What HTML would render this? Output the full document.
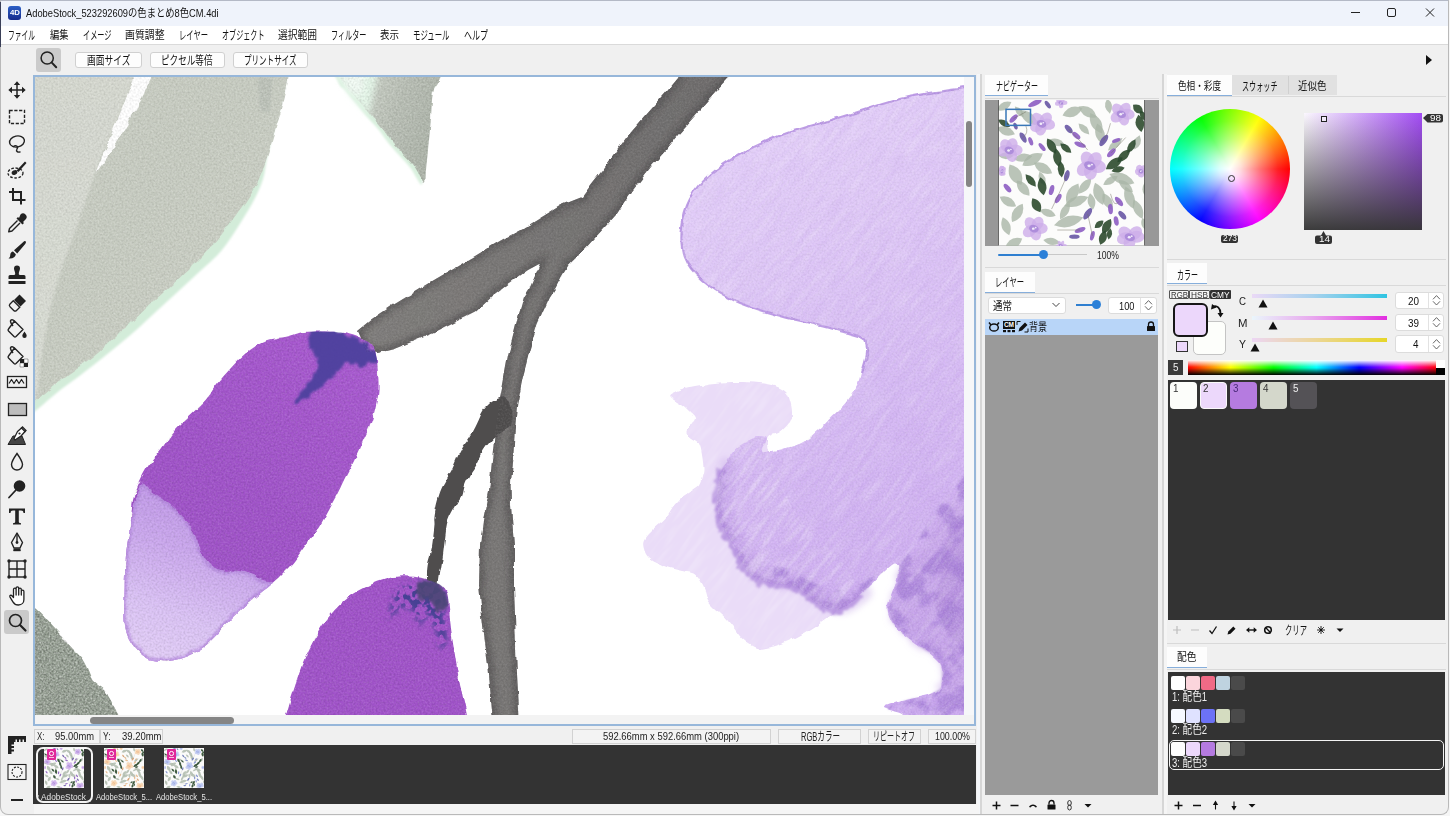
<!DOCTYPE html>
<html lang="ja"><head><meta charset="utf-8"><title>4D</title><style>
*{box-sizing:border-box;margin:0;padding:0}
html,body{width:1450px;height:816px;overflow:hidden;background:#f6f6f6;font-family:"Liberation Sans","Noto Sans CJK JP",sans-serif;font-size:11px;color:#1a1a1a}
.a{position:absolute}
.t{position:absolute;white-space:nowrap;transform-origin:0 50%}
.btn{position:absolute;background:#fdfdfd;border:1px solid #d0d0d0;border-radius:3px}
.tab{position:absolute;background:#fdfdfd;border-bottom:1.5px solid #86aedb}
.tabi{position:absolute;background:#e1e1e1}
.hl{position:absolute;height:1px;background:#d9d9d9}
.spin{position:absolute;background:#fff;border:1px solid #dcdcdc;border-radius:3px}
.dark{position:absolute;background:#333333}
svg{position:absolute;overflow:visible}
</style></head><body>
<div class="a" style="left:0;top:0;width:1449px;height:815px;background:#f0f0f0;border:1px solid #b9b9b9;border-top-color:#b4b9c6;border-radius:0 0 8px 8px"></div>
<div class="a" style="left:1px;top:1px;width:1447px;height:25px;background:#eff3fb"></div>
<div class="a" style="left:0;top:2px;width:1px;height:45px;background:#3a4058"></div>
<div class="a" style="left:1px;top:26px;width:1447px;height:18px;background:#ffffff"></div>
<div class="a" style="left:1px;top:44px;width:1447px;height:1px;background:#dadada"></div>
<div class="a" style="left:8px;top:6px;width:13px;height:13.5px;border-radius:3px;background:linear-gradient(#2b5fc6,#172c8c)"></div>
<div class="t" style="left:9.5px;top:7.8px;font-size:7.5px;line-height:10.5px;height:10.5px;color:#fff;transform:scaleX(1.042);font-weight:bold;">4D</div>
<div class="t" style="left:26px;top:6.2px;font-size:11.5px;line-height:14.5px;height:14.5px;color:#111;transform:scaleX(0.810);">AdobeStock_523292609の色まとめ8色CM.4di</div>
<svg style="left:1340px;top:0" width="110" height="26" viewBox="0 0 110 26"><g stroke="#222" stroke-width="1" fill="none"><path d="M11 12.5h9"/><rect x="47.5" y="8.5" width="8" height="8" rx="1.5"/><path d="M86 8.5l8 8M94 8.5l-8 8"/></g></svg>
<div class="t" style="left:8px;top:29.4px;font-size:12px;line-height:15px;height:15px;color:#111;transform:scaleX(0.562);">ファイル</div>
<div class="t" style="left:50px;top:28.2px;font-size:11px;line-height:14px;height:14px;color:#111;transform:scaleX(0.841);">編集</div>
<div class="t" style="left:83px;top:29.4px;font-size:12px;line-height:15px;height:15px;color:#111;transform:scaleX(0.597);">イメージ</div>
<div class="t" style="left:125px;top:28.2px;font-size:11px;line-height:14px;height:14px;color:#111;transform:scaleX(0.898);">画質調整</div>
<div class="t" style="left:178.5px;top:29.4px;font-size:12px;line-height:15px;height:15px;color:#111;transform:scaleX(0.609);">レイヤー</div>
<div class="t" style="left:221.5px;top:29.4px;font-size:12px;line-height:15px;height:15px;color:#111;transform:scaleX(0.590);">オブジェクト</div>
<div class="t" style="left:278px;top:28.2px;font-size:11px;line-height:14px;height:14px;color:#111;transform:scaleX(0.886);">選択範囲</div>
<div class="t" style="left:331px;top:29.4px;font-size:12px;line-height:15px;height:15px;color:#111;transform:scaleX(0.594);">フィルター</div>
<div class="t" style="left:380px;top:28.2px;font-size:11px;line-height:14px;height:14px;color:#111;transform:scaleX(0.864);">表示</div>
<div class="t" style="left:412.5px;top:29.4px;font-size:12px;line-height:15px;height:15px;color:#111;transform:scaleX(0.617);">モジュール</div>
<div class="t" style="left:463.5px;top:29.4px;font-size:12px;line-height:15px;height:15px;color:#111;transform:scaleX(0.666);">ヘルプ</div>
<div class="a" style="left:36px;top:47.7px;width:24.5px;height:24px;background:#cbcbcb;border-radius:3px"></div>
<svg style="left:36px;top:48px" width="24" height="23" viewBox="0 0 24 23"><circle cx="11.2" cy="10" r="6.1" fill="none" stroke="#222" stroke-width="1.5"/><path d="M15.8 14.6l4.4 4.6" stroke="#222" stroke-width="2" stroke-linecap="round"/></svg>
<div class="btn" style="left:74.5px;top:52px;width:67.0px;height:16px"></div>
<div class="t" style="left:86.5px;top:53.5px;font-size:12px;line-height:15px;height:15px;color:#111;transform:scaleX(0.729);">画面サイズ</div>
<div class="btn" style="left:149.5px;top:52px;width:75.0px;height:16px"></div>
<div class="t" style="left:161px;top:53.6px;font-size:12px;line-height:15px;height:15px;color:#111;transform:scaleX(0.715);">ピクセル等倍</div>
<div class="btn" style="left:233px;top:52px;width:75px;height:16px"></div>
<div class="t" style="left:244px;top:54.2px;font-size:12px;line-height:15px;height:15px;color:#111;transform:scaleX(0.628);">プリントサイズ</div>
<svg style="left:1424px;top:54px" width="10" height="12" viewBox="0 0 10 12"><path d="M2 1l6 5-6 5z" fill="#111"/></svg>
<div class="a" style="left:4px;top:610px;width:25px;height:24px;background:#cacaca;border-radius:3px"></div>
<svg style="left:4.5px;top:78px" width="24" height="24" viewBox="0 0 24 24"><path d="M12 5.5v13M5.5 12h13" stroke="#222" stroke-width="1.5" fill="none"/><path d="M12 3.3l3.2 3.7H8.8zM12 20.7l3.2-3.7H8.8zM3.3 12l3.7-3.2v6.4zM20.7 12l-3.7-3.2v6.4z" fill="#222"/></svg>
<svg style="left:4.5px;top:104.5px" width="24" height="24" viewBox="0 0 24 24"><rect x="4.5" y="5.5" width="15" height="13" fill="none" stroke="#222" stroke-width="1.4" stroke-dasharray="3.2 1.6"/></svg>
<svg style="left:4.5px;top:131px" width="24" height="24" viewBox="0 0 24 24"><g fill="none" stroke="#222" stroke-width="1.4" stroke-linecap="round"><ellipse cx="12" cy="10.5" rx="7.5" ry="5.5" transform="rotate(-12 12 10.5)"/><path d="M8.5 15.5c2.5-2 5 0 3.5 2.5s1 3.5 3 3"/></g></svg>
<svg style="left:4.5px;top:157.5px" width="24" height="24" viewBox="0 0 24 24"><g fill="none" stroke="#222" stroke-width="1.3"><ellipse cx="10.5" cy="15" rx="7.5" ry="5" stroke-dasharray="2.6 1.6"/></g><ellipse cx="9.5" cy="14.5" rx="3" ry="2.2" fill="#222" transform="rotate(-30 9.5 14.5)"/><path d="M11.5 12.5L20 3.5l1.5 1.5-8 9z" fill="#222"/></svg>
<svg style="left:4.5px;top:184px" width="24" height="24" viewBox="0 0 24 24"><g fill="none" stroke="#222" stroke-width="2"><path d="M8 4v12h12.5M4 8h12v12.5"/></g></svg>
<svg style="left:4.5px;top:210.5px" width="24" height="24" viewBox="0 0 24 24"><path d="M15.5 3.5a3 3 0 0 1 5 5l-2.5 2.5 1 1-1.5 1.5-6-6 1.5-1.5 1 1z" fill="#222"/><path d="M12.5 9.5l-8 8-.800 3.3 3.3-.800 8-8" fill="none" stroke="#222" stroke-width="1.4" stroke-linejoin="round"/></svg>
<svg style="left:4.5px;top:237.5px" width="24" height="24" viewBox="0 0 24 24"><path d="M20.5 3.2c.800.8.500 1.8-.300 2.8l-8 9.5-3.2-3.2 9.3-8.4c.800-.700 1.5-1.4 2.2-.700zM8 13.5l2.8 2.8c-.300 2.7-2.8 4.7-7.3 4.2 1.8-1.2 1.5-2.4 1.8-4 .300-1.7 1.2-2.7 2.7-3z" fill="#222"/></svg>
<svg style="left:4.5px;top:264px" width="24" height="24" viewBox="0 0 24 24"><path d="M9 4.5a3 3 0 0 1 6 0c0 2-1.2 3-1.2 5.2 0 1 .700 1.3 2 1.3H19a1.5 1.5 0 0 1 1.5 1.5V15h-17v-2.5A1.5 1.5 0 0 1 5 11h3.2c1.3 0 2-.300 2-1.3C10.2 7.5 9 6.5 9 4.5zM3.5 17h17v3h-17z" fill="#222"/></svg>
<svg style="left:4.5px;top:290.5px" width="24" height="24" viewBox="0 0 24 24"><path d="M14.5 3.5l6.5 6.5-5.5 5.5-6.5-6.5z" fill="#222"/><path d="M8.3 9.7l6.5 6.5-3.3 3.3a2 2 0 0 1-2.8 0l-3.7-3.7a2 2 0 0 1 0-2.8z" fill="none" stroke="#222" stroke-width="1.3"/></svg>
<svg style="left:4.5px;top:317px" width="24" height="24" viewBox="0 0 24 24"><g fill="none" stroke="#222" stroke-width="1.4" stroke-linejoin="round"><path d="M9.5 4l8.5 8.5-7 7a1.5 1.5 0 0 1-2 0L3.5 14a1.5 1.5 0 0 1 0-2z"/><path d="M9.5 4C7 1.5 4.5 3 6 6l2 3"/></g><path d="M19.5 14.5c1.5 2.2 2.2 3.3 2.2 4.3a2.2 2.2 0 0 1-4.4 0c0-1 .700-2.1 2.2-4.3z" fill="#222"/></svg>
<svg style="left:4.5px;top:343.5px" width="24" height="24" viewBox="0 0 24 24"><g fill="none" stroke="#222" stroke-width="1.4" stroke-linejoin="round"><path d="M9.5 4l8.5 8.5-7 7a1.5 1.5 0 0 1-2 0L3.5 14a1.5 1.5 0 0 1 0-2z"/><path d="M9.5 4C7 1.5 4.5 3 6 6l2 3"/></g><path d="M15 15h4v4h-4zM19 19h4v4h-4z" fill="#222"/><path d="M19 15h4v4h-4zM15 19h4v4h-4z" fill="#fff" stroke="#222" stroke-width=".4"/></svg>
<svg style="left:4.5px;top:370px" width="24" height="24" viewBox="0 0 24 24"><rect x="2.5" y="6.5" width="19" height="11" fill="none" stroke="#222" stroke-width="1.3"/><path d="M4 13.5l2.5-4 2.5 4 2.5-4 2.5 4 2.5-4 2.5 4" fill="none" stroke="#222" stroke-width="1.2" stroke-linejoin="round"/></svg>
<svg style="left:4.5px;top:397px" width="24" height="24" viewBox="0 0 24 24"><rect x="3.5" y="6.5" width="18" height="12" fill="#bdbdbd" stroke="#222" stroke-width="1.3"/></svg>
<svg style="left:4.5px;top:423.5px" width="24" height="24" viewBox="0 0 24 24"><path d="M3 20.5l5-8.5h9l3.5 8.5z" fill="#444" stroke="#222" stroke-width="1"/><path d="M9 14.5l3.5-7 4-3.5 3.5 3.5-4 4.5-6 4z" fill="#fff" stroke="#222" stroke-width="1.3" stroke-linejoin="round"/><path d="M16 4.5l1.5-1.5 3.5 3.5-1.5 1.5" fill="none" stroke="#222" stroke-width="1.3"/><circle cx="14.5" cy="9.5" r="1.1" fill="#222"/></svg>
<svg style="left:4.5px;top:450px" width="24" height="24" viewBox="0 0 24 24"><path d="M12 3.5c3.5 5 5.5 8 5.5 11a5.5 5.5 0 0 1-11 0c0-3 2-6 5.5-11z" fill="none" stroke="#222" stroke-width="1.4"/></svg>
<svg style="left:4.5px;top:477px" width="24" height="24" viewBox="0 0 24 24"><circle cx="14.5" cy="9" r="5.8" fill="#222"/><path d="M10.5 13.5L4 20.5" stroke="#222" stroke-width="1.8" stroke-linecap="round"/></svg>
<svg style="left:4.5px;top:503.5px" width="24" height="24" viewBox="0 0 24 24"><path d="M4 4.5h16v4.5h-1.5c-.200-1.8-.800-2.5-2.5-2.5h-2.2v11c0 1.3.500 1.7 2.2 1.7v1.3H8v-1.3c1.7 0 2.2-.400 2.2-1.7v-11H8C6.3 6.5 5.7 7.2 5.5 9H4z" fill="#222"/></svg>
<svg style="left:4.5px;top:530px" width="24" height="24" viewBox="0 0 24 24"><g fill="none" stroke="#222" stroke-width="1.4" stroke-linejoin="round"><path d="M12 3l5.5 9.5-2.5 5.5H9l-2.5-5.5z"/><path d="M12 3.5v8"/><path d="M8.5 20.5h7"/></g><circle cx="12" cy="12.5" r="1.4" fill="#222"/><path d="M8.5 18.5h7v2.5h-7z" fill="#222"/></svg>
<svg style="left:4.5px;top:557px" width="24" height="24" viewBox="0 0 24 24"><g fill="none" stroke="#222" stroke-width="1.4"><rect x="4" y="4" width="16" height="16"/><path d="M12 4v16M4 12h16"/></g><g fill="#222"><circle cx="4" cy="4" r="1.7"/><circle cx="20" cy="4" r="1.7"/><circle cx="4" cy="20" r="1.7"/><circle cx="20" cy="20" r="1.7"/></g></svg>
<svg style="left:4.5px;top:583.5px" width="24" height="24" viewBox="0 0 24 24"><path d="M8.5 12V5.5a1.3 1.3 0 0 1 2.6 0V4.2a1.3 1.3 0 0 1 2.6 0v1.3a1.3 1.3 0 0 1 2.6 0v2a1.3 1.3 0 0 1 2.6 0v8c0 3-2 5.5-5.5 5.5-3 0-4.3-1.2-5.5-3.2l-3-5c-.600-1.1 1-2.2 2-1.1l1.6 1.8zM11.1 5.5V11M13.7 5.5V11M16.3 7.5V11" fill="#fff" stroke="#222" stroke-width="1.3" stroke-linejoin="round" stroke-linecap="round"/></svg>
<svg style="left:4.5px;top:610px" width="24" height="24" viewBox="0 0 24 24"><circle cx="10.5" cy="10.5" r="6" fill="none" stroke="#222" stroke-width="1.7"/><path d="M15 15l5.5 5.5" stroke="#222" stroke-width="2.2" stroke-linecap="round"/></svg>
<svg style="left:7px;top:735px" width="20" height="20" viewBox="0 0 20 20"><path d="M1 1h18v6h-2V4.5h-1.5V7h-2V4.5H12V7h-2V4.5H8.5V7H7v2.5H4.5V11H7v2H4.5v1.5H7v2H4.5V19H1z" fill="#222"/></svg>
<svg style="left:7px;top:763px" width="20" height="18" viewBox="0 0 20 18"><rect x="1" y="1.5" width="18" height="15" fill="#f4f4f4" stroke="#222" stroke-width="1.1"/><circle cx="10" cy="9" r="5" fill="none" stroke="#222" stroke-width="1.1" stroke-dasharray="2 1.3"/></svg>
<div class="a" style="left:11px;top:799px;width:12px;height:2px;background:#222"></div>
<div class="a" style="left:33px;top:75px;width:943px;height:651px;background:#97b7da"></div>
<div class="a" style="left:35px;top:77px;width:939px;height:647px;background:#fff"></div>
<svg style="left:0;top:0" width="1450" height="816" viewBox="0 0 1450 816">
<defs>
<clipPath id="cv"><rect x="35" y="77" width="929" height="638"/></clipPath>
<filter id="rough" x="-5%" y="-5%" width="110%" height="110%"><feTurbulence type="fractalNoise" baseFrequency="0.09" numOctaves="2" seed="3" result="n"/><feDisplacementMap in="SourceGraphic" in2="n" scale="5" xChannelSelector="R" yChannelSelector="G"/></filter>
<filter id="rough2" x="-5%" y="-5%" width="110%" height="110%"><feTurbulence type="fractalNoise" baseFrequency="0.05" numOctaves="3" seed="11" result="n"/><feDisplacementMap in="SourceGraphic" in2="n" scale="9" xChannelSelector="R" yChannelSelector="G"/></filter>
<filter id="soft" x="-10%" y="-10%" width="120%" height="120%"><feGaussianBlur stdDeviation="3"/></filter>
<filter id="soft2" x="-10%" y="-10%" width="120%" height="120%"><feGaussianBlur stdDeviation="1.2"/></filter>
<filter id="blot" x="-10%" y="-10%" width="120%" height="120%"><feTurbulence type="fractalNoise" baseFrequency="0.12" numOctaves="3" seed="5" result="n"/><feDisplacementMap in="SourceGraphic" in2="n" scale="12" xChannelSelector="R" yChannelSelector="G" result="d"/><feGaussianBlur in="d" stdDeviation="0.8"/></filter>
<filter id="mottle" x="0" y="0" width="100%" height="100%" color-interpolation-filters="sRGB"><feTurbulence type="fractalNoise" baseFrequency="0.045" numOctaves="4" seed="14" result="n"/><feColorMatrix in="n" type="matrix" values="0 0 0 0 0.63  0 0 0 0 0.47  0 0 0 0 0.84  0 0 0 7 -3.3" result="m"/><feComposite in="m" in2="SourceGraphic" operator="in"/></filter>
<filter id="streak" x="0" y="0" width="100%" height="100%"><feTurbulence type="fractalNoise" baseFrequency="0.03 0.2" numOctaves="2" seed="4" result="n"/><feColorMatrix in="n" type="matrix" values="0 0 0 0 1  0 0 0 0 1  0 0 0 0 1  2.6 0 0 0 -1.05" result="m"/><feComposite in="m" in2="SourceGraphic" operator="in"/></filter>
<filter id="streakd" x="0" y="0" width="100%" height="100%" color-interpolation-filters="sRGB"><feTurbulence type="fractalNoise" baseFrequency="0.03 0.2" numOctaves="2" seed="9" result="n"/><feColorMatrix in="n" type="matrix" values="0 0 0 0 0.72  0 0 0 0 0.56  0 0 0 0 0.9  2.6 0 0 0 -1.1" result="m"/><feComposite in="m" in2="SourceGraphic" operator="in"/></filter>
<filter id="specks" x="-10%" y="-10%" width="120%" height="120%" color-interpolation-filters="sRGB"><feGaussianBlur in="SourceGraphic" stdDeviation="3" result="b"/><feTurbulence type="fractalNoise" baseFrequency="0.16" numOctaves="2" seed="6" result="n"/><feColorMatrix in="n" type="matrix" values="0 0 0 0 0.24  0 0 0 0 0.25  0 0 0 0 0.56  0 0 0 8 -3.7" result="m"/><feComposite in="m" in2="b" operator="in"/></filter>
<filter id="grain" x="0" y="0" width="100%" height="100%"><feTurbulence type="fractalNoise" baseFrequency="0.55" numOctaves="2" seed="8" result="n"/><feColorMatrix in="n" type="matrix" values="0 0 0 0 1  0 0 0 0 1  0 0 0 0 1  1.6 0 0 0 -0.62" result="m"/><feComposite in="m" in2="SourceGraphic" operator="in"/></filter>
<filter id="graind" x="0" y="0" width="100%" height="100%"><feTurbulence type="fractalNoise" baseFrequency="0.5" numOctaves="2" seed="21" result="n"/><feColorMatrix in="n" type="matrix" values="0 0 0 0 0  0 0 0 0 0  0 0 0 0 0  1.6 0 0 0 -0.62" result="m"/><feComposite in="m" in2="SourceGraphic" operator="in"/></filter>
<linearGradient id="gLeaf" x1="0" y1="0" x2="1" y2="1"><stop offset="0" stop-color="#c9cdc2"/><stop offset=".5" stop-color="#c6cbc0"/><stop offset="1" stop-color="#cfd3c8"/></linearGradient>
<linearGradient id="gLeafL" x1="0" y1="0" x2="0" y2="1"><stop offset="0" stop-color="#d4d7ce"/><stop offset="1" stop-color="#d9dcd4"/></linearGradient>
<linearGradient id="gLeaf2" gradientUnits="userSpaceOnUse" x1="345" y1="80" x2="440" y2="110"><stop offset="0" stop-color="#d6e6d9"/><stop offset=".25" stop-color="#c6ccc2"/><stop offset=".6" stop-color="#b8beb4"/><stop offset="1" stop-color="#adb4a9"/></linearGradient>
<linearGradient id="gStem" x1="0" y1="0" x2="1" y2="0"><stop offset="0" stop-color="#807e7c"/><stop offset="1" stop-color="#6e6c6c"/></linearGradient>
<linearGradient id="gBud1" x1="0.9" y1="0" x2="0.2" y2="1"><stop offset="0" stop-color="#a95bd1"/><stop offset=".5" stop-color="#a153ca"/><stop offset="1" stop-color="#9f51c7"/></linearGradient>
<linearGradient id="gBudL" x1="0.6" y1="0" x2="0.3" y2="1"><stop offset="0" stop-color="#bd93e6"/><stop offset=".4" stop-color="#cba8ee"/><stop offset=".75" stop-color="#dcc4f6"/><stop offset="1" stop-color="#e2cdf7"/></linearGradient>
<linearGradient id="gPetal" gradientUnits="userSpaceOnUse" x1="700" y1="120" x2="950" y2="650"><stop offset="0" stop-color="#e5d1fa"/><stop offset=".3" stop-color="#dec6f7"/><stop offset=".6" stop-color="#d5b8f4"/><stop offset="1" stop-color="#ccaaf0"/></linearGradient>
</defs>
<g clip-path="url(#cv)">
<rect x="35" y="77" width="929" height="640" fill="#ffffff"/>
<path d="M-20.0 30.0C31.5 -36.7 238.0 22.2 289.0 30.0C340.0 37.8 287.3 64.7 286.0 77.0C284.7 89.3 283.0 95.0 281.0 104.0C279.0 113.0 276.3 122.0 274.0 131.0C271.7 140.0 268.8 150.0 267.0 158.0C265.2 166.0 265.2 172.0 263.0 179.0C260.8 186.0 257.7 192.8 254.0 200.0C250.3 207.2 246.3 213.7 241.0 222.0C235.7 230.3 229.3 241.3 222.0 250.0C214.7 258.7 206.6 265.0 197.0 274.0C187.4 283.0 175.7 293.7 164.4 304.0C153.1 314.3 141.9 325.2 129.3 336.0C116.7 346.8 101.1 359.1 89.0 368.6C76.9 378.1 65.2 386.3 56.6 393.0C48.1 399.7 43.8 404.5 37.7 409.0C31.6 413.5 29.6 416.5 20.0 420.0C10.4 423.5 -13.3 495.0 -20.0 430.0C-26.7 365.0 -71.5 96.7 -20.0 30.0Z" fill="#d3ecd9" filter="url(#soft2)"/>
<g filter="url(#rough)"><path d="M-20.0 30.0C32.2 -35.0 241.6 22.2 293.0 30.0C344.4 37.8 290.1 64.7 288.4 77.0C286.7 89.3 285.2 95.0 283.0 104.0C280.8 113.0 277.7 122.0 275.0 131.0C272.3 140.0 269.5 149.9 266.8 158.0C264.1 166.1 261.8 172.7 258.7 179.4C255.6 186.1 252.0 191.7 248.0 198.0C244.0 204.3 239.4 210.2 234.5 217.0C229.6 223.8 222.8 233.2 218.3 238.7C213.8 244.2 211.6 245.8 207.5 250.0C203.4 254.2 198.5 259.5 194.0 264.0C189.5 268.5 185.5 272.3 180.5 277.0C175.5 281.7 169.4 287.1 164.0 292.0C158.6 296.9 153.3 301.6 148.0 306.6C142.7 311.6 137.3 317.1 132.0 322.0C126.7 326.9 121.7 331.0 116.0 336.0C110.3 341.0 103.9 347.0 98.0 352.0C92.1 357.0 86.1 361.8 80.8 366.0C75.5 370.2 71.0 373.4 66.0 377.0C61.0 380.6 55.7 384.0 51.0 387.5C46.3 391.0 42.9 394.2 37.7 398.0C32.5 401.8 29.6 406.3 20.0 410.0C10.4 413.7 -13.3 483.3 -20.0 420.0C-26.7 356.7 -72.2 95.0 -20.0 30.0Z" fill="url(#gLeaf)"/></g>
<g filter="url(#soft2)"><path d="M-20.0 30.0C6.3 -36.7 112.4 22.0 138.0 30.0C163.6 38.0 136.1 65.1 133.5 78.0C130.9 90.9 126.5 97.4 122.5 107.5C118.5 117.6 113.9 127.8 109.5 138.5C105.1 149.2 99.9 161.2 96.0 171.5C92.1 181.8 90.0 188.6 86.0 200.0C82.0 211.4 76.7 226.7 72.0 240.0C67.3 253.3 62.0 266.7 58.0 280.0C54.0 293.3 50.8 306.7 48.0 320.0C45.2 333.3 43.0 347.0 41.0 360.0C39.0 373.0 39.5 388.0 36.0 398.0C32.5 408.0 29.3 414.7 20.0 420.0C10.7 425.3 -13.3 495.0 -20.0 430.0C-26.7 365.0 -46.3 96.7 -20.0 30.0Z" fill="url(#gLeafL)"/></g>
<g filter="url(#rough)"><path d="M134.0 72.0L152.0 72.0L151.0 79.0L140.5 101.0L127.0 125.0L111.5 151.5L95.5 173.5L96.5 170.0L109.5 138.5L122.5 107.5L133.5 79.0Z" fill="#ffffff"/></g>
<path d="M258 78h14l-2 32c-3 3-8 2-10-1z" fill="#b4bab2" opacity=".6" filter="url(#soft2)"/>
<path d="M330.0 40.0C347.5 33.5 427.6 33.8 446.0 40.0C464.4 46.2 442.7 68.2 440.5 77.0C438.3 85.8 434.6 86.2 433.0 93.0C431.4 99.8 431.8 108.5 431.0 118.0C430.2 127.5 428.8 141.3 428.0 150.0C427.2 158.7 426.5 164.7 426.0 170.0C425.5 175.3 425.7 180.3 425.0 182.0C424.3 183.7 423.9 182.7 422.0 180.0C420.1 177.3 416.8 170.5 413.5 166.0C410.2 161.5 405.6 157.1 402.0 153.0C398.4 148.9 395.5 146.0 392.0 141.7C388.5 137.4 384.7 131.5 381.0 127.0C377.3 122.5 373.8 119.2 370.0 114.7C366.2 110.2 361.7 104.5 358.0 100.0C354.3 95.5 350.9 91.5 348.0 88.0C345.1 84.5 343.8 87.0 340.8 79.0C337.8 71.0 312.5 46.5 330.0 40.0Z" fill="#d9f0de" transform="translate(-3 2)" filter="url(#soft2)"/>
<g filter="url(#rough)"><path d="M330.0 40.0C347.5 33.5 427.6 33.8 446.0 40.0C464.4 46.2 442.7 68.2 440.5 77.0C438.3 85.8 434.6 86.2 433.0 93.0C431.4 99.8 431.8 108.5 431.0 118.0C430.2 127.5 428.8 141.3 428.0 150.0C427.2 158.7 426.5 164.7 426.0 170.0C425.5 175.3 425.7 180.3 425.0 182.0C424.3 183.7 423.9 182.7 422.0 180.0C420.1 177.3 416.8 170.5 413.5 166.0C410.2 161.5 405.6 157.1 402.0 153.0C398.4 148.9 395.5 146.0 392.0 141.7C388.5 137.4 384.7 131.5 381.0 127.0C377.3 122.5 373.8 119.2 370.0 114.7C366.2 110.2 361.7 104.5 358.0 100.0C354.3 95.5 350.9 91.5 348.0 88.0C345.1 84.5 343.8 87.0 340.8 79.0C337.8 71.0 312.5 46.5 330.0 40.0Z" fill="url(#gLeaf2)"/></g>
<path d="M334 66L380 66L372 100L369.5 116L352 97Z" fill="#e4f6e8" filter="url(#soft)"/>
<path d="M334 66L366 66L362 96L350 92Z" fill="#f2fbf4" filter="url(#soft)"/>
<path d="M330.0 40.0C347.5 33.5 427.6 33.8 446.0 40.0C464.4 46.2 442.7 68.2 440.5 77.0C438.3 85.8 434.6 86.2 433.0 93.0C431.4 99.8 431.8 108.5 431.0 118.0C430.2 127.5 428.8 141.3 428.0 150.0C427.2 158.7 426.5 164.7 426.0 170.0C425.5 175.3 425.7 180.3 425.0 182.0C424.3 183.7 423.9 182.7 422.0 180.0C420.1 177.3 416.8 170.5 413.5 166.0C410.2 161.5 405.6 157.1 402.0 153.0C398.4 148.9 395.5 146.0 392.0 141.7C388.5 137.4 384.7 131.5 381.0 127.0C377.3 122.5 373.8 119.2 370.0 114.7C366.2 110.2 361.7 104.5 358.0 100.0C354.3 95.5 350.9 91.5 348.0 88.0C345.1 84.5 343.8 87.0 340.8 79.0C337.8 71.0 312.5 46.5 330.0 40.0Z" fill="#fff" filter="url(#grain)" opacity=".3"/>
<path d="M330.0 40.0C347.5 33.5 427.6 33.8 446.0 40.0C464.4 46.2 442.7 68.2 440.5 77.0C438.3 85.8 434.6 86.2 433.0 93.0C431.4 99.8 431.8 108.5 431.0 118.0C430.2 127.5 428.8 141.3 428.0 150.0C427.2 158.7 426.5 164.7 426.0 170.0C425.5 175.3 425.7 180.3 425.0 182.0C424.3 183.7 423.9 182.7 422.0 180.0C420.1 177.3 416.8 170.5 413.5 166.0C410.2 161.5 405.6 157.1 402.0 153.0C398.4 148.9 395.5 146.0 392.0 141.7C388.5 137.4 384.7 131.5 381.0 127.0C377.3 122.5 373.8 119.2 370.0 114.7C366.2 110.2 361.7 104.5 358.0 100.0C354.3 95.5 350.9 91.5 348.0 88.0C345.1 84.5 343.8 87.0 340.8 79.0C337.8 71.0 312.5 46.5 330.0 40.0Z" fill="#6a7468" filter="url(#graind)" opacity=".15"/>
<g filter="url(#rough)"><path d="M10.0 590.0C14.2 568.9 29.0 603.2 35.3 608.4C41.6 613.5 44.3 617.3 47.8 620.9C51.2 624.5 53.0 626.8 56.0 630.0C59.0 633.2 62.7 637.2 65.5 640.4C68.3 643.6 70.3 646.1 73.0 649.0C75.7 651.9 79.2 654.8 81.5 658.0C83.8 661.2 85.2 664.4 87.0 668.0C88.8 671.6 90.2 676.7 92.0 679.5C93.8 682.3 95.9 683.2 98.0 685.0C100.1 686.8 102.6 687.7 104.6 690.0C106.6 692.3 108.3 696.0 110.0 699.0C111.7 702.0 113.5 705.3 115.0 708.0C116.5 710.7 117.3 711.3 118.8 715.0C120.3 718.7 142.1 726.7 124.0 730.0C105.9 733.3 29.0 758.3 10.0 735.0C-9.0 711.7 5.8 611.1 10.0 590.0Z" fill="#98a295"/></g>
<path d="M10.0 590.0C14.2 568.9 29.0 603.2 35.3 608.4C41.6 613.5 44.3 617.3 47.8 620.9C51.2 624.5 53.0 626.8 56.0 630.0C59.0 633.2 62.7 637.2 65.5 640.4C68.3 643.6 70.3 646.1 73.0 649.0C75.7 651.9 79.2 654.8 81.5 658.0C83.8 661.2 85.2 664.4 87.0 668.0C88.8 671.6 90.2 676.7 92.0 679.5C93.8 682.3 95.9 683.2 98.0 685.0C100.1 686.8 102.6 687.7 104.6 690.0C106.6 692.3 108.3 696.0 110.0 699.0C111.7 702.0 113.5 705.3 115.0 708.0C116.5 710.7 117.3 711.3 118.8 715.0C120.3 718.7 142.1 726.7 124.0 730.0C105.9 733.3 29.0 758.3 10.0 735.0C-9.0 711.7 5.8 611.1 10.0 590.0Z" fill="#fff" filter="url(#grain)" opacity=".6"/>
<path d="M10.0 590.0C14.2 568.9 29.0 603.2 35.3 608.4C41.6 613.5 44.3 617.3 47.8 620.9C51.2 624.5 53.0 626.8 56.0 630.0C59.0 633.2 62.7 637.2 65.5 640.4C68.3 643.6 70.3 646.1 73.0 649.0C75.7 651.9 79.2 654.8 81.5 658.0C83.8 661.2 85.2 664.4 87.0 668.0C88.8 671.6 90.2 676.7 92.0 679.5C93.8 682.3 95.9 683.2 98.0 685.0C100.1 686.8 102.6 687.7 104.6 690.0C106.6 692.3 108.3 696.0 110.0 699.0C111.7 702.0 113.5 705.3 115.0 708.0C116.5 710.7 117.3 711.3 118.8 715.0C120.3 718.7 142.1 726.7 124.0 730.0C105.9 733.3 29.0 758.3 10.0 735.0C-9.0 711.7 5.8 611.1 10.0 590.0Z" fill="#3a4a38" filter="url(#graind)" opacity=".4"/>
<clipPath id="cst"><path d="M672.0 40.0L678.3 77.8L664.8 94.0L651.3 109.0L639.5 122.6L626.0 138.0L614.0 154.8L604.0 168.3L592.0 183.5L582.0 197.0L560.5 205.5L524.0 228.0L501.5 240.0L475.0 256.0L434.0 280.0L394.0 304.5L370.0 320.5L357.0 331.0L366.0 352.0L378.0 353.0L394.0 349.0L434.0 333.0L475.0 312.5L491.7 297.0L509.0 283.5L528.0 270.0L540.0 263.5L535.0 276.0L529.0 289.5L524.0 297.0L516.0 324.0L508.0 356.0L502.5 386.0L499.8 399.4L494.4 437.0L491.7 464.0L489.0 491.0L483.6 517.0L480.0 545.4L479.0 586.0L483.0 626.0L488.3 666.7L492.4 714.7L493.0 730.0L520.0 730.0L519.3 714.7L516.6 666.7L515.3 626.0L514.0 586.0L514.0 545.4L511.0 505.0L510.6 485.7L513.3 458.7L514.6 431.8L517.3 404.8L522.7 377.9L529.5 351.0L537.5 324.0L549.7 297.0L555.5 288.0L562.0 276.0L568.5 265.0L583.0 251.0L593.0 240.0L604.0 228.0L615.8 215.0L627.6 197.0L639.5 181.8L651.3 166.6L664.8 151.4L678.3 134.5L691.9 119.3L703.7 105.7L717.2 90.5L729.0 77.8L735.0 40.0Z"/></clipPath>
<g filter="url(#rough)"><path d="M672.0 40.0L678.3 77.8L664.8 94.0L651.3 109.0L639.5 122.6L626.0 138.0L614.0 154.8L604.0 168.3L592.0 183.5L582.0 197.0L560.5 205.5L524.0 228.0L501.5 240.0L475.0 256.0L434.0 280.0L394.0 304.5L370.0 320.5L357.0 331.0L366.0 352.0L378.0 353.0L394.0 349.0L434.0 333.0L475.0 312.5L491.7 297.0L509.0 283.5L528.0 270.0L540.0 263.5L535.0 276.0L529.0 289.5L524.0 297.0L516.0 324.0L508.0 356.0L502.5 386.0L499.8 399.4L494.4 437.0L491.7 464.0L489.0 491.0L483.6 517.0L480.0 545.4L479.0 586.0L483.0 626.0L488.3 666.7L492.4 714.7L493.0 730.0L520.0 730.0L519.3 714.7L516.6 666.7L515.3 626.0L514.0 586.0L514.0 545.4L511.0 505.0L510.6 485.7L513.3 458.7L514.6 431.8L517.3 404.8L522.7 377.9L529.5 351.0L537.5 324.0L549.7 297.0L555.5 288.0L562.0 276.0L568.5 265.0L583.0 251.0L593.0 240.0L604.0 228.0L615.8 215.0L627.6 197.0L639.5 181.8L651.3 166.6L664.8 151.4L678.3 134.5L691.9 119.3L703.7 105.7L717.2 90.5L729.0 77.8L735.0 40.0Z" fill="url(#gStem)"/><g clip-path="url(#cst)"><path d="M672.0 40.0L678.3 77.8L664.8 94.0L651.3 109.0L639.5 122.6L626.0 138.0L614.0 154.8L604.0 168.3L592.0 183.5L582.0 197.0L560.5 205.5L524.0 228.0L501.5 240.0L475.0 256.0L434.0 280.0L394.0 304.5L370.0 320.5L357.0 331.0L366.0 352.0L378.0 353.0L394.0 349.0L434.0 333.0L475.0 312.5L491.7 297.0L509.0 283.5L528.0 270.0L540.0 263.5L535.0 276.0L529.0 289.5L524.0 297.0L516.0 324.0L508.0 356.0L502.5 386.0L499.8 399.4L494.4 437.0L491.7 464.0L489.0 491.0L483.6 517.0L480.0 545.4L479.0 586.0L483.0 626.0L488.3 666.7L492.4 714.7L493.0 730.0L520.0 730.0L519.3 714.7L516.6 666.7L515.3 626.0L514.0 586.0L514.0 545.4L511.0 505.0L510.6 485.7L513.3 458.7L514.6 431.8L517.3 404.8L522.7 377.9L529.5 351.0L537.5 324.0L549.7 297.0L555.5 288.0L562.0 276.0L568.5 265.0L583.0 251.0L593.0 240.0L604.0 228.0L615.8 215.0L627.6 197.0L639.5 181.8L651.3 166.6L664.8 151.4L678.3 134.5L691.9 119.3L703.7 105.7L717.2 90.5L729.0 77.8L735.0 40.0Z" fill="none" stroke="#403e40" stroke-width="9" opacity=".48" filter="url(#soft)"/></g></g>
<g filter="url(#rough)"><path d="M499.8 398.0C497.4 398.7 494.4 400.0 491.7 402.0C489.0 404.0 486.1 406.4 483.6 410.0C481.2 413.6 479.3 419.2 477.0 423.7C474.7 428.2 472.5 432.9 470.0 437.0C467.5 441.1 464.2 444.4 462.0 448.0C459.8 451.6 458.4 455.1 456.7 458.7C455.0 462.3 453.8 465.9 452.0 469.5C450.2 473.1 447.9 476.4 446.0 480.0C444.1 483.6 442.1 486.9 440.5 491.0C438.9 495.1 437.5 500.2 436.5 504.5C435.5 508.8 434.8 513.3 434.4 517.0C434.0 520.7 434.8 521.4 434.4 526.6C433.9 531.8 432.8 541.7 431.7 548.0C430.6 554.3 428.5 559.3 427.7 564.3C426.9 569.3 426.9 573.4 427.0 578.0C427.1 582.6 426.0 589.7 428.0 592.0C430.0 594.3 437.2 593.0 439.0 592.0C440.8 591.0 438.4 588.8 438.5 586.0C438.6 583.2 439.1 579.5 439.8 575.0C440.5 570.5 441.6 565.3 442.5 559.0C443.4 552.7 444.3 543.6 445.2 537.3C446.1 531.0 446.2 526.4 448.0 521.0C449.8 515.6 453.7 509.1 456.0 505.0C458.3 500.9 460.5 499.7 462.0 496.5C463.5 493.3 463.5 489.3 464.8 485.7C466.1 482.1 468.0 478.6 470.0 475.0C472.0 471.4 474.7 468.1 477.0 464.0C479.3 459.9 481.2 454.6 483.6 450.6C486.1 446.6 488.6 443.0 491.7 439.9C494.8 436.8 499.4 434.1 502.5 431.8C505.6 429.5 508.9 428.7 510.6 426.0C512.3 423.3 512.5 419.1 512.5 415.6C512.5 412.1 511.7 407.7 510.6 404.8C509.5 401.9 507.8 399.1 506.0 398.0C504.2 396.9 502.2 397.3 499.8 398.0Z" fill="#4f4d4e"/></g>
<g filter="url(#rough)"><path d="M305.0 332.0C296.8 332.8 294.1 335.0 287.5 336.5C280.9 338.0 272.4 338.2 265.5 341.0C258.6 343.8 251.8 348.4 246.0 353.0C240.2 357.6 235.3 363.3 230.5 368.5C225.7 373.7 221.1 378.8 217.0 384.0C212.9 389.2 210.0 394.8 206.0 399.5C202.0 404.2 198.2 407.4 193.0 412.5C187.8 417.6 180.2 424.1 175.0 430.0C169.8 435.9 166.4 442.1 162.0 448.0C157.6 453.9 152.2 460.0 148.5 465.5C144.8 471.0 142.6 475.2 140.0 481.0C137.4 486.8 134.6 492.6 133.0 500.0C131.4 507.4 131.6 517.2 130.5 525.5C129.4 533.8 127.4 541.8 126.5 550.0C125.6 558.2 125.3 566.7 125.0 575.0C124.7 583.3 124.6 592.5 124.5 600.0C124.4 607.5 124.1 614.3 124.5 620.0C124.9 625.7 125.7 629.9 127.0 634.0C128.3 638.1 130.3 641.3 132.5 644.5C134.7 647.7 137.2 650.6 140.0 653.0C142.8 655.4 145.7 657.7 149.0 659.0C152.3 660.3 156.6 660.7 160.0 661.0C163.4 661.3 165.8 661.5 169.5 661.0C173.2 660.5 177.9 659.3 182.0 658.0C186.1 656.7 190.2 655.0 194.0 653.0C197.8 651.0 201.5 648.8 205.0 646.0C208.5 643.2 211.0 640.5 215.0 636.5C219.0 632.5 224.2 626.8 229.0 622.0C233.8 617.2 238.7 612.0 243.5 607.5C248.3 603.0 253.2 599.1 258.0 595.0C262.8 590.9 268.3 586.7 272.5 583.0C276.7 579.3 279.6 576.4 283.0 573.0C286.4 569.6 289.3 567.0 293.0 562.5C296.7 558.0 300.9 551.5 305.0 546.0C309.1 540.5 313.7 535.3 317.5 529.5C321.3 523.7 324.6 517.2 328.0 511.0C331.4 504.8 335.0 498.3 338.0 492.5C341.0 486.7 343.2 481.4 346.0 476.0C348.8 470.6 351.7 465.8 354.5 460.0C357.3 454.2 360.2 447.2 363.0 441.0C365.8 434.8 368.8 429.0 371.0 423.0C373.2 417.0 374.8 410.5 376.0 405.0C377.2 399.5 378.2 395.3 378.5 390.0C378.8 384.7 378.4 378.8 378.0 373.0C377.6 367.2 377.3 360.0 376.0 355.0C374.7 350.0 373.5 346.2 370.0 343.0C366.5 339.8 360.5 337.8 355.0 336.0C349.5 334.2 345.3 332.7 337.0 332.0C328.7 331.3 313.2 331.2 305.0 332.0Z" fill="url(#gBud1)"/></g>
<clipPath id="cbl"><path d="M141.0 484.0C144.0 481.8 147.9 489.2 152.0 492.0C156.1 494.8 161.2 497.7 165.5 501.0C169.8 504.3 173.9 507.9 178.0 512.0C182.1 516.1 186.8 520.8 190.0 525.5C193.2 530.2 194.9 535.2 197.0 540.0C199.1 544.8 200.2 549.8 202.5 554.0C204.8 558.2 207.6 562.2 211.0 565.0C214.4 567.8 218.7 569.5 223.0 570.5C227.3 571.5 232.2 570.3 237.0 571.0C241.8 571.7 247.8 573.0 252.0 574.5C256.2 576.0 258.6 578.6 262.0 580.0C265.4 581.4 273.2 580.5 272.5 583.0C271.8 585.5 262.8 590.9 258.0 595.0C253.2 599.1 248.3 603.0 243.5 607.5C238.7 612.0 233.8 617.2 229.0 622.0C224.2 626.8 219.0 632.5 215.0 636.5C211.0 640.5 208.5 643.2 205.0 646.0C201.5 648.8 197.8 651.0 194.0 653.0C190.2 655.0 186.1 656.7 182.0 658.0C177.9 659.3 173.2 660.5 169.5 661.0C165.8 661.5 163.4 661.3 160.0 661.0C156.6 660.7 152.3 660.3 149.0 659.0C145.7 657.7 142.8 655.4 140.0 653.0C137.2 650.6 134.7 647.7 132.5 644.5C130.3 641.3 128.3 638.1 127.0 634.0C125.7 629.9 124.9 625.7 124.5 620.0C124.1 614.3 124.4 607.5 124.5 600.0C124.6 592.5 124.7 583.3 125.0 575.0C125.3 566.7 125.6 558.2 126.5 550.0C127.4 541.8 129.2 533.0 130.5 525.5C131.8 518.0 132.2 511.9 134.0 505.0C135.8 498.1 138.0 486.2 141.0 484.0Z"/></clipPath>
<g filter="url(#rough)"><path d="M141.0 484.0C144.0 481.8 147.9 489.2 152.0 492.0C156.1 494.8 161.2 497.7 165.5 501.0C169.8 504.3 173.9 507.9 178.0 512.0C182.1 516.1 186.8 520.8 190.0 525.5C193.2 530.2 194.9 535.2 197.0 540.0C199.1 544.8 200.2 549.8 202.5 554.0C204.8 558.2 207.6 562.2 211.0 565.0C214.4 567.8 218.7 569.5 223.0 570.5C227.3 571.5 232.2 570.3 237.0 571.0C241.8 571.7 247.8 573.0 252.0 574.5C256.2 576.0 258.6 578.6 262.0 580.0C265.4 581.4 273.2 580.5 272.5 583.0C271.8 585.5 262.8 590.9 258.0 595.0C253.2 599.1 248.3 603.0 243.5 607.5C238.7 612.0 233.8 617.2 229.0 622.0C224.2 626.8 219.0 632.5 215.0 636.5C211.0 640.5 208.5 643.2 205.0 646.0C201.5 648.8 197.8 651.0 194.0 653.0C190.2 655.0 186.1 656.7 182.0 658.0C177.9 659.3 173.2 660.5 169.5 661.0C165.8 661.5 163.4 661.3 160.0 661.0C156.6 660.7 152.3 660.3 149.0 659.0C145.7 657.7 142.8 655.4 140.0 653.0C137.2 650.6 134.7 647.7 132.5 644.5C130.3 641.3 128.3 638.1 127.0 634.0C125.7 629.9 124.9 625.7 124.5 620.0C124.1 614.3 124.4 607.5 124.5 600.0C124.6 592.5 124.7 583.3 125.0 575.0C125.3 566.7 125.6 558.2 126.5 550.0C127.4 541.8 129.2 533.0 130.5 525.5C131.8 518.0 132.2 511.9 134.0 505.0C135.8 498.1 138.0 486.2 141.0 484.0Z" fill="url(#gBudL)"/><g clip-path="url(#cbl)"><path d="M141.0 484.0C144.0 481.8 147.9 489.2 152.0 492.0C156.1 494.8 161.2 497.7 165.5 501.0C169.8 504.3 173.9 507.9 178.0 512.0C182.1 516.1 186.8 520.8 190.0 525.5C193.2 530.2 194.9 535.2 197.0 540.0C199.1 544.8 200.2 549.8 202.5 554.0C204.8 558.2 207.6 562.2 211.0 565.0C214.4 567.8 218.7 569.5 223.0 570.5C227.3 571.5 232.2 570.3 237.0 571.0C241.8 571.7 247.8 573.0 252.0 574.5C256.2 576.0 258.6 578.6 262.0 580.0C265.4 581.4 273.2 580.5 272.5 583.0C271.8 585.5 262.8 590.9 258.0 595.0C253.2 599.1 248.3 603.0 243.5 607.5C238.7 612.0 233.8 617.2 229.0 622.0C224.2 626.8 219.0 632.5 215.0 636.5C211.0 640.5 208.5 643.2 205.0 646.0C201.5 648.8 197.8 651.0 194.0 653.0C190.2 655.0 186.1 656.7 182.0 658.0C177.9 659.3 173.2 660.5 169.5 661.0C165.8 661.5 163.4 661.3 160.0 661.0C156.6 660.7 152.3 660.3 149.0 659.0C145.7 657.7 142.8 655.4 140.0 653.0C137.2 650.6 134.7 647.7 132.5 644.5C130.3 641.3 128.3 638.1 127.0 634.0C125.7 629.9 124.9 625.7 124.5 620.0C124.1 614.3 124.4 607.5 124.5 600.0C124.6 592.5 124.7 583.3 125.0 575.0C125.3 566.7 125.6 558.2 126.5 550.0C127.4 541.8 129.2 533.0 130.5 525.5C131.8 518.0 132.2 511.9 134.0 505.0C135.8 498.1 138.0 486.2 141.0 484.0Z" fill="none" stroke="#b283de" stroke-width="5" opacity=".7" filter="url(#soft2)"/></g></g>
<path d="M305.0 332.0C296.8 332.8 294.1 335.0 287.5 336.5C280.9 338.0 272.4 338.2 265.5 341.0C258.6 343.8 251.8 348.4 246.0 353.0C240.2 357.6 235.3 363.3 230.5 368.5C225.7 373.7 221.1 378.8 217.0 384.0C212.9 389.2 210.0 394.8 206.0 399.5C202.0 404.2 198.2 407.4 193.0 412.5C187.8 417.6 180.2 424.1 175.0 430.0C169.8 435.9 166.4 442.1 162.0 448.0C157.6 453.9 152.2 460.0 148.5 465.5C144.8 471.0 142.6 475.2 140.0 481.0C137.4 486.8 134.6 492.6 133.0 500.0C131.4 507.4 131.6 517.2 130.5 525.5C129.4 533.8 127.4 541.8 126.5 550.0C125.6 558.2 125.3 566.7 125.0 575.0C124.7 583.3 124.6 592.5 124.5 600.0C124.4 607.5 124.1 614.3 124.5 620.0C124.9 625.7 125.7 629.9 127.0 634.0C128.3 638.1 130.3 641.3 132.5 644.5C134.7 647.7 137.2 650.6 140.0 653.0C142.8 655.4 145.7 657.7 149.0 659.0C152.3 660.3 156.6 660.7 160.0 661.0C163.4 661.3 165.8 661.5 169.5 661.0C173.2 660.5 177.9 659.3 182.0 658.0C186.1 656.7 190.2 655.0 194.0 653.0C197.8 651.0 201.5 648.8 205.0 646.0C208.5 643.2 211.0 640.5 215.0 636.5C219.0 632.5 224.2 626.8 229.0 622.0C233.8 617.2 238.7 612.0 243.5 607.5C248.3 603.0 253.2 599.1 258.0 595.0C262.8 590.9 268.3 586.7 272.5 583.0C276.7 579.3 279.6 576.4 283.0 573.0C286.4 569.6 289.3 567.0 293.0 562.5C296.7 558.0 300.9 551.5 305.0 546.0C309.1 540.5 313.7 535.3 317.5 529.5C321.3 523.7 324.6 517.2 328.0 511.0C331.4 504.8 335.0 498.3 338.0 492.5C341.0 486.7 343.2 481.4 346.0 476.0C348.8 470.6 351.7 465.8 354.5 460.0C357.3 454.2 360.2 447.2 363.0 441.0C365.8 434.8 368.8 429.0 371.0 423.0C373.2 417.0 374.8 410.5 376.0 405.0C377.2 399.5 378.2 395.3 378.5 390.0C378.8 384.7 378.4 378.8 378.0 373.0C377.6 367.2 377.3 360.0 376.0 355.0C374.7 350.0 373.5 346.2 370.0 343.0C366.5 339.8 360.5 337.8 355.0 336.0C349.5 334.2 345.3 332.7 337.0 332.0C328.7 331.3 313.2 331.2 305.0 332.0Z" fill="#fff" filter="url(#grain)" opacity=".16"/>
<path d="M305.0 332.0C296.8 332.8 294.1 335.0 287.5 336.5C280.9 338.0 272.4 338.2 265.5 341.0C258.6 343.8 251.8 348.4 246.0 353.0C240.2 357.6 235.3 363.3 230.5 368.5C225.7 373.7 221.1 378.8 217.0 384.0C212.9 389.2 210.0 394.8 206.0 399.5C202.0 404.2 198.2 407.4 193.0 412.5C187.8 417.6 180.2 424.1 175.0 430.0C169.8 435.9 166.4 442.1 162.0 448.0C157.6 453.9 152.2 460.0 148.5 465.5C144.8 471.0 142.6 475.2 140.0 481.0C137.4 486.8 134.6 492.6 133.0 500.0C131.4 507.4 131.6 517.2 130.5 525.5C129.4 533.8 127.4 541.8 126.5 550.0C125.6 558.2 125.3 566.7 125.0 575.0C124.7 583.3 124.6 592.5 124.5 600.0C124.4 607.5 124.1 614.3 124.5 620.0C124.9 625.7 125.7 629.9 127.0 634.0C128.3 638.1 130.3 641.3 132.5 644.5C134.7 647.7 137.2 650.6 140.0 653.0C142.8 655.4 145.7 657.7 149.0 659.0C152.3 660.3 156.6 660.7 160.0 661.0C163.4 661.3 165.8 661.5 169.5 661.0C173.2 660.5 177.9 659.3 182.0 658.0C186.1 656.7 190.2 655.0 194.0 653.0C197.8 651.0 201.5 648.8 205.0 646.0C208.5 643.2 211.0 640.5 215.0 636.5C219.0 632.5 224.2 626.8 229.0 622.0C233.8 617.2 238.7 612.0 243.5 607.5C248.3 603.0 253.2 599.1 258.0 595.0C262.8 590.9 268.3 586.7 272.5 583.0C276.7 579.3 279.6 576.4 283.0 573.0C286.4 569.6 289.3 567.0 293.0 562.5C296.7 558.0 300.9 551.5 305.0 546.0C309.1 540.5 313.7 535.3 317.5 529.5C321.3 523.7 324.6 517.2 328.0 511.0C331.4 504.8 335.0 498.3 338.0 492.5C341.0 486.7 343.2 481.4 346.0 476.0C348.8 470.6 351.7 465.8 354.5 460.0C357.3 454.2 360.2 447.2 363.0 441.0C365.8 434.8 368.8 429.0 371.0 423.0C373.2 417.0 374.8 410.5 376.0 405.0C377.2 399.5 378.2 395.3 378.5 390.0C378.8 384.7 378.4 378.8 378.0 373.0C377.6 367.2 377.3 360.0 376.0 355.0C374.7 350.0 373.5 346.2 370.0 343.0C366.5 339.8 360.5 337.8 355.0 336.0C349.5 334.2 345.3 332.7 337.0 332.0C328.7 331.3 313.2 331.2 305.0 332.0Z" fill="#5a1a8a" filter="url(#graind)" opacity=".14"/>
<clipPath id="cb1"><path d="M305.0 332.0C296.8 332.8 294.1 335.0 287.5 336.5C280.9 338.0 272.4 338.2 265.5 341.0C258.6 343.8 251.8 348.4 246.0 353.0C240.2 357.6 235.3 363.3 230.5 368.5C225.7 373.7 221.1 378.8 217.0 384.0C212.9 389.2 210.0 394.8 206.0 399.5C202.0 404.2 198.2 407.4 193.0 412.5C187.8 417.6 180.2 424.1 175.0 430.0C169.8 435.9 166.4 442.1 162.0 448.0C157.6 453.9 152.2 460.0 148.5 465.5C144.8 471.0 142.6 475.2 140.0 481.0C137.4 486.8 134.6 492.6 133.0 500.0C131.4 507.4 131.6 517.2 130.5 525.5C129.4 533.8 127.4 541.8 126.5 550.0C125.6 558.2 125.3 566.7 125.0 575.0C124.7 583.3 124.6 592.5 124.5 600.0C124.4 607.5 124.1 614.3 124.5 620.0C124.9 625.7 125.7 629.9 127.0 634.0C128.3 638.1 130.3 641.3 132.5 644.5C134.7 647.7 137.2 650.6 140.0 653.0C142.8 655.4 145.7 657.7 149.0 659.0C152.3 660.3 156.6 660.7 160.0 661.0C163.4 661.3 165.8 661.5 169.5 661.0C173.2 660.5 177.9 659.3 182.0 658.0C186.1 656.7 190.2 655.0 194.0 653.0C197.8 651.0 201.5 648.8 205.0 646.0C208.5 643.2 211.0 640.5 215.0 636.5C219.0 632.5 224.2 626.8 229.0 622.0C233.8 617.2 238.7 612.0 243.5 607.5C248.3 603.0 253.2 599.1 258.0 595.0C262.8 590.9 268.3 586.7 272.5 583.0C276.7 579.3 279.6 576.4 283.0 573.0C286.4 569.6 289.3 567.0 293.0 562.5C296.7 558.0 300.9 551.5 305.0 546.0C309.1 540.5 313.7 535.3 317.5 529.5C321.3 523.7 324.6 517.2 328.0 511.0C331.4 504.8 335.0 498.3 338.0 492.5C341.0 486.7 343.2 481.4 346.0 476.0C348.8 470.6 351.7 465.8 354.5 460.0C357.3 454.2 360.2 447.2 363.0 441.0C365.8 434.8 368.8 429.0 371.0 423.0C373.2 417.0 374.8 410.5 376.0 405.0C377.2 399.5 378.2 395.3 378.5 390.0C378.8 384.7 378.4 378.8 378.0 373.0C377.6 367.2 377.3 360.0 376.0 355.0C374.7 350.0 373.5 346.2 370.0 343.0C366.5 339.8 360.5 337.8 355.0 336.0C349.5 334.2 345.3 332.7 337.0 332.0C328.7 331.3 313.2 331.2 305.0 332.0Z"/></clipPath>
<g clip-path="url(#cb1)"><g filter="url(#blot)"><path d="M310.0 333.0C314.8 330.1 333.2 330.2 340.5 331.0C347.8 331.8 348.5 334.6 354.0 337.5C359.5 340.4 369.8 344.8 373.5 348.5C377.2 352.2 378.2 356.6 376.0 359.5C373.8 362.4 364.9 365.6 360.5 366.0C356.1 366.4 354.2 360.2 349.5 362.0C344.8 363.8 337.9 371.8 332.0 377.0C326.1 382.2 320.2 388.3 314.0 393.0C307.8 397.7 297.4 404.3 294.5 405.0C291.6 405.7 294.3 400.8 296.5 397.0C298.7 393.2 303.8 387.5 307.5 382.0C311.2 376.5 317.8 369.6 318.5 364.0C319.2 358.4 313.4 353.7 312.0 348.5C310.6 343.3 305.2 335.9 310.0 333.0Z" fill="#4b3f9c" opacity=".92"/></g></g>
<g filter="url(#rough)"><path d="M283.0 730.0C252.5 727.5 284.3 721.7 286.2 714.7C288.1 707.8 291.2 697.6 294.3 688.3C297.4 678.9 301.0 668.0 305.0 658.6C309.0 649.2 313.6 639.8 318.5 631.7C323.4 623.6 328.8 616.3 334.7 610.0C340.6 603.7 346.4 598.7 353.6 594.0C360.8 589.3 370.2 584.7 377.8 581.8C385.4 578.9 392.2 577.1 399.4 576.4C406.6 575.7 414.7 576.7 421.0 577.8C427.3 578.9 432.8 580.8 437.0 583.0C441.2 585.2 444.5 586.9 446.5 591.0C448.5 595.1 448.3 601.6 449.0 607.4C449.7 613.2 449.7 618.4 450.6 626.0C451.5 633.6 453.2 644.4 454.6 653.0C456.0 661.6 457.1 669.4 458.7 677.5C460.3 685.6 462.6 695.6 464.0 701.8C465.4 708.0 466.0 710.0 466.8 714.7C467.6 719.4 499.6 727.5 469.0 730.0C438.4 732.5 313.5 732.5 283.0 730.0Z" fill="#a153ca"/></g>
<path d="M283.0 730.0C252.5 727.5 284.3 721.7 286.2 714.7C288.1 707.8 291.2 697.6 294.3 688.3C297.4 678.9 301.0 668.0 305.0 658.6C309.0 649.2 313.6 639.8 318.5 631.7C323.4 623.6 328.8 616.3 334.7 610.0C340.6 603.7 346.4 598.7 353.6 594.0C360.8 589.3 370.2 584.7 377.8 581.8C385.4 578.9 392.2 577.1 399.4 576.4C406.6 575.7 414.7 576.7 421.0 577.8C427.3 578.9 432.8 580.8 437.0 583.0C441.2 585.2 444.5 586.9 446.5 591.0C448.5 595.1 448.3 601.6 449.0 607.4C449.7 613.2 449.7 618.4 450.6 626.0C451.5 633.6 453.2 644.4 454.6 653.0C456.0 661.6 457.1 669.4 458.7 677.5C460.3 685.6 462.6 695.6 464.0 701.8C465.4 708.0 466.0 710.0 466.8 714.7C467.6 719.4 499.6 727.5 469.0 730.0C438.4 732.5 313.5 732.5 283.0 730.0Z" fill="#fff" filter="url(#grain)" opacity=".16"/>
<path d="M283.0 730.0C252.5 727.5 284.3 721.7 286.2 714.7C288.1 707.8 291.2 697.6 294.3 688.3C297.4 678.9 301.0 668.0 305.0 658.6C309.0 649.2 313.6 639.8 318.5 631.7C323.4 623.6 328.8 616.3 334.7 610.0C340.6 603.7 346.4 598.7 353.6 594.0C360.8 589.3 370.2 584.7 377.8 581.8C385.4 578.9 392.2 577.1 399.4 576.4C406.6 575.7 414.7 576.7 421.0 577.8C427.3 578.9 432.8 580.8 437.0 583.0C441.2 585.2 444.5 586.9 446.5 591.0C448.5 595.1 448.3 601.6 449.0 607.4C449.7 613.2 449.7 618.4 450.6 626.0C451.5 633.6 453.2 644.4 454.6 653.0C456.0 661.6 457.1 669.4 458.7 677.5C460.3 685.6 462.6 695.6 464.0 701.8C465.4 708.0 466.0 710.0 466.8 714.7C467.6 719.4 499.6 727.5 469.0 730.0C438.4 732.5 313.5 732.5 283.0 730.0Z" fill="#5a1a8a" filter="url(#graind)" opacity=".14"/>
<clipPath id="cb2"><path d="M283.0 730.0C252.5 727.5 284.3 721.7 286.2 714.7C288.1 707.8 291.2 697.6 294.3 688.3C297.4 678.9 301.0 668.0 305.0 658.6C309.0 649.2 313.6 639.8 318.5 631.7C323.4 623.6 328.8 616.3 334.7 610.0C340.6 603.7 346.4 598.7 353.6 594.0C360.8 589.3 370.2 584.7 377.8 581.8C385.4 578.9 392.2 577.1 399.4 576.4C406.6 575.7 414.7 576.7 421.0 577.8C427.3 578.9 432.8 580.8 437.0 583.0C441.2 585.2 444.5 586.9 446.5 591.0C448.5 595.1 448.3 601.6 449.0 607.4C449.7 613.2 449.7 618.4 450.6 626.0C451.5 633.6 453.2 644.4 454.6 653.0C456.0 661.6 457.1 669.4 458.7 677.5C460.3 685.6 462.6 695.6 464.0 701.8C465.4 708.0 466.0 710.0 466.8 714.7C467.6 719.4 499.6 727.5 469.0 730.0C438.4 732.5 313.5 732.5 283.0 730.0Z"/></clipPath>
<g clip-path="url(#cb2)"><path d="M398.0 590.0C401.0 586.7 405.0 585.3 410.0 584.0C415.0 582.7 422.7 581.3 428.0 582.0C433.3 582.7 439.0 585.0 442.0 588.0C445.0 591.0 445.7 595.5 446.0 600.0C446.3 604.5 443.8 609.2 444.0 615.0C444.2 620.8 447.3 629.2 447.0 635.0C446.7 640.8 443.8 650.8 442.0 650.0C440.2 649.2 438.3 635.8 436.0 630.0C433.7 624.2 430.7 615.8 428.0 615.0C425.3 614.2 422.3 625.5 420.0 625.0C417.7 624.5 416.7 615.2 414.0 612.0C411.3 608.8 407.0 606.0 404.0 606.0C401.0 606.0 398.7 610.0 396.0 612.0C393.3 614.0 388.7 619.3 388.0 618.0C387.3 616.7 390.3 608.7 392.0 604.0C393.7 599.3 395.0 593.3 398.0 590.0Z" fill="#000" filter="url(#specks)" opacity=".9"/><g filter="url(#blot)"><path d="M420.0 582.0C422.7 579.8 428.5 580.5 432.0 581.0C435.5 581.5 438.7 582.8 441.0 585.0C443.3 587.2 445.5 590.5 446.0 594.0C446.5 597.5 445.3 603.0 444.0 606.0C442.7 609.0 440.0 612.7 438.0 612.0C436.0 611.3 434.3 604.0 432.0 602.0C429.7 600.0 426.7 601.3 424.0 600.0C421.3 598.7 416.7 597.0 416.0 594.0C415.3 591.0 417.3 584.2 420.0 582.0Z" fill="#4a4676" opacity=".9"/></g></g>
<g filter="url(#rough)"><path d="M669.5 395.0C670.8 393.2 677.8 390.5 682.0 389.0C686.2 387.5 689.5 387.0 695.0 386.0C700.5 385.0 708.0 383.7 715.0 383.0C722.0 382.3 729.8 382.0 737.0 382.0C744.2 382.0 751.7 382.3 758.0 383.0C764.3 383.7 770.3 384.5 775.0 386.0C779.7 387.5 783.5 389.5 786.0 392.0C788.5 394.5 789.0 397.7 790.0 401.0C791.0 404.3 792.0 408.5 792.0 412.0C792.0 415.5 792.0 418.7 790.0 422.0C788.0 425.3 783.8 429.0 780.0 432.0C776.2 435.0 767.8 433.7 767.0 440.0C766.2 446.3 769.5 456.7 775.0 470.0C780.5 483.3 789.2 505.0 800.0 520.0C810.8 535.0 830.3 548.3 840.0 560.0C849.7 571.7 855.5 583.8 858.0 590.0C860.5 596.2 858.2 593.8 855.0 597.0C851.8 600.2 843.7 605.3 838.7 609.0C833.7 612.7 829.5 615.8 825.0 619.0C820.5 622.2 816.2 625.2 811.7 628.0C807.2 630.8 802.5 633.6 798.0 636.0C793.5 638.4 789.5 640.7 784.8 642.5C780.1 644.3 774.4 646.0 770.0 647.0C765.6 648.0 762.0 649.0 758.5 648.5C755.0 648.0 751.8 645.8 749.0 644.0C746.2 642.2 744.2 640.8 741.5 638.0C738.8 635.2 735.8 630.5 733.0 627.0C730.2 623.5 727.7 620.2 724.5 617.0C721.3 613.8 716.8 610.8 714.0 608.0C711.2 605.2 709.2 603.5 707.5 600.0C705.8 596.5 705.6 591.2 703.5 587.0C701.4 582.8 698.6 577.2 695.0 574.5C691.4 571.8 686.2 572.1 682.0 571.0C677.8 569.9 673.5 569.3 669.5 568.0C665.5 566.7 661.5 564.8 658.0 563.0C654.5 561.2 650.8 559.8 648.5 557.5C646.2 555.2 644.8 551.8 644.0 549.0C643.2 546.2 642.5 543.7 644.0 540.5C645.5 537.3 649.5 533.5 653.0 530.0C656.5 526.5 661.7 523.2 665.0 519.5C668.3 515.8 670.2 511.6 673.0 508.0C675.8 504.4 678.8 500.8 682.0 498.0C685.2 495.2 689.2 493.1 692.0 491.0C694.8 488.9 697.3 487.8 699.0 485.5C700.7 483.2 701.2 479.8 702.0 477.0C702.8 474.2 703.5 472.7 703.5 469.0C703.5 465.3 702.8 459.2 702.0 455.0C701.2 450.8 700.8 446.3 699.0 443.5C697.2 440.7 693.1 439.8 691.0 438.0C688.9 436.2 686.5 435.2 686.5 433.0C686.5 430.8 689.6 427.5 691.0 425.0C692.4 422.5 695.3 420.3 695.0 418.0C694.7 415.7 691.2 413.2 689.0 411.0C686.8 408.8 684.5 406.8 682.0 405.0C679.5 403.2 676.1 401.7 674.0 400.0C671.9 398.3 668.2 396.8 669.5 395.0Z" fill="#eadcf8"/></g>
<g filter="url(#rough)"><path d="M970.0 86.0C969.0 -19.7 970.0 87.0 964.0 88.0C958.0 89.0 944.0 90.3 934.0 92.0C924.0 93.7 914.0 95.7 904.0 98.0C894.0 100.3 884.1 102.9 874.0 106.0C863.9 109.1 853.7 113.3 843.5 116.5C833.3 119.7 823.1 122.0 813.0 125.0C802.9 128.0 791.5 131.5 783.0 134.5C774.5 137.5 768.8 139.9 762.0 143.0C755.2 146.1 748.7 149.5 742.5 153.0C736.3 156.5 730.4 160.3 725.0 164.0C719.6 167.7 714.3 171.2 710.0 175.0C705.7 178.8 702.3 183.0 699.0 187.0C695.7 191.0 692.3 194.7 690.0 199.0C687.7 203.3 686.3 208.2 685.0 213.0C683.7 217.8 682.5 222.7 682.0 227.5C681.5 232.3 681.7 237.2 682.0 242.0C682.3 246.8 682.5 251.5 684.0 256.0C685.5 260.5 688.0 265.0 691.0 269.0C694.0 273.0 697.7 276.3 702.0 280.0C706.3 283.7 711.6 287.6 717.0 291.0C722.4 294.4 728.2 297.7 734.5 300.5C740.8 303.3 748.2 305.7 755.0 308.0C761.8 310.3 768.3 312.5 775.0 314.5C781.7 316.5 788.2 318.3 795.0 320.0C801.8 321.7 809.3 323.2 815.5 324.5C821.7 325.8 826.7 326.6 832.0 328.0C837.3 329.4 843.2 331.8 847.5 333.0C851.8 334.2 855.2 334.0 858.0 335.0C860.8 336.0 862.5 337.2 864.0 339.0C865.5 340.8 866.5 343.7 867.0 346.0C867.5 348.3 867.3 350.2 867.0 353.0C866.7 355.8 865.8 359.7 865.0 363.0C864.2 366.3 862.8 370.2 862.0 373.0C861.2 375.8 860.8 377.8 860.0 380.0C859.2 382.2 858.8 383.7 857.5 386.0C856.2 388.3 853.8 391.5 852.0 394.0C850.2 396.5 849.2 398.3 847.0 401.0C844.8 403.7 841.8 407.2 839.0 410.0C836.2 412.8 833.0 415.5 830.5 418.0C828.0 420.5 826.2 422.9 824.0 425.0C821.8 427.1 820.0 428.3 817.5 430.5C815.0 432.7 811.8 435.8 809.0 438.0C806.2 440.2 803.7 442.0 800.5 443.5C797.3 445.0 793.5 445.9 790.0 447.0C786.5 448.1 782.8 449.3 779.5 450.0C776.2 450.7 772.8 450.7 770.0 451.0C767.2 451.3 763.5 452.8 762.5 452.0C761.5 451.2 763.2 448.2 764.0 446.0C764.8 443.8 767.3 440.7 767.0 439.0C766.7 437.3 763.8 436.3 762.0 436.0C760.2 435.7 758.7 436.0 756.0 437.0C753.3 438.0 749.2 440.2 746.0 442.0C742.8 443.8 739.7 445.2 737.0 447.5C734.3 449.8 732.1 453.2 730.0 456.0C727.9 458.8 726.2 461.3 724.5 464.5C722.8 467.7 721.1 471.5 720.0 475.0C718.9 478.5 718.5 481.3 718.0 485.5C717.5 489.7 717.0 495.1 717.0 500.0C717.0 504.9 717.2 510.5 718.0 515.0C718.8 519.5 720.2 523.4 722.0 527.0C723.8 530.6 727.0 533.2 729.0 536.5C731.0 539.8 732.2 543.5 734.0 547.0C735.8 550.5 737.8 554.3 739.5 557.5C741.2 560.7 742.2 563.2 744.0 566.0C745.8 568.8 747.3 572.2 750.0 574.5C752.7 576.8 756.5 578.6 760.0 580.0C763.5 581.4 767.0 582.2 771.0 583.0C775.0 583.8 779.8 583.8 784.0 584.5C788.2 585.2 792.7 585.2 796.5 587.0C800.3 588.8 803.5 592.2 807.0 595.0C810.5 597.8 814.0 601.8 817.5 604.0C821.0 606.2 824.5 607.5 828.0 608.5C831.5 609.5 834.8 610.8 838.5 610.0C842.2 609.2 846.4 606.4 850.0 604.0C853.6 601.6 857.0 598.3 860.0 595.5C863.0 592.7 865.2 589.8 868.0 587.0C870.8 584.2 874.2 581.2 877.0 578.5C879.8 575.8 882.2 573.4 885.0 571.0C887.8 568.6 891.2 564.9 893.5 564.0C895.8 563.1 898.2 563.8 899.0 565.5C899.8 567.2 898.5 571.1 898.0 574.0C897.5 576.9 897.2 579.3 896.0 583.0C894.8 586.7 892.4 591.8 891.0 596.0C889.6 600.2 887.5 604.0 887.5 608.0C887.5 612.0 889.2 616.4 891.0 620.0C892.8 623.6 895.2 626.5 898.0 629.5C900.8 632.5 904.5 635.2 908.0 638.0C911.5 640.8 915.7 643.7 919.0 646.0C922.3 648.3 925.2 649.8 928.0 652.0C930.8 654.2 933.8 656.8 936.0 659.0C938.2 661.2 939.9 662.8 941.0 665.0C942.1 667.2 942.3 669.5 942.5 672.0C942.7 674.5 942.4 677.2 942.0 680.0C941.6 682.8 942.0 686.2 940.0 688.5C938.0 690.8 933.5 692.6 930.0 694.0C926.5 695.4 923.0 696.0 919.0 697.0C915.0 698.0 910.2 698.9 906.0 700.0C901.8 701.1 897.0 702.2 893.5 703.5C890.0 704.8 885.1 706.2 885.0 707.5C884.9 708.8 890.2 709.9 893.0 711.0C895.8 712.1 899.2 712.2 902.0 714.0C904.8 715.8 898.7 720.7 910.0 722.0C921.3 723.3 960.0 828.0 970.0 722.0C980.0 616.0 971.0 191.7 970.0 86.0Z" fill="url(#gPetal)"/></g>
<g filter="url(#soft)"><g filter="url(#blot)"><path d="M970.0 500.0C966.7 469.2 955.3 502.5 950.0 505.0C944.7 507.5 941.0 510.8 938.0 515.0C935.0 519.2 934.2 525.0 932.0 530.0C929.8 535.0 927.8 540.8 925.0 545.0C922.2 549.2 918.3 552.2 915.0 555.0C911.7 557.8 907.7 560.2 905.0 562.0C902.3 563.8 900.3 562.5 899.0 566.0C897.7 569.5 898.7 576.2 897.0 583.0C895.3 589.8 889.7 600.5 889.0 607.0C888.3 613.5 889.8 616.8 893.0 622.0C896.2 627.2 902.2 633.0 908.0 638.0C913.8 643.0 922.5 647.5 928.0 652.0C933.5 656.5 938.7 660.3 941.0 665.0C943.3 669.7 942.3 675.8 942.0 680.0C941.7 684.2 934.3 688.3 939.0 690.0C943.7 691.7 964.8 721.7 970.0 690.0C975.2 658.3 973.3 530.8 970.0 500.0Z" fill="#bf9ce6" opacity=".5"/></g></g>
<g filter="url(#blot)"><path d="M970.0 515.0C967.5 495.0 959.2 515.8 955.0 520.0C950.8 524.2 947.5 531.7 945.0 540.0C942.5 548.3 941.7 560.0 940.0 570.0C938.3 580.0 934.2 590.0 935.0 600.0C935.8 610.0 941.7 623.3 945.0 630.0C948.3 636.7 950.8 638.3 955.0 640.0C959.2 641.7 967.5 660.8 970.0 640.0C972.5 619.2 972.5 535.0 970.0 515.0Z" fill="#ac84d8" opacity=".5"/></g>
<g filter="url(#soft2)"><path d="M975.0 490.0C970.8 452.5 957.5 490.0 950.0 495.0C942.5 500.0 935.8 511.7 930.0 520.0C924.2 528.3 919.7 537.8 915.0 545.0C910.3 552.2 905.0 556.7 902.0 563.0C899.0 569.3 899.2 575.7 897.0 583.0C894.8 590.3 889.7 600.5 889.0 607.0C888.3 613.5 889.8 616.8 893.0 622.0C896.2 627.2 902.2 633.0 908.0 638.0C913.8 643.0 922.5 647.5 928.0 652.0C933.5 656.5 938.7 660.3 941.0 665.0C943.3 669.7 942.3 675.8 942.0 680.0C941.7 684.2 943.5 687.0 939.0 690.0C934.5 693.0 923.2 695.3 915.0 698.0C906.8 700.7 892.5 703.3 890.0 706.0C887.5 708.7 885.8 711.7 900.0 714.0C914.2 716.3 962.5 757.3 975.0 720.0C987.5 682.7 979.2 527.5 975.0 490.0Z" fill="#000" filter="url(#mottle)" opacity=".65"/></g>
<g filter="url(#soft2)"><path d="M780.0 560.0C784.7 558.5 791.7 570.0 800.0 575.0C808.3 580.0 820.0 588.3 830.0 590.0C840.0 591.7 851.7 588.3 860.0 585.0C868.3 581.7 878.7 569.7 880.0 570.0C881.3 570.3 873.0 581.3 868.0 587.0C863.0 592.7 855.0 600.2 850.0 604.0C845.0 607.8 843.3 610.0 838.0 610.0C832.7 610.0 824.8 607.7 818.0 604.0C811.2 600.3 804.7 591.3 797.0 588.0C789.3 584.7 774.8 588.7 772.0 584.0C769.2 579.3 775.3 561.5 780.0 560.0Z" fill="#000" filter="url(#mottle)" opacity=".8"/></g>
<path d="M721.0 470.0C720.5 475.0 718.2 491.7 718.0 500.0C717.8 508.3 718.0 513.3 720.0 520.0C722.0 526.7 726.7 533.3 730.0 540.0C733.3 546.7 736.3 554.0 740.0 560.0C743.7 566.0 746.7 572.0 752.0 576.0C757.3 580.0 764.5 582.0 772.0 584.0C779.5 586.0 789.3 584.7 797.0 588.0C804.7 591.3 811.2 600.3 818.0 604.0C824.8 607.7 831.3 611.2 838.0 610.0C844.7 608.8 854.7 599.2 858.0 597.0" fill="none" stroke="#ab84da" stroke-width="8" stroke-linecap="round" opacity=".75" filter="url(#blot)"/>
<path d="M721.0 470.0C720.5 475.0 718.2 491.7 718.0 500.0C717.8 508.3 718.0 513.3 720.0 520.0C722.0 526.7 726.7 533.3 730.0 540.0C733.3 546.7 736.3 554.0 740.0 560.0C743.7 566.0 746.7 572.0 752.0 576.0C757.3 580.0 764.5 582.0 772.0 584.0C779.5 586.0 789.3 584.7 797.0 588.0C804.7 591.3 811.2 600.3 818.0 604.0C824.8 607.7 831.3 611.2 838.0 610.0C844.7 608.8 854.7 599.2 858.0 597.0" fill="none" stroke="#b893e2" stroke-width="16" stroke-linecap="round" opacity=".35" filter="url(#soft)" transform="translate(6 -4)"/>
<g filter="url(#rough)"><path d="M964.0 88.0C954.0 89.7 924.1 93.2 904.0 98.0C883.9 102.8 863.7 110.4 843.5 116.5C823.3 122.6 799.8 128.4 783.0 134.5C766.2 140.6 754.7 146.2 742.5 153.0C730.3 159.8 718.8 167.3 710.0 175.0C701.2 182.7 694.7 190.2 690.0 199.0C685.3 207.8 683.0 218.0 682.0 227.5C681.0 237.0 680.7 247.2 684.0 256.0C687.3 264.8 693.6 272.6 702.0 280.0C710.4 287.4 722.3 294.8 734.5 300.5C746.7 306.2 761.5 310.5 775.0 314.5C788.5 318.5 803.4 321.4 815.5 324.5C827.6 327.6 839.4 330.6 847.5 333.0C855.6 335.4 860.8 335.7 864.0 339.0C867.2 342.3 867.3 347.3 867.0 353.0C866.7 358.7 862.8 369.7 862.0 373.0" fill="none" stroke="#b38de0" stroke-width="2.2" opacity=".85"/></g>
<clipPath id="cpt"><path d="M970.0 86.0C969.0 -19.7 970.0 87.0 964.0 88.0C958.0 89.0 944.0 90.3 934.0 92.0C924.0 93.7 914.0 95.7 904.0 98.0C894.0 100.3 884.1 102.9 874.0 106.0C863.9 109.1 853.7 113.3 843.5 116.5C833.3 119.7 823.1 122.0 813.0 125.0C802.9 128.0 791.5 131.5 783.0 134.5C774.5 137.5 768.8 139.9 762.0 143.0C755.2 146.1 748.7 149.5 742.5 153.0C736.3 156.5 730.4 160.3 725.0 164.0C719.6 167.7 714.3 171.2 710.0 175.0C705.7 178.8 702.3 183.0 699.0 187.0C695.7 191.0 692.3 194.7 690.0 199.0C687.7 203.3 686.3 208.2 685.0 213.0C683.7 217.8 682.5 222.7 682.0 227.5C681.5 232.3 681.7 237.2 682.0 242.0C682.3 246.8 682.5 251.5 684.0 256.0C685.5 260.5 688.0 265.0 691.0 269.0C694.0 273.0 697.7 276.3 702.0 280.0C706.3 283.7 711.6 287.6 717.0 291.0C722.4 294.4 728.2 297.7 734.5 300.5C740.8 303.3 748.2 305.7 755.0 308.0C761.8 310.3 768.3 312.5 775.0 314.5C781.7 316.5 788.2 318.3 795.0 320.0C801.8 321.7 809.3 323.2 815.5 324.5C821.7 325.8 826.7 326.6 832.0 328.0C837.3 329.4 843.2 331.8 847.5 333.0C851.8 334.2 855.2 334.0 858.0 335.0C860.8 336.0 862.5 337.2 864.0 339.0C865.5 340.8 866.5 343.7 867.0 346.0C867.5 348.3 867.3 350.2 867.0 353.0C866.7 355.8 865.8 359.7 865.0 363.0C864.2 366.3 862.8 370.2 862.0 373.0C861.2 375.8 860.8 377.8 860.0 380.0C859.2 382.2 858.8 383.7 857.5 386.0C856.2 388.3 853.8 391.5 852.0 394.0C850.2 396.5 849.2 398.3 847.0 401.0C844.8 403.7 841.8 407.2 839.0 410.0C836.2 412.8 833.0 415.5 830.5 418.0C828.0 420.5 826.2 422.9 824.0 425.0C821.8 427.1 820.0 428.3 817.5 430.5C815.0 432.7 811.8 435.8 809.0 438.0C806.2 440.2 803.7 442.0 800.5 443.5C797.3 445.0 793.5 445.9 790.0 447.0C786.5 448.1 782.8 449.3 779.5 450.0C776.2 450.7 772.8 450.7 770.0 451.0C767.2 451.3 763.5 452.8 762.5 452.0C761.5 451.2 763.2 448.2 764.0 446.0C764.8 443.8 767.3 440.7 767.0 439.0C766.7 437.3 763.8 436.3 762.0 436.0C760.2 435.7 758.7 436.0 756.0 437.0C753.3 438.0 749.2 440.2 746.0 442.0C742.8 443.8 739.7 445.2 737.0 447.5C734.3 449.8 732.1 453.2 730.0 456.0C727.9 458.8 726.2 461.3 724.5 464.5C722.8 467.7 721.1 471.5 720.0 475.0C718.9 478.5 718.5 481.3 718.0 485.5C717.5 489.7 717.0 495.1 717.0 500.0C717.0 504.9 717.2 510.5 718.0 515.0C718.8 519.5 720.2 523.4 722.0 527.0C723.8 530.6 727.0 533.2 729.0 536.5C731.0 539.8 732.2 543.5 734.0 547.0C735.8 550.5 737.8 554.3 739.5 557.5C741.2 560.7 742.2 563.2 744.0 566.0C745.8 568.8 747.3 572.2 750.0 574.5C752.7 576.8 756.5 578.6 760.0 580.0C763.5 581.4 767.0 582.2 771.0 583.0C775.0 583.8 779.8 583.8 784.0 584.5C788.2 585.2 792.7 585.2 796.5 587.0C800.3 588.8 803.5 592.2 807.0 595.0C810.5 597.8 814.0 601.8 817.5 604.0C821.0 606.2 824.5 607.5 828.0 608.5C831.5 609.5 834.8 610.8 838.5 610.0C842.2 609.2 846.4 606.4 850.0 604.0C853.6 601.6 857.0 598.3 860.0 595.5C863.0 592.7 865.2 589.8 868.0 587.0C870.8 584.2 874.2 581.2 877.0 578.5C879.8 575.8 882.2 573.4 885.0 571.0C887.8 568.6 891.2 564.9 893.5 564.0C895.8 563.1 898.2 563.8 899.0 565.5C899.8 567.2 898.5 571.1 898.0 574.0C897.5 576.9 897.2 579.3 896.0 583.0C894.8 586.7 892.4 591.8 891.0 596.0C889.6 600.2 887.5 604.0 887.5 608.0C887.5 612.0 889.2 616.4 891.0 620.0C892.8 623.6 895.2 626.5 898.0 629.5C900.8 632.5 904.5 635.2 908.0 638.0C911.5 640.8 915.7 643.7 919.0 646.0C922.3 648.3 925.2 649.8 928.0 652.0C930.8 654.2 933.8 656.8 936.0 659.0C938.2 661.2 939.9 662.8 941.0 665.0C942.1 667.2 942.3 669.5 942.5 672.0C942.7 674.5 942.4 677.2 942.0 680.0C941.6 682.8 942.0 686.2 940.0 688.5C938.0 690.8 933.5 692.6 930.0 694.0C926.5 695.4 923.0 696.0 919.0 697.0C915.0 698.0 910.2 698.9 906.0 700.0C901.8 701.1 897.0 702.2 893.5 703.5C890.0 704.8 885.1 706.2 885.0 707.5C884.9 708.8 890.2 709.9 893.0 711.0C895.8 712.1 899.2 712.2 902.0 714.0C904.8 715.8 898.7 720.7 910.0 722.0C921.3 723.3 960.0 828.0 970.0 722.0C980.0 616.0 971.0 191.7 970.0 86.0Z"/></clipPath><clipPath id="cptl"><path d="M669.5 395.0C670.8 393.2 677.8 390.5 682.0 389.0C686.2 387.5 689.5 387.0 695.0 386.0C700.5 385.0 708.0 383.7 715.0 383.0C722.0 382.3 729.8 382.0 737.0 382.0C744.2 382.0 751.7 382.3 758.0 383.0C764.3 383.7 770.3 384.5 775.0 386.0C779.7 387.5 783.5 389.5 786.0 392.0C788.5 394.5 789.0 397.7 790.0 401.0C791.0 404.3 792.0 408.5 792.0 412.0C792.0 415.5 792.0 418.7 790.0 422.0C788.0 425.3 783.8 429.0 780.0 432.0C776.2 435.0 767.8 433.7 767.0 440.0C766.2 446.3 769.5 456.7 775.0 470.0C780.5 483.3 789.2 505.0 800.0 520.0C810.8 535.0 830.3 548.3 840.0 560.0C849.7 571.7 855.5 583.8 858.0 590.0C860.5 596.2 858.2 593.8 855.0 597.0C851.8 600.2 843.7 605.3 838.7 609.0C833.7 612.7 829.5 615.8 825.0 619.0C820.5 622.2 816.2 625.2 811.7 628.0C807.2 630.8 802.5 633.6 798.0 636.0C793.5 638.4 789.5 640.7 784.8 642.5C780.1 644.3 774.4 646.0 770.0 647.0C765.6 648.0 762.0 649.0 758.5 648.5C755.0 648.0 751.8 645.8 749.0 644.0C746.2 642.2 744.2 640.8 741.5 638.0C738.8 635.2 735.8 630.5 733.0 627.0C730.2 623.5 727.7 620.2 724.5 617.0C721.3 613.8 716.8 610.8 714.0 608.0C711.2 605.2 709.2 603.5 707.5 600.0C705.8 596.5 705.6 591.2 703.5 587.0C701.4 582.8 698.6 577.2 695.0 574.5C691.4 571.8 686.2 572.1 682.0 571.0C677.8 569.9 673.5 569.3 669.5 568.0C665.5 566.7 661.5 564.8 658.0 563.0C654.5 561.2 650.8 559.8 648.5 557.5C646.2 555.2 644.8 551.8 644.0 549.0C643.2 546.2 642.5 543.7 644.0 540.5C645.5 537.3 649.5 533.5 653.0 530.0C656.5 526.5 661.7 523.2 665.0 519.5C668.3 515.8 670.2 511.6 673.0 508.0C675.8 504.4 678.8 500.8 682.0 498.0C685.2 495.2 689.2 493.1 692.0 491.0C694.8 488.9 697.3 487.8 699.0 485.5C700.7 483.2 701.2 479.8 702.0 477.0C702.8 474.2 703.5 472.7 703.5 469.0C703.5 465.3 702.8 459.2 702.0 455.0C701.2 450.8 700.8 446.3 699.0 443.5C697.2 440.7 693.1 439.8 691.0 438.0C688.9 436.2 686.5 435.2 686.5 433.0C686.5 430.8 689.6 427.5 691.0 425.0C692.4 422.5 695.3 420.3 695.0 418.0C694.7 415.7 691.2 413.2 689.0 411.0C686.8 408.8 684.5 406.8 682.0 405.0C679.5 403.2 676.1 401.7 674.0 400.0C671.9 398.3 668.2 396.8 669.5 395.0Z"/></clipPath>
<g clip-path="url(#cpt)"><g transform="rotate(-52 820 400)"><rect x="450" y="-50" width="760" height="900" fill="#fff" filter="url(#streak)" opacity=".16"/><rect x="450" y="-50" width="760" height="900" fill="#fff" filter="url(#streakd)" opacity=".1"/></g></g>
<g clip-path="url(#cptl)"><g transform="rotate(-52 820 400)"><rect x="450" y="-50" width="760" height="900" fill="#fff" filter="url(#streak)" opacity=".18"/></g></g>
<path d="M970.0 86.0C969.0 -19.7 970.0 87.0 964.0 88.0C958.0 89.0 944.0 90.3 934.0 92.0C924.0 93.7 914.0 95.7 904.0 98.0C894.0 100.3 884.1 102.9 874.0 106.0C863.9 109.1 853.7 113.3 843.5 116.5C833.3 119.7 823.1 122.0 813.0 125.0C802.9 128.0 791.5 131.5 783.0 134.5C774.5 137.5 768.8 139.9 762.0 143.0C755.2 146.1 748.7 149.5 742.5 153.0C736.3 156.5 730.4 160.3 725.0 164.0C719.6 167.7 714.3 171.2 710.0 175.0C705.7 178.8 702.3 183.0 699.0 187.0C695.7 191.0 692.3 194.7 690.0 199.0C687.7 203.3 686.3 208.2 685.0 213.0C683.7 217.8 682.5 222.7 682.0 227.5C681.5 232.3 681.7 237.2 682.0 242.0C682.3 246.8 682.5 251.5 684.0 256.0C685.5 260.5 688.0 265.0 691.0 269.0C694.0 273.0 697.7 276.3 702.0 280.0C706.3 283.7 711.6 287.6 717.0 291.0C722.4 294.4 728.2 297.7 734.5 300.5C740.8 303.3 748.2 305.7 755.0 308.0C761.8 310.3 768.3 312.5 775.0 314.5C781.7 316.5 788.2 318.3 795.0 320.0C801.8 321.7 809.3 323.2 815.5 324.5C821.7 325.8 826.7 326.6 832.0 328.0C837.3 329.4 843.2 331.8 847.5 333.0C851.8 334.2 855.2 334.0 858.0 335.0C860.8 336.0 862.5 337.2 864.0 339.0C865.5 340.8 866.5 343.7 867.0 346.0C867.5 348.3 867.3 350.2 867.0 353.0C866.7 355.8 865.8 359.7 865.0 363.0C864.2 366.3 862.8 370.2 862.0 373.0C861.2 375.8 860.8 377.8 860.0 380.0C859.2 382.2 858.8 383.7 857.5 386.0C856.2 388.3 853.8 391.5 852.0 394.0C850.2 396.5 849.2 398.3 847.0 401.0C844.8 403.7 841.8 407.2 839.0 410.0C836.2 412.8 833.0 415.5 830.5 418.0C828.0 420.5 826.2 422.9 824.0 425.0C821.8 427.1 820.0 428.3 817.5 430.5C815.0 432.7 811.8 435.8 809.0 438.0C806.2 440.2 803.7 442.0 800.5 443.5C797.3 445.0 793.5 445.9 790.0 447.0C786.5 448.1 782.8 449.3 779.5 450.0C776.2 450.7 772.8 450.7 770.0 451.0C767.2 451.3 763.5 452.8 762.5 452.0C761.5 451.2 763.2 448.2 764.0 446.0C764.8 443.8 767.3 440.7 767.0 439.0C766.7 437.3 763.8 436.3 762.0 436.0C760.2 435.7 758.7 436.0 756.0 437.0C753.3 438.0 749.2 440.2 746.0 442.0C742.8 443.8 739.7 445.2 737.0 447.5C734.3 449.8 732.1 453.2 730.0 456.0C727.9 458.8 726.2 461.3 724.5 464.5C722.8 467.7 721.1 471.5 720.0 475.0C718.9 478.5 718.5 481.3 718.0 485.5C717.5 489.7 717.0 495.1 717.0 500.0C717.0 504.9 717.2 510.5 718.0 515.0C718.8 519.5 720.2 523.4 722.0 527.0C723.8 530.6 727.0 533.2 729.0 536.5C731.0 539.8 732.2 543.5 734.0 547.0C735.8 550.5 737.8 554.3 739.5 557.5C741.2 560.7 742.2 563.2 744.0 566.0C745.8 568.8 747.3 572.2 750.0 574.5C752.7 576.8 756.5 578.6 760.0 580.0C763.5 581.4 767.0 582.2 771.0 583.0C775.0 583.8 779.8 583.8 784.0 584.5C788.2 585.2 792.7 585.2 796.5 587.0C800.3 588.8 803.5 592.2 807.0 595.0C810.5 597.8 814.0 601.8 817.5 604.0C821.0 606.2 824.5 607.5 828.0 608.5C831.5 609.5 834.8 610.8 838.5 610.0C842.2 609.2 846.4 606.4 850.0 604.0C853.6 601.6 857.0 598.3 860.0 595.5C863.0 592.7 865.2 589.8 868.0 587.0C870.8 584.2 874.2 581.2 877.0 578.5C879.8 575.8 882.2 573.4 885.0 571.0C887.8 568.6 891.2 564.9 893.5 564.0C895.8 563.1 898.2 563.8 899.0 565.5C899.8 567.2 898.5 571.1 898.0 574.0C897.5 576.9 897.2 579.3 896.0 583.0C894.8 586.7 892.4 591.8 891.0 596.0C889.6 600.2 887.5 604.0 887.5 608.0C887.5 612.0 889.2 616.4 891.0 620.0C892.8 623.6 895.2 626.5 898.0 629.5C900.8 632.5 904.5 635.2 908.0 638.0C911.5 640.8 915.7 643.7 919.0 646.0C922.3 648.3 925.2 649.8 928.0 652.0C930.8 654.2 933.8 656.8 936.0 659.0C938.2 661.2 939.9 662.8 941.0 665.0C942.1 667.2 942.3 669.5 942.5 672.0C942.7 674.5 942.4 677.2 942.0 680.0C941.6 682.8 942.0 686.2 940.0 688.5C938.0 690.8 933.5 692.6 930.0 694.0C926.5 695.4 923.0 696.0 919.0 697.0C915.0 698.0 910.2 698.9 906.0 700.0C901.8 701.1 897.0 702.2 893.5 703.5C890.0 704.8 885.1 706.2 885.0 707.5C884.9 708.8 890.2 709.9 893.0 711.0C895.8 712.1 899.2 712.2 902.0 714.0C904.8 715.8 898.7 720.7 910.0 722.0C921.3 723.3 960.0 828.0 970.0 722.0C980.0 616.0 971.0 191.7 970.0 86.0Z" fill="#fff" filter="url(#grain)" opacity=".2"/>
<path d="M970.0 86.0C969.0 -19.7 970.0 87.0 964.0 88.0C958.0 89.0 944.0 90.3 934.0 92.0C924.0 93.7 914.0 95.7 904.0 98.0C894.0 100.3 884.1 102.9 874.0 106.0C863.9 109.1 853.7 113.3 843.5 116.5C833.3 119.7 823.1 122.0 813.0 125.0C802.9 128.0 791.5 131.5 783.0 134.5C774.5 137.5 768.8 139.9 762.0 143.0C755.2 146.1 748.7 149.5 742.5 153.0C736.3 156.5 730.4 160.3 725.0 164.0C719.6 167.7 714.3 171.2 710.0 175.0C705.7 178.8 702.3 183.0 699.0 187.0C695.7 191.0 692.3 194.7 690.0 199.0C687.7 203.3 686.3 208.2 685.0 213.0C683.7 217.8 682.5 222.7 682.0 227.5C681.5 232.3 681.7 237.2 682.0 242.0C682.3 246.8 682.5 251.5 684.0 256.0C685.5 260.5 688.0 265.0 691.0 269.0C694.0 273.0 697.7 276.3 702.0 280.0C706.3 283.7 711.6 287.6 717.0 291.0C722.4 294.4 728.2 297.7 734.5 300.5C740.8 303.3 748.2 305.7 755.0 308.0C761.8 310.3 768.3 312.5 775.0 314.5C781.7 316.5 788.2 318.3 795.0 320.0C801.8 321.7 809.3 323.2 815.5 324.5C821.7 325.8 826.7 326.6 832.0 328.0C837.3 329.4 843.2 331.8 847.5 333.0C851.8 334.2 855.2 334.0 858.0 335.0C860.8 336.0 862.5 337.2 864.0 339.0C865.5 340.8 866.5 343.7 867.0 346.0C867.5 348.3 867.3 350.2 867.0 353.0C866.7 355.8 865.8 359.7 865.0 363.0C864.2 366.3 862.8 370.2 862.0 373.0C861.2 375.8 860.8 377.8 860.0 380.0C859.2 382.2 858.8 383.7 857.5 386.0C856.2 388.3 853.8 391.5 852.0 394.0C850.2 396.5 849.2 398.3 847.0 401.0C844.8 403.7 841.8 407.2 839.0 410.0C836.2 412.8 833.0 415.5 830.5 418.0C828.0 420.5 826.2 422.9 824.0 425.0C821.8 427.1 820.0 428.3 817.5 430.5C815.0 432.7 811.8 435.8 809.0 438.0C806.2 440.2 803.7 442.0 800.5 443.5C797.3 445.0 793.5 445.9 790.0 447.0C786.5 448.1 782.8 449.3 779.5 450.0C776.2 450.7 772.8 450.7 770.0 451.0C767.2 451.3 763.5 452.8 762.5 452.0C761.5 451.2 763.2 448.2 764.0 446.0C764.8 443.8 767.3 440.7 767.0 439.0C766.7 437.3 763.8 436.3 762.0 436.0C760.2 435.7 758.7 436.0 756.0 437.0C753.3 438.0 749.2 440.2 746.0 442.0C742.8 443.8 739.7 445.2 737.0 447.5C734.3 449.8 732.1 453.2 730.0 456.0C727.9 458.8 726.2 461.3 724.5 464.5C722.8 467.7 721.1 471.5 720.0 475.0C718.9 478.5 718.5 481.3 718.0 485.5C717.5 489.7 717.0 495.1 717.0 500.0C717.0 504.9 717.2 510.5 718.0 515.0C718.8 519.5 720.2 523.4 722.0 527.0C723.8 530.6 727.0 533.2 729.0 536.5C731.0 539.8 732.2 543.5 734.0 547.0C735.8 550.5 737.8 554.3 739.5 557.5C741.2 560.7 742.2 563.2 744.0 566.0C745.8 568.8 747.3 572.2 750.0 574.5C752.7 576.8 756.5 578.6 760.0 580.0C763.5 581.4 767.0 582.2 771.0 583.0C775.0 583.8 779.8 583.8 784.0 584.5C788.2 585.2 792.7 585.2 796.5 587.0C800.3 588.8 803.5 592.2 807.0 595.0C810.5 597.8 814.0 601.8 817.5 604.0C821.0 606.2 824.5 607.5 828.0 608.5C831.5 609.5 834.8 610.8 838.5 610.0C842.2 609.2 846.4 606.4 850.0 604.0C853.6 601.6 857.0 598.3 860.0 595.5C863.0 592.7 865.2 589.8 868.0 587.0C870.8 584.2 874.2 581.2 877.0 578.5C879.8 575.8 882.2 573.4 885.0 571.0C887.8 568.6 891.2 564.9 893.5 564.0C895.8 563.1 898.2 563.8 899.0 565.5C899.8 567.2 898.5 571.1 898.0 574.0C897.5 576.9 897.2 579.3 896.0 583.0C894.8 586.7 892.4 591.8 891.0 596.0C889.6 600.2 887.5 604.0 887.5 608.0C887.5 612.0 889.2 616.4 891.0 620.0C892.8 623.6 895.2 626.5 898.0 629.5C900.8 632.5 904.5 635.2 908.0 638.0C911.5 640.8 915.7 643.7 919.0 646.0C922.3 648.3 925.2 649.8 928.0 652.0C930.8 654.2 933.8 656.8 936.0 659.0C938.2 661.2 939.9 662.8 941.0 665.0C942.1 667.2 942.3 669.5 942.5 672.0C942.7 674.5 942.4 677.2 942.0 680.0C941.6 682.8 942.0 686.2 940.0 688.5C938.0 690.8 933.5 692.6 930.0 694.0C926.5 695.4 923.0 696.0 919.0 697.0C915.0 698.0 910.2 698.9 906.0 700.0C901.8 701.1 897.0 702.2 893.5 703.5C890.0 704.8 885.1 706.2 885.0 707.5C884.9 708.8 890.2 709.9 893.0 711.0C895.8 712.1 899.2 712.2 902.0 714.0C904.8 715.8 898.7 720.7 910.0 722.0C921.3 723.3 960.0 828.0 970.0 722.0C980.0 616.0 971.0 191.7 970.0 86.0Z" fill="#9a6ad0" filter="url(#graind)" opacity=".08"/>
<path d="M-20.0 30.0C32.2 -35.0 241.6 22.2 293.0 30.0C344.4 37.8 290.1 64.7 288.4 77.0C286.7 89.3 285.2 95.0 283.0 104.0C280.8 113.0 277.7 122.0 275.0 131.0C272.3 140.0 269.5 149.9 266.8 158.0C264.1 166.1 261.8 172.7 258.7 179.4C255.6 186.1 252.0 191.7 248.0 198.0C244.0 204.3 239.4 210.2 234.5 217.0C229.6 223.8 222.8 233.2 218.3 238.7C213.8 244.2 211.6 245.8 207.5 250.0C203.4 254.2 198.5 259.5 194.0 264.0C189.5 268.5 185.5 272.3 180.5 277.0C175.5 281.7 169.4 287.1 164.0 292.0C158.6 296.9 153.3 301.6 148.0 306.6C142.7 311.6 137.3 317.1 132.0 322.0C126.7 326.9 121.7 331.0 116.0 336.0C110.3 341.0 103.9 347.0 98.0 352.0C92.1 357.0 86.1 361.8 80.8 366.0C75.5 370.2 71.0 373.4 66.0 377.0C61.0 380.6 55.7 384.0 51.0 387.5C46.3 391.0 42.9 394.2 37.7 398.0C32.5 401.8 29.6 406.3 20.0 410.0C10.4 413.7 -13.3 483.3 -20.0 420.0C-26.7 356.7 -72.2 95.0 -20.0 30.0Z" fill="#fff" filter="url(#grain)" opacity=".3"/>
<path d="M-20.0 30.0C32.2 -35.0 241.6 22.2 293.0 30.0C344.4 37.8 290.1 64.7 288.4 77.0C286.7 89.3 285.2 95.0 283.0 104.0C280.8 113.0 277.7 122.0 275.0 131.0C272.3 140.0 269.5 149.9 266.8 158.0C264.1 166.1 261.8 172.7 258.7 179.4C255.6 186.1 252.0 191.7 248.0 198.0C244.0 204.3 239.4 210.2 234.5 217.0C229.6 223.8 222.8 233.2 218.3 238.7C213.8 244.2 211.6 245.8 207.5 250.0C203.4 254.2 198.5 259.5 194.0 264.0C189.5 268.5 185.5 272.3 180.5 277.0C175.5 281.7 169.4 287.1 164.0 292.0C158.6 296.9 153.3 301.6 148.0 306.6C142.7 311.6 137.3 317.1 132.0 322.0C126.7 326.9 121.7 331.0 116.0 336.0C110.3 341.0 103.9 347.0 98.0 352.0C92.1 357.0 86.1 361.8 80.8 366.0C75.5 370.2 71.0 373.4 66.0 377.0C61.0 380.6 55.7 384.0 51.0 387.5C46.3 391.0 42.9 394.2 37.7 398.0C32.5 401.8 29.6 406.3 20.0 410.0C10.4 413.7 -13.3 483.3 -20.0 420.0C-26.7 356.7 -72.2 95.0 -20.0 30.0Z" fill="#7a8478" filter="url(#graind)" opacity=".12"/>
<path d="M672.0 40.0L678.3 77.8L664.8 94.0L651.3 109.0L639.5 122.6L626.0 138.0L614.0 154.8L604.0 168.3L592.0 183.5L582.0 197.0L560.5 205.5L524.0 228.0L501.5 240.0L475.0 256.0L434.0 280.0L394.0 304.5L370.0 320.5L357.0 331.0L366.0 352.0L378.0 353.0L394.0 349.0L434.0 333.0L475.0 312.5L491.7 297.0L509.0 283.5L528.0 270.0L540.0 263.5L535.0 276.0L529.0 289.5L524.0 297.0L516.0 324.0L508.0 356.0L502.5 386.0L499.8 399.4L494.4 437.0L491.7 464.0L489.0 491.0L483.6 517.0L480.0 545.4L479.0 586.0L483.0 626.0L488.3 666.7L492.4 714.7L493.0 730.0L520.0 730.0L519.3 714.7L516.6 666.7L515.3 626.0L514.0 586.0L514.0 545.4L511.0 505.0L510.6 485.7L513.3 458.7L514.6 431.8L517.3 404.8L522.7 377.9L529.5 351.0L537.5 324.0L549.7 297.0L555.5 288.0L562.0 276.0L568.5 265.0L583.0 251.0L593.0 240.0L604.0 228.0L615.8 215.0L627.6 197.0L639.5 181.8L651.3 166.6L664.8 151.4L678.3 134.5L691.9 119.3L703.7 105.7L717.2 90.5L729.0 77.8L735.0 40.0Z" fill="#000" filter="url(#graind)" opacity=".12"/>
<path d="M672.0 40.0L678.3 77.8L664.8 94.0L651.3 109.0L639.5 122.6L626.0 138.0L614.0 154.8L604.0 168.3L592.0 183.5L582.0 197.0L560.5 205.5L524.0 228.0L501.5 240.0L475.0 256.0L434.0 280.0L394.0 304.5L370.0 320.5L357.0 331.0L366.0 352.0L378.0 353.0L394.0 349.0L434.0 333.0L475.0 312.5L491.7 297.0L509.0 283.5L528.0 270.0L540.0 263.5L535.0 276.0L529.0 289.5L524.0 297.0L516.0 324.0L508.0 356.0L502.5 386.0L499.8 399.4L494.4 437.0L491.7 464.0L489.0 491.0L483.6 517.0L480.0 545.4L479.0 586.0L483.0 626.0L488.3 666.7L492.4 714.7L493.0 730.0L520.0 730.0L519.3 714.7L516.6 666.7L515.3 626.0L514.0 586.0L514.0 545.4L511.0 505.0L510.6 485.7L513.3 458.7L514.6 431.8L517.3 404.8L522.7 377.9L529.5 351.0L537.5 324.0L549.7 297.0L555.5 288.0L562.0 276.0L568.5 265.0L583.0 251.0L593.0 240.0L604.0 228.0L615.8 215.0L627.6 197.0L639.5 181.8L651.3 166.6L664.8 151.4L678.3 134.5L691.9 119.3L703.7 105.7L717.2 90.5L729.0 77.8L735.0 40.0Z" fill="#fff" filter="url(#grain)" opacity=".12"/>
</g></svg>
<div class="a" style="left:964px;top:77px;width:10px;height:638px;background:#f6f7f9"></div>
<div class="a" style="left:966px;top:121px;width:6px;height:66px;background:#858585;border-radius:3px"></div>
<div class="a" style="left:35px;top:715px;width:939px;height:9px;background:#f3f3f3"></div>
<div class="a" style="left:89.5px;top:717px;width:144px;height:6.5px;background:#858585;border-radius:3.5px"></div>
<div class="a" style="left:33.5px;top:729px;width:66.5px;height:14.5px;background:#f3f3f3;border:1px solid #d2d2d2"></div>
<div class="a" style="left:99.5px;top:729px;width:63.5px;height:14.5px;background:#f3f3f3;border:1px solid #d2d2d2"></div>
<div class="a" style="left:571.5px;top:729px;width:199.5px;height:14.5px;background:#f3f3f3;border:1px solid #d2d2d2"></div>
<div class="a" style="left:778px;top:729px;width:82.5px;height:14.5px;background:#f3f3f3;border:1px solid #d2d2d2"></div>
<div class="a" style="left:868px;top:729px;width:53px;height:14.5px;background:#f3f3f3;border:1px solid #d2d2d2"></div>
<div class="a" style="left:927.5px;top:729px;width:48.5px;height:14.5px;background:#f3f3f3;border:1px solid #d2d2d2"></div>
<div class="t" style="left:37px;top:729.2px;font-size:11px;line-height:14px;height:14px;color:#222;transform:scaleX(0.721);">X:</div>
<div class="t" style="left:55px;top:729.2px;font-size:11px;line-height:14px;height:14px;color:#222;transform:scaleX(0.850);">95.00mm</div>
<div class="t" style="left:103px;top:729.2px;font-size:11px;line-height:14px;height:14px;color:#222;transform:scaleX(0.766);">Y:</div>
<div class="t" style="left:121.5px;top:729.2px;font-size:11px;line-height:14px;height:14px;color:#222;transform:scaleX(0.861);">39.20mm</div>
<div class="t" style="left:602.5px;top:729.2px;font-size:11px;line-height:14px;height:14px;color:#222;transform:scaleX(0.856);">592.66mm x 592.66mm (300ppi)</div>
<div class="t" style="left:800.5px;top:729.6px;font-size:12px;line-height:15px;height:15px;color:#222;transform:scaleX(0.629);">RGBカラー</div>
<div class="t" style="left:873px;top:730.4px;font-size:12px;line-height:15px;height:15px;color:#222;transform:scaleX(0.583);">リピートオフ</div>
<div class="t" style="left:934.5px;top:729.2px;font-size:11px;line-height:14px;height:14px;color:#222;transform:scaleX(0.806);">100.00%</div>
<div class="dark" style="left:33px;top:745px;width:943px;height:59px"></div>
<svg width="0" height="0" style="left:0;top:0"><defs><filter id="fb"><feGaussianBlur stdDeviation="0.7"/></filter></defs></svg>
<div class="a" style="left:35.5px;top:747px;width:57.5px;height:56px;border:2px solid #f4f4f4;border-radius:7px"></div>
<svg style="left:44px;top:748px;overflow:hidden" width="40" height="40" viewBox="0 0 147 145" preserveAspectRatio="none"><rect width="147" height="145" fill="#fbfbfa"/><g filter="url(#fb)"><path d="M-11.4 0Q0 -9.7 11.4 0Q0 9.7 -11.4 0Z" transform="translate(30.8 17.5) rotate(40)" fill="#aab6a8" opacity="0.8"/><path d="M-9.5 0Q0 -8.7 9.5 0Q0 8.7 -9.5 0Z" transform="translate(8.0 30.8) rotate(20)" fill="#aab6a8" opacity="0.8"/><path d="M-11.8 0Q0 -10.8 11.8 0Q0 10.8 -11.8 0Z" transform="translate(34.6 59.3) rotate(-30)" fill="#aab6a8" opacity="0.8"/><path d="M-10.6 0Q0 -9.7 10.6 0Q0 9.7 -10.6 0Z" transform="translate(45.0 67.8) rotate(30)" fill="#aab6a8" opacity="0.8"/><path d="M-11.8 0Q0 -11.9 11.8 0Q0 11.9 -11.8 0Z" transform="translate(17.5 74.5) rotate(60)" fill="#aab6a8" opacity="0.8"/><path d="M-9.9 0Q0 -9.2 9.9 0Q0 9.2 -9.9 0Z" transform="translate(25.1 87.8) rotate(50)" fill="#aab6a8" opacity="0.8"/><path d="M-9.5 0Q0 -8.7 9.5 0Q0 8.7 -9.5 0Z" transform="translate(9.9 101.1) rotate(30)" fill="#aab6a8" opacity="0.8"/><path d="M-10.6 0Q0 -9.7 10.6 0Q0 9.7 -10.6 0Z" transform="translate(19.4 112.5) rotate(-60)" fill="#aab6a8" opacity="0.8"/><path d="M-9.9 0Q0 -9.7 9.9 0Q0 9.7 -9.9 0Z" transform="translate(15.6 142.9) rotate(-30)" fill="#aab6a8" opacity="0.8"/><path d="M-11.8 0Q0 -10.8 11.8 0Q0 10.8 -11.8 0Z" transform="translate(74.5 93.5) rotate(-60)" fill="#aab6a8" opacity="0.8"/><path d="M-9.9 0Q0 -8.1 9.9 0Q0 8.1 -9.9 0Z" transform="translate(86.8 85.9) rotate(-50)" fill="#aab6a8" opacity="0.8"/><path d="M-12.9 0Q0 -9.7 12.9 0Q0 9.7 -12.9 0Z" transform="translate(78.3 101.1) rotate(-20)" fill="#aab6a8" opacity="0.8"/><path d="M-15.2 0Q0 -10.8 15.2 0Q0 10.8 -15.2 0Z" transform="translate(70.7 121.0) rotate(-15)" fill="#aab6a8" opacity="0.8"/><path d="M-11.8 0Q0 -10.8 11.8 0Q0 10.8 -11.8 0Z" transform="translate(101.1 93.5) rotate(70)" fill="#aab6a8" opacity="0.8"/><path d="M-9.5 0Q0 -8.7 9.5 0Q0 8.7 -9.5 0Z" transform="translate(109.6 101.1) rotate(60)" fill="#aab6a8" opacity="0.8"/><path d="M-13.3 0Q0 -10.8 13.3 0Q0 10.8 -13.3 0Z" transform="translate(123.9 78.3) rotate(20)" fill="#aab6a8" opacity="0.8"/><path d="M-11.8 0Q0 -9.7 11.8 0Q0 9.7 -11.8 0Z" transform="translate(131.5 97.3) rotate(70)" fill="#aab6a8" opacity="0.8"/><path d="M-10.6 0Q0 -8.7 10.6 0Q0 8.7 -10.6 0Z" transform="translate(140.0 108.7) rotate(65)" fill="#aab6a8" opacity="0.8"/><path d="M-11.8 0Q0 -10.3 11.8 0Q0 10.3 -11.8 0Z" transform="translate(98.2 23.2) rotate(60)" fill="#aab6a8" opacity="0.8"/><path d="M-10.6 0Q0 -9.7 10.6 0Q0 9.7 -10.6 0Z" transform="translate(89.7 11.8) rotate(30)" fill="#aab6a8" opacity="0.8"/><path d="M-10.6 0Q0 -9.2 10.6 0Q0 9.2 -10.6 0Z" transform="translate(102.0 33.6) rotate(75)" fill="#aab6a8" opacity="0.8"/><path d="M-10.6 0Q0 -9.7 10.6 0Q0 9.7 -10.6 0Z" transform="translate(74.5 11.8) rotate(-20)" fill="#aab6a8" opacity="0.8"/><path d="M-9.5 0Q0 -7.0 9.5 0Q0 7.0 -9.5 0Z" transform="translate(117.2 44.1) rotate(-40)" fill="#aab6a8" opacity="0.8"/><path d="M-7.6 0Q0 -7.0 7.6 0Q0 7.0 -7.6 0Z" transform="translate(8.0 55.5) rotate(0)" fill="#aab6a8" opacity="0.8"/><path d="M-9.5 0Q0 -7.6 9.5 0Q0 7.6 -9.5 0Z" transform="translate(66.9 110.6) rotate(-60)" fill="#aab6a8" opacity="0.8"/><path d="M-8.4 0Q0 -8.1 8.4 0Q0 8.1 -8.4 0Z" transform="translate(148.6 89.7) rotate(80)" fill="#aab6a8" opacity="0.8"/><path d="M-9.5 0Q0 -8.7 9.5 0Q0 8.7 -9.5 0Z" transform="translate(8.0 125.8) rotate(70)" fill="#aab6a8" opacity="0.8"/><path d="M-7.6 0Q0 -7.0 7.6 0Q0 7.0 -7.6 0Z" transform="translate(110.6 6.1) rotate(80)" fill="#aab6a8" opacity="0.8"/><path d="M-8.4 0Q0 -7.0 8.4 0Q0 7.0 -8.4 0Z" transform="translate(59.3 42.2) rotate(20)" fill="#aab6a8" opacity="0.8"/><path d="M-9.5 0Q0 -7.6 9.5 0Q0 7.6 -9.5 0Z" transform="translate(127.7 85.9) rotate(40)" fill="#aab6a8" opacity="0.8"/><path d="M-8.4 0Q0 -7.6 8.4 0Q0 7.6 -8.4 0Z" transform="translate(49.8 112.5) rotate(20)" fill="#aab6a8" opacity="0.8"/><path d="M-8.4 0Q0 -7.6 8.4 0Q0 7.6 -8.4 0Z" transform="translate(93.5 101.1) rotate(80)" fill="#aab6a8" opacity="0.8"/><path d="M-9.5 0Q0 -8.1 9.5 0Q0 8.1 -9.5 0Z" transform="translate(25.1 57.4) rotate(-10)" fill="#aab6a8" opacity="0.8"/><path d="M-7.6 0Q0 -6.5 7.6 0Q0 6.5 -7.6 0Z" transform="translate(44.1 78.3) rotate(70)" fill="#aab6a8" opacity="0.8"/><path d="M-7.6 0Q0 -6.5 7.6 0Q0 6.5 -7.6 0Z" transform="translate(85.9 28.9) rotate(45)" fill="#aab6a8" opacity="0.8"/><path d="M-7.6 0Q0 -7.0 7.6 0Q0 7.0 -7.6 0Z" transform="translate(139.1 42.2) rotate(-70)" fill="#aab6a8" opacity="0.8"/><path d="M-6.8 0Q0 -6.5 6.8 0Q0 6.5 -6.8 0Z" transform="translate(146.7 123.9) rotate(70)" fill="#aab6a8" opacity="0.8"/><path d="M-8.4 0Q0 -7.6 8.4 0Q0 7.6 -8.4 0Z" transform="translate(6.1 6.1) rotate(-30)" fill="#aab6a8" opacity="0.8"/><path d="M-6.8 0Q0 -6.0 6.8 0Q0 6.0 -6.8 0Z" transform="translate(21.3 11.8) rotate(50)" fill="#aab6a8" opacity="0.8"/><path d="M-8.4 0Q0 -7.0 8.4 0Q0 7.0 -8.4 0Z" transform="translate(53.6 141.0) rotate(10)" fill="#aab6a8" opacity="0.8"/><path d="M-8.4 0Q0 -7.0 8.4 0Q0 7.0 -8.4 0Z" transform="translate(112.5 80.2) rotate(-30)" fill="#aab6a8" opacity="0.8"/><ellipse cx="49.9" cy="24.1" rx="7.3" ry="5.6" transform="rotate(10 49.9 24.1)" fill="#cdaeea" opacity="0.8"/><ellipse cx="42.9" cy="28.2" rx="7.3" ry="5.6" transform="rotate(102 42.9 28.2)" fill="#cdaeea" opacity="0.8"/><ellipse cx="39.1" cy="25.9" rx="7.3" ry="5.6" transform="rotate(148 39.1 25.9)" fill="#cdaeea" opacity="0.8"/><ellipse cx="40.1" cy="19.4" rx="7.3" ry="5.6" transform="rotate(228 40.1 19.4)" fill="#cdaeea" opacity="0.8"/><ellipse cx="47.7" cy="19.1" rx="7.3" ry="5.6" transform="rotate(308 47.7 19.1)" fill="#cdaeea" opacity="0.8"/><ellipse cx="43.5" cy="23.7" rx="4.9" ry="3.7" transform="rotate(20 43.5 23.7)" fill="#a07fd4" opacity="0.7"/><ellipse cx="42.9" cy="23.7" rx="1.4" ry="1.2" transform="rotate(0 42.9 23.7)" fill="#ffffff" opacity="0.85"/><ellipse cx="45.3" cy="22.7" rx="0.9" ry="0.8" transform="rotate(0 45.3 22.7)" fill="#ffffff" opacity="0.8"/><ellipse cx="17.5" cy="49.9" rx="7.1" ry="5.6" transform="rotate(1 17.5 49.9)" fill="#cdaeea" opacity="0.8"/><ellipse cx="13.4" cy="54.7" rx="7.1" ry="5.6" transform="rotate(74 13.4 54.7)" fill="#cdaeea" opacity="0.8"/><ellipse cx="6.2" cy="50.7" rx="7.1" ry="5.6" transform="rotate(170 6.2 50.7)" fill="#cdaeea" opacity="0.8"/><ellipse cx="8.3" cy="45.7" rx="7.1" ry="5.6" transform="rotate(233 8.3 45.7)" fill="#cdaeea" opacity="0.8"/><ellipse cx="13.8" cy="45.0" rx="7.1" ry="5.6" transform="rotate(291 13.8 45.0)" fill="#cdaeea" opacity="0.8"/><ellipse cx="11.2" cy="50.3" rx="4.8" ry="3.7" transform="rotate(20 11.2 50.3)" fill="#a07fd4" opacity="0.7"/><ellipse cx="10.6" cy="50.3" rx="1.4" ry="1.2" transform="rotate(0 10.6 50.3)" fill="#ffffff" opacity="0.85"/><ellipse cx="12.9" cy="49.3" rx="0.9" ry="0.8" transform="rotate(0 12.9 49.3)" fill="#ffffff" opacity="0.8"/><ellipse cx="99.4" cy="66.1" rx="8.7" ry="6.5" transform="rotate(11 99.4 66.1)" fill="#cdaeea" opacity="0.8"/><ellipse cx="92.5" cy="70.9" rx="8.7" ry="6.5" transform="rotate(90 92.5 70.9)" fill="#cdaeea" opacity="0.8"/><ellipse cx="86.8" cy="68.4" rx="8.7" ry="6.5" transform="rotate(145 86.8 68.4)" fill="#cdaeea" opacity="0.8"/><ellipse cx="89.6" cy="59.6" rx="8.7" ry="6.5" transform="rotate(245 89.6 59.6)" fill="#cdaeea" opacity="0.8"/><ellipse cx="96.5" cy="60.1" rx="8.7" ry="6.5" transform="rotate(304 96.5 60.1)" fill="#cdaeea" opacity="0.8"/><ellipse cx="91.8" cy="65.6" rx="5.9" ry="4.2" transform="rotate(20 91.8 65.6)" fill="#a07fd4" opacity="0.7"/><ellipse cx="91.1" cy="65.6" rx="1.7" ry="1.4" transform="rotate(0 91.1 65.6)" fill="#ffffff" opacity="0.85"/><ellipse cx="93.9" cy="64.4" rx="1.1" ry="0.9" transform="rotate(0 93.9 64.4)" fill="#ffffff" opacity="0.8"/><ellipse cx="129.6" cy="14.2" rx="7.1" ry="5.4" transform="rotate(6 129.6 14.2)" fill="#cdaeea" opacity="0.8"/><ellipse cx="125.6" cy="18.4" rx="7.1" ry="5.4" transform="rotate(73 125.6 18.4)" fill="#cdaeea" opacity="0.8"/><ellipse cx="119.2" cy="16.4" rx="7.1" ry="5.4" transform="rotate(146 119.2 16.4)" fill="#cdaeea" opacity="0.8"/><ellipse cx="120.1" cy="10.0" rx="7.1" ry="5.4" transform="rotate(229 120.1 10.0)" fill="#cdaeea" opacity="0.8"/><ellipse cx="126.8" cy="9.4" rx="7.1" ry="5.4" transform="rotate(301 126.8 9.4)" fill="#cdaeea" opacity="0.8"/><ellipse cx="123.3" cy="14.2" rx="4.8" ry="3.6" transform="rotate(20 123.3 14.2)" fill="#a07fd4" opacity="0.7"/><ellipse cx="122.7" cy="14.2" rx="1.4" ry="1.2" transform="rotate(0 122.7 14.2)" fill="#ffffff" opacity="0.85"/><ellipse cx="125.0" cy="13.2" rx="0.9" ry="0.8" transform="rotate(0 125.0 13.2)" fill="#ffffff" opacity="0.8"/><ellipse cx="42.4" cy="127.9" rx="7.3" ry="5.6" transform="rotate(2 42.4 127.9)" fill="#cdaeea" opacity="0.8"/><ellipse cx="37.6" cy="132.7" rx="7.3" ry="5.6" transform="rotate(79 37.6 132.7)" fill="#cdaeea" opacity="0.8"/><ellipse cx="31.6" cy="130.6" rx="7.3" ry="5.6" transform="rotate(146 31.6 130.6)" fill="#cdaeea" opacity="0.8"/><ellipse cx="32.9" cy="123.6" rx="7.3" ry="5.6" transform="rotate(233 32.9 123.6)" fill="#cdaeea" opacity="0.8"/><ellipse cx="39.5" cy="123.3" rx="7.3" ry="5.6" transform="rotate(301 39.5 123.3)" fill="#cdaeea" opacity="0.8"/><ellipse cx="35.9" cy="128.2" rx="4.9" ry="3.7" transform="rotate(20 35.9 128.2)" fill="#a07fd4" opacity="0.7"/><ellipse cx="35.3" cy="128.2" rx="1.4" ry="1.2" transform="rotate(0 35.3 128.2)" fill="#ffffff" opacity="0.85"/><ellipse cx="37.7" cy="127.2" rx="0.9" ry="0.8" transform="rotate(0 37.7 127.2)" fill="#ffffff" opacity="0.8"/><ellipse cx="138.7" cy="136.3" rx="7.8" ry="5.9" transform="rotate(1 138.7 136.3)" fill="#cdaeea" opacity="0.8"/><ellipse cx="131.6" cy="141.5" rx="7.8" ry="5.9" transform="rotate(98 131.6 141.5)" fill="#cdaeea" opacity="0.8"/><ellipse cx="126.5" cy="137.9" rx="7.8" ry="5.9" transform="rotate(162 126.5 137.9)" fill="#cdaeea" opacity="0.8"/><ellipse cx="127.6" cy="132.9" rx="7.8" ry="5.9" transform="rotate(219 127.6 132.9)" fill="#cdaeea" opacity="0.8"/><ellipse cx="137.1" cy="132.7" rx="7.8" ry="5.9" transform="rotate(318 137.1 132.7)" fill="#cdaeea" opacity="0.8"/><ellipse cx="131.8" cy="136.8" rx="5.3" ry="3.8" transform="rotate(20 131.8 136.8)" fill="#a07fd4" opacity="0.7"/><ellipse cx="131.2" cy="136.8" rx="1.5" ry="1.3" transform="rotate(0 131.2 136.8)" fill="#ffffff" opacity="0.85"/><ellipse cx="133.7" cy="135.7" rx="1.0" ry="0.9" transform="rotate(0 133.7 135.7)" fill="#ffffff" opacity="0.8"/><ellipse cx="146.1" cy="71.1" rx="3.5" ry="3.3" transform="rotate(7 146.1 71.1)" fill="#cdaeea" opacity="0.8"/><ellipse cx="143.2" cy="73.7" rx="3.5" ry="3.3" transform="rotate(92 143.2 73.7)" fill="#cdaeea" opacity="0.8"/><ellipse cx="140.5" cy="71.5" rx="3.5" ry="3.3" transform="rotate(164 140.5 71.5)" fill="#cdaeea" opacity="0.8"/><ellipse cx="141.6" cy="68.2" rx="3.5" ry="3.3" transform="rotate(234 141.6 68.2)" fill="#cdaeea" opacity="0.8"/><ellipse cx="145.4" cy="68.6" rx="3.5" ry="3.3" transform="rotate(318 145.4 68.6)" fill="#cdaeea" opacity="0.8"/><ellipse cx="143.0" cy="71.0" rx="2.4" ry="2.2" transform="rotate(20 143.0 71.0)" fill="#a07fd4" opacity="0.7"/><ellipse cx="142.7" cy="71.0" rx="0.7" ry="0.7" transform="rotate(0 142.7 71.0)" fill="#ffffff" opacity="0.85"/><ellipse cx="143.8" cy="70.4" rx="0.5" ry="0.5" transform="rotate(0 143.8 70.4)" fill="#ffffff" opacity="0.8"/><ellipse cx="65.9" cy="2.7" rx="3.5" ry="2.3" transform="rotate(1 65.9 2.7)" fill="#cdaeea" opacity="0.8"/><ellipse cx="63.1" cy="4.8" rx="3.5" ry="2.3" transform="rotate(90 63.1 4.8)" fill="#cdaeea" opacity="0.8"/><ellipse cx="60.4" cy="3.3" rx="3.5" ry="2.3" transform="rotate(162 60.4 3.3)" fill="#cdaeea" opacity="0.8"/><ellipse cx="61.2" cy="1.1" rx="3.5" ry="2.3" transform="rotate(228 61.2 1.1)" fill="#cdaeea" opacity="0.8"/><ellipse cx="64.0" cy="0.7" rx="3.5" ry="2.3" transform="rotate(289 64.0 0.7)" fill="#cdaeea" opacity="0.8"/><ellipse cx="62.8" cy="2.9" rx="2.4" ry="1.5" transform="rotate(20 62.8 2.9)" fill="#a07fd4" opacity="0.7"/><ellipse cx="62.5" cy="2.9" rx="0.7" ry="0.5" transform="rotate(0 62.5 2.9)" fill="#ffffff" opacity="0.85"/><ellipse cx="63.7" cy="2.5" rx="0.5" ry="0.3" transform="rotate(0 63.7 2.5)" fill="#ffffff" opacity="0.8"/><ellipse cx="65.7" cy="145.0" rx="3.3" ry="1.7" transform="rotate(7 65.7 145.0)" fill="#cdaeea" opacity="0.8"/><ellipse cx="63.9" cy="146.2" rx="3.3" ry="1.7" transform="rotate(73 63.9 146.2)" fill="#cdaeea" opacity="0.8"/><ellipse cx="60.6" cy="145.3" rx="3.3" ry="1.7" transform="rotate(161 60.6 145.3)" fill="#cdaeea" opacity="0.8"/><ellipse cx="61.9" cy="143.4" rx="3.3" ry="1.7" transform="rotate(243 61.9 143.4)" fill="#cdaeea" opacity="0.8"/><ellipse cx="64.1" cy="143.4" rx="3.3" ry="1.7" transform="rotate(292 64.1 143.4)" fill="#cdaeea" opacity="0.8"/><ellipse cx="62.8" cy="144.9" rx="2.2" ry="1.1" transform="rotate(20 62.8 144.9)" fill="#a07fd4" opacity="0.7"/><ellipse cx="62.5" cy="144.9" rx="0.6" ry="0.4" transform="rotate(0 62.5 144.9)" fill="#ffffff" opacity="0.85"/><ellipse cx="63.6" cy="144.6" rx="0.4" ry="0.2" transform="rotate(0 63.6 144.6)" fill="#ffffff" opacity="0.8"/><ellipse cx="5.7" cy="71.2" rx="1.9" ry="3.3" transform="rotate(9 5.7 71.2)" fill="#cdaeea" opacity="0.8"/><ellipse cx="4.3" cy="73.7" rx="1.9" ry="3.3" transform="rotate(85 4.3 73.7)" fill="#cdaeea" opacity="0.8"/><ellipse cx="2.9" cy="72.3" rx="1.9" ry="3.3" transform="rotate(148 2.9 72.3)" fill="#cdaeea" opacity="0.8"/><ellipse cx="3.3" cy="68.3" rx="1.9" ry="3.3" transform="rotate(233 3.3 68.3)" fill="#cdaeea" opacity="0.8"/><ellipse cx="4.7" cy="67.8" rx="1.9" ry="3.3" transform="rotate(291 4.7 67.8)" fill="#cdaeea" opacity="0.8"/><ellipse cx="4.0" cy="71.0" rx="1.3" ry="2.2" transform="rotate(20 4.0 71.0)" fill="#a07fd4" opacity="0.7"/><ellipse cx="3.9" cy="71.0" rx="0.4" ry="0.7" transform="rotate(0 3.9 71.0)" fill="#ffffff" opacity="0.85"/><ellipse cx="4.5" cy="70.4" rx="0.2" ry="0.5" transform="rotate(0 4.5 70.4)" fill="#ffffff" opacity="0.8"/><path d="M-8.7 0Q0 -8.1 8.7 0Q0 8.1 -8.7 0Z" transform="translate(53.6 46.0) rotate(60)" fill="#2c4a2f" opacity="0.9"/><path d="M-9.5 0Q0 -8.1 9.5 0Q0 8.1 -9.5 0Z" transform="translate(59.3 57.4) rotate(80)" fill="#2c4a2f" opacity="0.9"/><path d="M-8.4 0Q0 -7.0 8.4 0Q0 7.0 -8.4 0Z" transform="translate(63.1 68.8) rotate(85)" fill="#2c4a2f" opacity="0.9"/><path d="M-7.2 0Q0 -6.5 7.2 0Q0 6.5 -7.2 0Z" transform="translate(67.8 47.9) rotate(40)" fill="#2c4a2f" opacity="0.9"/><path d="M-6.5 0Q0 -8.1 6.5 0Q0 8.1 -6.5 0Z" transform="translate(140.0 8.9) rotate(40)" fill="#2c4a2f" opacity="0.9"/><path d="M-8.7 0Q0 -8.7 8.7 0Q0 8.7 -8.7 0Z" transform="translate(141.9 23.2) rotate(80)" fill="#2c4a2f" opacity="0.9"/><path d="M-5.7 0Q0 -6.0 5.7 0Q0 6.0 -5.7 0Z" transform="translate(145.2 15.6) rotate(60)" fill="#2c4a2f" opacity="0.9"/><path d="M-10.3 0Q0 -8.7 10.3 0Q0 8.7 -10.3 0Z" transform="translate(116.3 63.1) rotate(-35)" fill="#2c4a2f" opacity="0.9"/><path d="M-9.1 0Q0 -7.6 9.1 0Q0 7.6 -9.1 0Z" transform="translate(125.8 55.5) rotate(-45)" fill="#2c4a2f" opacity="0.9"/><path d="M-8.0 0Q0 -7.0 8.0 0Q0 7.0 -8.0 0Z" transform="translate(133.4 46.0) rotate(-60)" fill="#2c4a2f" opacity="0.9"/><path d="M-6.8 0Q0 -6.0 6.8 0Q0 6.0 -6.8 0Z" transform="translate(120.1 69.2) rotate(-15)" fill="#2c4a2f" opacity="0.9"/><path d="M-9.1 0Q0 -8.7 9.1 0Q0 8.7 -9.1 0Z" transform="translate(44.1 85.9) rotate(80)" fill="#2c4a2f" opacity="0.9"/><path d="M-8.0 0Q0 -8.7 8.0 0Q0 8.7 -8.0 0Z" transform="translate(38.4 104.9) rotate(60)" fill="#2c4a2f" opacity="0.9"/><path d="M-8.0 0Q0 -7.0 8.0 0Q0 7.0 -8.0 0Z" transform="translate(32.7 80.2) rotate(50)" fill="#2c4a2f" opacity="0.9"/><path d="M-8.4 0Q0 -8.1 8.4 0Q0 8.1 -8.4 0Z" transform="translate(108.7 125.8) rotate(-60)" fill="#2c4a2f" opacity="0.9"/><path d="M-7.6 0Q0 -7.6 7.6 0Q0 7.6 -7.6 0Z" transform="translate(104.9 137.2) rotate(-70)" fill="#2c4a2f" opacity="0.9"/><path d="M-5.7 0Q0 -6.0 5.7 0Q0 6.0 -5.7 0Z" transform="translate(101.1 123.9) rotate(-40)" fill="#2c4a2f" opacity="0.9"/><path d="M-6.8 0Q0 -6.0 6.8 0Q0 6.0 -6.8 0Z" transform="translate(6.1 23.2) rotate(30)" fill="#2c4a2f" opacity="0.9"/><path d="M-5.7 0Q0 -5.4 5.7 0Q0 5.4 -5.7 0Z" transform="translate(111.5 133.4) rotate(-80)" fill="#2c4a2f" opacity="0.9"/><ellipse cx="70.7" cy="28.9" rx="5.2" ry="2.6" transform="rotate(50 70.7 28.9)" fill="#6b5aa6" opacity="0.92"/><ellipse cx="78.3" cy="35.5" rx="4.8" ry="2.4" transform="rotate(40 78.3 35.5)" fill="#8f62c4" opacity="0.92"/><ellipse cx="82.1" cy="44.5" rx="6.1" ry="2.4" transform="rotate(20 82.1 44.5)" fill="#8f62c4" opacity="0.92"/><ellipse cx="25.1" cy="37.4" rx="5.7" ry="2.6" transform="rotate(60 25.1 37.4)" fill="#6b5aa6" opacity="0.92"/><ellipse cx="32.7" cy="41.2" rx="4.4" ry="2.1" transform="rotate(70 32.7 41.2)" fill="#8f62c4" opacity="0.92"/><ellipse cx="44.1" cy="46.9" rx="4.8" ry="2.1" transform="rotate(50 44.1 46.9)" fill="#8f62c4" opacity="0.92"/><ellipse cx="105.8" cy="40.3" rx="6.6" ry="2.9" transform="rotate(-55 105.8 40.3)" fill="#6b5aa6" opacity="0.92"/><ellipse cx="113.4" cy="52.6" rx="5.7" ry="2.6" transform="rotate(-45 113.4 52.6)" fill="#8f62c4" opacity="0.92"/><ellipse cx="118.2" cy="40.3" rx="4.4" ry="1.9" transform="rotate(-20 118.2 40.3)" fill="#8f62c4" opacity="0.92"/><ellipse cx="68.8" cy="75.4" rx="5.7" ry="2.6" transform="rotate(-75 68.8 75.4)" fill="#6b5aa6" opacity="0.92"/><ellipse cx="53.6" cy="89.7" rx="5.2" ry="2.4" transform="rotate(-75 53.6 89.7)" fill="#8f62c4" opacity="0.92"/><ellipse cx="60.2" cy="98.2" rx="5.2" ry="2.4" transform="rotate(-60 60.2 98.2)" fill="#8f62c4" opacity="0.92"/><ellipse cx="89.7" cy="113.4" rx="6.6" ry="2.9" transform="rotate(-55 89.7 113.4)" fill="#6b5aa6" opacity="0.92"/><ellipse cx="121.0" cy="101.1" rx="5.7" ry="2.6" transform="rotate(50 121.0 101.1)" fill="#8f62c4" opacity="0.92"/><ellipse cx="112.5" cy="108.7" rx="5.2" ry="2.4" transform="rotate(85 112.5 108.7)" fill="#8f62c4" opacity="0.92"/><ellipse cx="124.3" cy="114.8" rx="5.2" ry="2.6" transform="rotate(50 124.3 114.8)" fill="#6b5aa6" opacity="0.92"/><ellipse cx="118.2" cy="120.5" rx="4.8" ry="2.4" transform="rotate(80 118.2 120.5)" fill="#8f62c4" opacity="0.92"/><ellipse cx="82.1" cy="129.6" rx="5.7" ry="2.4" transform="rotate(-20 82.1 129.6)" fill="#8f62c4" opacity="0.92"/><ellipse cx="76.4" cy="136.2" rx="5.2" ry="2.1" transform="rotate(0 76.4 136.2)" fill="#6b5aa6" opacity="0.92"/><ellipse cx="94.4" cy="135.3" rx="4.8" ry="2.1" transform="rotate(-75 94.4 135.3)" fill="#8f62c4" opacity="0.92"/><ellipse cx="36.9" cy="3.2" rx="7.4" ry="2.6" transform="rotate(-25 36.9 3.2)" fill="#8f62c4" opacity="0.92"/><ellipse cx="49.8" cy="4.6" rx="4.4" ry="2.1" transform="rotate(55 49.8 4.6)" fill="#6b5aa6" opacity="0.92"/><ellipse cx="15.6" cy="18.4" rx="5.2" ry="2.4" transform="rotate(-45 15.6 18.4)" fill="#8f62c4" opacity="0.92"/><ellipse cx="9.5" cy="87.8" rx="5.2" ry="2.4" transform="rotate(50 9.5 87.8)" fill="#8f62c4" opacity="0.92"/><ellipse cx="17.5" cy="26.0" rx="3.5" ry="1.9" transform="rotate(70 17.5 26.0)" fill="#6b5aa6" opacity="0.92"/><path d="M150 125L215 90" transform="translate(-12.92 -5.32) scale(0.1900)" stroke="#6d6a5c" stroke-width="4" fill="none" opacity=".6"/><path d="M200 225Q230 200 215 165" transform="translate(-12.92 -5.32) scale(0.1900)" stroke="#6d6a5c" stroke-width="4" fill="none" opacity=".6"/><path d="M440 180Q500 240 540 290" transform="translate(-12.92 -5.32) scale(0.1900)" stroke="#6d6a5c" stroke-width="4" fill="none" opacity=".6"/><path d="M625 240Q650 200 660 150" transform="translate(-12.92 -5.32) scale(0.1900)" stroke="#6d6a5c" stroke-width="4" fill="none" opacity=".6"/><path d="M665 305L740 225" transform="translate(-12.92 -5.32) scale(0.1900)" stroke="#6d6a5c" stroke-width="4" fill="none" opacity=".6"/><path d="M430 425Q400 500 350 600" transform="translate(-12.92 -5.32) scale(0.1900)" stroke="#6d6a5c" stroke-width="4" fill="none" opacity=".6"/><path d="M705 560Q680 600 660 520" transform="translate(-12.92 -5.32) scale(0.1900)" stroke="#6d6a5c" stroke-width="4" fill="none" opacity=".6"/><path d="M500 710L380 710" transform="translate(-12.92 -5.32) scale(0.1900)" stroke="#6d6a5c" stroke-width="4" fill="none" opacity=".6"/><path d="M540 625L565 740" transform="translate(-12.92 -5.32) scale(0.1900)" stroke="#6d6a5c" stroke-width="4" fill="none" opacity=".6"/></g></svg>
<div class="a" style="left:46.5px;top:749px;width:9.5px;height:11px;background:#e0289a;border-radius:1px"></div>
<div class="a" style="left:49px;top:751px;width:4.5px;height:4.5px;border:1px solid #fff;border-radius:50%"></div>
<div class="a" style="left:48.5px;top:757px;width:5.5px;height:1px;background:#f8c0e0"></div>
<svg style="left:104px;top:748px;overflow:hidden" width="40" height="40" viewBox="0 0 147 145" preserveAspectRatio="none"><rect width="147" height="145" fill="#fbfbfa"/><g filter="url(#fb)"><path d="M-11.4 0Q0 -9.7 11.4 0Q0 9.7 -11.4 0Z" transform="translate(30.8 17.5) rotate(40)" fill="#aab6a8" opacity="0.8"/><path d="M-9.5 0Q0 -8.7 9.5 0Q0 8.7 -9.5 0Z" transform="translate(8.0 30.8) rotate(20)" fill="#aab6a8" opacity="0.8"/><path d="M-11.8 0Q0 -10.8 11.8 0Q0 10.8 -11.8 0Z" transform="translate(34.6 59.3) rotate(-30)" fill="#aab6a8" opacity="0.8"/><path d="M-10.6 0Q0 -9.7 10.6 0Q0 9.7 -10.6 0Z" transform="translate(45.0 67.8) rotate(30)" fill="#aab6a8" opacity="0.8"/><path d="M-11.8 0Q0 -11.9 11.8 0Q0 11.9 -11.8 0Z" transform="translate(17.5 74.5) rotate(60)" fill="#aab6a8" opacity="0.8"/><path d="M-9.9 0Q0 -9.2 9.9 0Q0 9.2 -9.9 0Z" transform="translate(25.1 87.8) rotate(50)" fill="#aab6a8" opacity="0.8"/><path d="M-9.5 0Q0 -8.7 9.5 0Q0 8.7 -9.5 0Z" transform="translate(9.9 101.1) rotate(30)" fill="#aab6a8" opacity="0.8"/><path d="M-10.6 0Q0 -9.7 10.6 0Q0 9.7 -10.6 0Z" transform="translate(19.4 112.5) rotate(-60)" fill="#aab6a8" opacity="0.8"/><path d="M-9.9 0Q0 -9.7 9.9 0Q0 9.7 -9.9 0Z" transform="translate(15.6 142.9) rotate(-30)" fill="#aab6a8" opacity="0.8"/><path d="M-11.8 0Q0 -10.8 11.8 0Q0 10.8 -11.8 0Z" transform="translate(74.5 93.5) rotate(-60)" fill="#aab6a8" opacity="0.8"/><path d="M-9.9 0Q0 -8.1 9.9 0Q0 8.1 -9.9 0Z" transform="translate(86.8 85.9) rotate(-50)" fill="#aab6a8" opacity="0.8"/><path d="M-12.9 0Q0 -9.7 12.9 0Q0 9.7 -12.9 0Z" transform="translate(78.3 101.1) rotate(-20)" fill="#aab6a8" opacity="0.8"/><path d="M-15.2 0Q0 -10.8 15.2 0Q0 10.8 -15.2 0Z" transform="translate(70.7 121.0) rotate(-15)" fill="#aab6a8" opacity="0.8"/><path d="M-11.8 0Q0 -10.8 11.8 0Q0 10.8 -11.8 0Z" transform="translate(101.1 93.5) rotate(70)" fill="#aab6a8" opacity="0.8"/><path d="M-9.5 0Q0 -8.7 9.5 0Q0 8.7 -9.5 0Z" transform="translate(109.6 101.1) rotate(60)" fill="#aab6a8" opacity="0.8"/><path d="M-13.3 0Q0 -10.8 13.3 0Q0 10.8 -13.3 0Z" transform="translate(123.9 78.3) rotate(20)" fill="#aab6a8" opacity="0.8"/><path d="M-11.8 0Q0 -9.7 11.8 0Q0 9.7 -11.8 0Z" transform="translate(131.5 97.3) rotate(70)" fill="#aab6a8" opacity="0.8"/><path d="M-10.6 0Q0 -8.7 10.6 0Q0 8.7 -10.6 0Z" transform="translate(140.0 108.7) rotate(65)" fill="#aab6a8" opacity="0.8"/><path d="M-11.8 0Q0 -10.3 11.8 0Q0 10.3 -11.8 0Z" transform="translate(98.2 23.2) rotate(60)" fill="#aab6a8" opacity="0.8"/><path d="M-10.6 0Q0 -9.7 10.6 0Q0 9.7 -10.6 0Z" transform="translate(89.7 11.8) rotate(30)" fill="#aab6a8" opacity="0.8"/><path d="M-10.6 0Q0 -9.2 10.6 0Q0 9.2 -10.6 0Z" transform="translate(102.0 33.6) rotate(75)" fill="#aab6a8" opacity="0.8"/><path d="M-10.6 0Q0 -9.7 10.6 0Q0 9.7 -10.6 0Z" transform="translate(74.5 11.8) rotate(-20)" fill="#aab6a8" opacity="0.8"/><path d="M-9.5 0Q0 -7.0 9.5 0Q0 7.0 -9.5 0Z" transform="translate(117.2 44.1) rotate(-40)" fill="#aab6a8" opacity="0.8"/><path d="M-7.6 0Q0 -7.0 7.6 0Q0 7.0 -7.6 0Z" transform="translate(8.0 55.5) rotate(0)" fill="#aab6a8" opacity="0.8"/><path d="M-9.5 0Q0 -7.6 9.5 0Q0 7.6 -9.5 0Z" transform="translate(66.9 110.6) rotate(-60)" fill="#aab6a8" opacity="0.8"/><path d="M-8.4 0Q0 -8.1 8.4 0Q0 8.1 -8.4 0Z" transform="translate(148.6 89.7) rotate(80)" fill="#aab6a8" opacity="0.8"/><path d="M-9.5 0Q0 -8.7 9.5 0Q0 8.7 -9.5 0Z" transform="translate(8.0 125.8) rotate(70)" fill="#aab6a8" opacity="0.8"/><path d="M-7.6 0Q0 -7.0 7.6 0Q0 7.0 -7.6 0Z" transform="translate(110.6 6.1) rotate(80)" fill="#aab6a8" opacity="0.8"/><path d="M-8.4 0Q0 -7.0 8.4 0Q0 7.0 -8.4 0Z" transform="translate(59.3 42.2) rotate(20)" fill="#aab6a8" opacity="0.8"/><path d="M-9.5 0Q0 -7.6 9.5 0Q0 7.6 -9.5 0Z" transform="translate(127.7 85.9) rotate(40)" fill="#aab6a8" opacity="0.8"/><path d="M-8.4 0Q0 -7.6 8.4 0Q0 7.6 -8.4 0Z" transform="translate(49.8 112.5) rotate(20)" fill="#aab6a8" opacity="0.8"/><path d="M-8.4 0Q0 -7.6 8.4 0Q0 7.6 -8.4 0Z" transform="translate(93.5 101.1) rotate(80)" fill="#aab6a8" opacity="0.8"/><path d="M-9.5 0Q0 -8.1 9.5 0Q0 8.1 -9.5 0Z" transform="translate(25.1 57.4) rotate(-10)" fill="#aab6a8" opacity="0.8"/><path d="M-7.6 0Q0 -6.5 7.6 0Q0 6.5 -7.6 0Z" transform="translate(44.1 78.3) rotate(70)" fill="#aab6a8" opacity="0.8"/><path d="M-7.6 0Q0 -6.5 7.6 0Q0 6.5 -7.6 0Z" transform="translate(85.9 28.9) rotate(45)" fill="#aab6a8" opacity="0.8"/><path d="M-7.6 0Q0 -7.0 7.6 0Q0 7.0 -7.6 0Z" transform="translate(139.1 42.2) rotate(-70)" fill="#aab6a8" opacity="0.8"/><path d="M-6.8 0Q0 -6.5 6.8 0Q0 6.5 -6.8 0Z" transform="translate(146.7 123.9) rotate(70)" fill="#aab6a8" opacity="0.8"/><path d="M-8.4 0Q0 -7.6 8.4 0Q0 7.6 -8.4 0Z" transform="translate(6.1 6.1) rotate(-30)" fill="#aab6a8" opacity="0.8"/><path d="M-6.8 0Q0 -6.0 6.8 0Q0 6.0 -6.8 0Z" transform="translate(21.3 11.8) rotate(50)" fill="#aab6a8" opacity="0.8"/><path d="M-8.4 0Q0 -7.0 8.4 0Q0 7.0 -8.4 0Z" transform="translate(53.6 141.0) rotate(10)" fill="#aab6a8" opacity="0.8"/><path d="M-8.4 0Q0 -7.0 8.4 0Q0 7.0 -8.4 0Z" transform="translate(112.5 80.2) rotate(-30)" fill="#aab6a8" opacity="0.8"/><ellipse cx="49.9" cy="24.1" rx="7.3" ry="5.6" transform="rotate(10 49.9 24.1)" fill="#f6d3ae" opacity="0.8"/><ellipse cx="42.9" cy="28.2" rx="7.3" ry="5.6" transform="rotate(102 42.9 28.2)" fill="#f6d3ae" opacity="0.8"/><ellipse cx="39.1" cy="25.9" rx="7.3" ry="5.6" transform="rotate(148 39.1 25.9)" fill="#f6d3ae" opacity="0.8"/><ellipse cx="40.1" cy="19.4" rx="7.3" ry="5.6" transform="rotate(228 40.1 19.4)" fill="#f6d3ae" opacity="0.8"/><ellipse cx="47.7" cy="19.1" rx="7.3" ry="5.6" transform="rotate(308 47.7 19.1)" fill="#f6d3ae" opacity="0.8"/><ellipse cx="43.5" cy="23.7" rx="4.9" ry="3.7" transform="rotate(20 43.5 23.7)" fill="#eeb27c" opacity="0.7"/><ellipse cx="42.9" cy="23.7" rx="1.4" ry="1.2" transform="rotate(0 42.9 23.7)" fill="#ffffff" opacity="0.85"/><ellipse cx="45.3" cy="22.7" rx="0.9" ry="0.8" transform="rotate(0 45.3 22.7)" fill="#ffffff" opacity="0.8"/><ellipse cx="17.5" cy="49.9" rx="7.1" ry="5.6" transform="rotate(1 17.5 49.9)" fill="#f6d3ae" opacity="0.8"/><ellipse cx="13.4" cy="54.7" rx="7.1" ry="5.6" transform="rotate(74 13.4 54.7)" fill="#f6d3ae" opacity="0.8"/><ellipse cx="6.2" cy="50.7" rx="7.1" ry="5.6" transform="rotate(170 6.2 50.7)" fill="#f6d3ae" opacity="0.8"/><ellipse cx="8.3" cy="45.7" rx="7.1" ry="5.6" transform="rotate(233 8.3 45.7)" fill="#f6d3ae" opacity="0.8"/><ellipse cx="13.8" cy="45.0" rx="7.1" ry="5.6" transform="rotate(291 13.8 45.0)" fill="#f6d3ae" opacity="0.8"/><ellipse cx="11.2" cy="50.3" rx="4.8" ry="3.7" transform="rotate(20 11.2 50.3)" fill="#eeb27c" opacity="0.7"/><ellipse cx="10.6" cy="50.3" rx="1.4" ry="1.2" transform="rotate(0 10.6 50.3)" fill="#ffffff" opacity="0.85"/><ellipse cx="12.9" cy="49.3" rx="0.9" ry="0.8" transform="rotate(0 12.9 49.3)" fill="#ffffff" opacity="0.8"/><ellipse cx="99.4" cy="66.1" rx="8.7" ry="6.5" transform="rotate(11 99.4 66.1)" fill="#f6d3ae" opacity="0.8"/><ellipse cx="92.5" cy="70.9" rx="8.7" ry="6.5" transform="rotate(90 92.5 70.9)" fill="#f6d3ae" opacity="0.8"/><ellipse cx="86.8" cy="68.4" rx="8.7" ry="6.5" transform="rotate(145 86.8 68.4)" fill="#f6d3ae" opacity="0.8"/><ellipse cx="89.6" cy="59.6" rx="8.7" ry="6.5" transform="rotate(245 89.6 59.6)" fill="#f6d3ae" opacity="0.8"/><ellipse cx="96.5" cy="60.1" rx="8.7" ry="6.5" transform="rotate(304 96.5 60.1)" fill="#f6d3ae" opacity="0.8"/><ellipse cx="91.8" cy="65.6" rx="5.9" ry="4.2" transform="rotate(20 91.8 65.6)" fill="#eeb27c" opacity="0.7"/><ellipse cx="91.1" cy="65.6" rx="1.7" ry="1.4" transform="rotate(0 91.1 65.6)" fill="#ffffff" opacity="0.85"/><ellipse cx="93.9" cy="64.4" rx="1.1" ry="0.9" transform="rotate(0 93.9 64.4)" fill="#ffffff" opacity="0.8"/><ellipse cx="129.6" cy="14.2" rx="7.1" ry="5.4" transform="rotate(6 129.6 14.2)" fill="#f6d3ae" opacity="0.8"/><ellipse cx="125.6" cy="18.4" rx="7.1" ry="5.4" transform="rotate(73 125.6 18.4)" fill="#f6d3ae" opacity="0.8"/><ellipse cx="119.2" cy="16.4" rx="7.1" ry="5.4" transform="rotate(146 119.2 16.4)" fill="#f6d3ae" opacity="0.8"/><ellipse cx="120.1" cy="10.0" rx="7.1" ry="5.4" transform="rotate(229 120.1 10.0)" fill="#f6d3ae" opacity="0.8"/><ellipse cx="126.8" cy="9.4" rx="7.1" ry="5.4" transform="rotate(301 126.8 9.4)" fill="#f6d3ae" opacity="0.8"/><ellipse cx="123.3" cy="14.2" rx="4.8" ry="3.6" transform="rotate(20 123.3 14.2)" fill="#eeb27c" opacity="0.7"/><ellipse cx="122.7" cy="14.2" rx="1.4" ry="1.2" transform="rotate(0 122.7 14.2)" fill="#ffffff" opacity="0.85"/><ellipse cx="125.0" cy="13.2" rx="0.9" ry="0.8" transform="rotate(0 125.0 13.2)" fill="#ffffff" opacity="0.8"/><ellipse cx="42.4" cy="127.9" rx="7.3" ry="5.6" transform="rotate(2 42.4 127.9)" fill="#f6d3ae" opacity="0.8"/><ellipse cx="37.6" cy="132.7" rx="7.3" ry="5.6" transform="rotate(79 37.6 132.7)" fill="#f6d3ae" opacity="0.8"/><ellipse cx="31.6" cy="130.6" rx="7.3" ry="5.6" transform="rotate(146 31.6 130.6)" fill="#f6d3ae" opacity="0.8"/><ellipse cx="32.9" cy="123.6" rx="7.3" ry="5.6" transform="rotate(233 32.9 123.6)" fill="#f6d3ae" opacity="0.8"/><ellipse cx="39.5" cy="123.3" rx="7.3" ry="5.6" transform="rotate(301 39.5 123.3)" fill="#f6d3ae" opacity="0.8"/><ellipse cx="35.9" cy="128.2" rx="4.9" ry="3.7" transform="rotate(20 35.9 128.2)" fill="#eeb27c" opacity="0.7"/><ellipse cx="35.3" cy="128.2" rx="1.4" ry="1.2" transform="rotate(0 35.3 128.2)" fill="#ffffff" opacity="0.85"/><ellipse cx="37.7" cy="127.2" rx="0.9" ry="0.8" transform="rotate(0 37.7 127.2)" fill="#ffffff" opacity="0.8"/><ellipse cx="138.7" cy="136.3" rx="7.8" ry="5.9" transform="rotate(1 138.7 136.3)" fill="#f6d3ae" opacity="0.8"/><ellipse cx="131.6" cy="141.5" rx="7.8" ry="5.9" transform="rotate(98 131.6 141.5)" fill="#f6d3ae" opacity="0.8"/><ellipse cx="126.5" cy="137.9" rx="7.8" ry="5.9" transform="rotate(162 126.5 137.9)" fill="#f6d3ae" opacity="0.8"/><ellipse cx="127.6" cy="132.9" rx="7.8" ry="5.9" transform="rotate(219 127.6 132.9)" fill="#f6d3ae" opacity="0.8"/><ellipse cx="137.1" cy="132.7" rx="7.8" ry="5.9" transform="rotate(318 137.1 132.7)" fill="#f6d3ae" opacity="0.8"/><ellipse cx="131.8" cy="136.8" rx="5.3" ry="3.8" transform="rotate(20 131.8 136.8)" fill="#eeb27c" opacity="0.7"/><ellipse cx="131.2" cy="136.8" rx="1.5" ry="1.3" transform="rotate(0 131.2 136.8)" fill="#ffffff" opacity="0.85"/><ellipse cx="133.7" cy="135.7" rx="1.0" ry="0.9" transform="rotate(0 133.7 135.7)" fill="#ffffff" opacity="0.8"/><ellipse cx="146.1" cy="71.1" rx="3.5" ry="3.3" transform="rotate(7 146.1 71.1)" fill="#f6d3ae" opacity="0.8"/><ellipse cx="143.2" cy="73.7" rx="3.5" ry="3.3" transform="rotate(92 143.2 73.7)" fill="#f6d3ae" opacity="0.8"/><ellipse cx="140.5" cy="71.5" rx="3.5" ry="3.3" transform="rotate(164 140.5 71.5)" fill="#f6d3ae" opacity="0.8"/><ellipse cx="141.6" cy="68.2" rx="3.5" ry="3.3" transform="rotate(234 141.6 68.2)" fill="#f6d3ae" opacity="0.8"/><ellipse cx="145.4" cy="68.6" rx="3.5" ry="3.3" transform="rotate(318 145.4 68.6)" fill="#f6d3ae" opacity="0.8"/><ellipse cx="143.0" cy="71.0" rx="2.4" ry="2.2" transform="rotate(20 143.0 71.0)" fill="#eeb27c" opacity="0.7"/><ellipse cx="142.7" cy="71.0" rx="0.7" ry="0.7" transform="rotate(0 142.7 71.0)" fill="#ffffff" opacity="0.85"/><ellipse cx="143.8" cy="70.4" rx="0.5" ry="0.5" transform="rotate(0 143.8 70.4)" fill="#ffffff" opacity="0.8"/><ellipse cx="65.9" cy="2.7" rx="3.5" ry="2.3" transform="rotate(1 65.9 2.7)" fill="#f6d3ae" opacity="0.8"/><ellipse cx="63.1" cy="4.8" rx="3.5" ry="2.3" transform="rotate(90 63.1 4.8)" fill="#f6d3ae" opacity="0.8"/><ellipse cx="60.4" cy="3.3" rx="3.5" ry="2.3" transform="rotate(162 60.4 3.3)" fill="#f6d3ae" opacity="0.8"/><ellipse cx="61.2" cy="1.1" rx="3.5" ry="2.3" transform="rotate(228 61.2 1.1)" fill="#f6d3ae" opacity="0.8"/><ellipse cx="64.0" cy="0.7" rx="3.5" ry="2.3" transform="rotate(289 64.0 0.7)" fill="#f6d3ae" opacity="0.8"/><ellipse cx="62.8" cy="2.9" rx="2.4" ry="1.5" transform="rotate(20 62.8 2.9)" fill="#eeb27c" opacity="0.7"/><ellipse cx="62.5" cy="2.9" rx="0.7" ry="0.5" transform="rotate(0 62.5 2.9)" fill="#ffffff" opacity="0.85"/><ellipse cx="63.7" cy="2.5" rx="0.5" ry="0.3" transform="rotate(0 63.7 2.5)" fill="#ffffff" opacity="0.8"/><ellipse cx="65.7" cy="145.0" rx="3.3" ry="1.7" transform="rotate(7 65.7 145.0)" fill="#f6d3ae" opacity="0.8"/><ellipse cx="63.9" cy="146.2" rx="3.3" ry="1.7" transform="rotate(73 63.9 146.2)" fill="#f6d3ae" opacity="0.8"/><ellipse cx="60.6" cy="145.3" rx="3.3" ry="1.7" transform="rotate(161 60.6 145.3)" fill="#f6d3ae" opacity="0.8"/><ellipse cx="61.9" cy="143.4" rx="3.3" ry="1.7" transform="rotate(243 61.9 143.4)" fill="#f6d3ae" opacity="0.8"/><ellipse cx="64.1" cy="143.4" rx="3.3" ry="1.7" transform="rotate(292 64.1 143.4)" fill="#f6d3ae" opacity="0.8"/><ellipse cx="62.8" cy="144.9" rx="2.2" ry="1.1" transform="rotate(20 62.8 144.9)" fill="#eeb27c" opacity="0.7"/><ellipse cx="62.5" cy="144.9" rx="0.6" ry="0.4" transform="rotate(0 62.5 144.9)" fill="#ffffff" opacity="0.85"/><ellipse cx="63.6" cy="144.6" rx="0.4" ry="0.2" transform="rotate(0 63.6 144.6)" fill="#ffffff" opacity="0.8"/><ellipse cx="5.7" cy="71.2" rx="1.9" ry="3.3" transform="rotate(9 5.7 71.2)" fill="#f6d3ae" opacity="0.8"/><ellipse cx="4.3" cy="73.7" rx="1.9" ry="3.3" transform="rotate(85 4.3 73.7)" fill="#f6d3ae" opacity="0.8"/><ellipse cx="2.9" cy="72.3" rx="1.9" ry="3.3" transform="rotate(148 2.9 72.3)" fill="#f6d3ae" opacity="0.8"/><ellipse cx="3.3" cy="68.3" rx="1.9" ry="3.3" transform="rotate(233 3.3 68.3)" fill="#f6d3ae" opacity="0.8"/><ellipse cx="4.7" cy="67.8" rx="1.9" ry="3.3" transform="rotate(291 4.7 67.8)" fill="#f6d3ae" opacity="0.8"/><ellipse cx="4.0" cy="71.0" rx="1.3" ry="2.2" transform="rotate(20 4.0 71.0)" fill="#eeb27c" opacity="0.7"/><ellipse cx="3.9" cy="71.0" rx="0.4" ry="0.7" transform="rotate(0 3.9 71.0)" fill="#ffffff" opacity="0.85"/><ellipse cx="4.5" cy="70.4" rx="0.2" ry="0.5" transform="rotate(0 4.5 70.4)" fill="#ffffff" opacity="0.8"/><path d="M-8.7 0Q0 -8.1 8.7 0Q0 8.1 -8.7 0Z" transform="translate(53.6 46.0) rotate(60)" fill="#2c4a2f" opacity="0.9"/><path d="M-9.5 0Q0 -8.1 9.5 0Q0 8.1 -9.5 0Z" transform="translate(59.3 57.4) rotate(80)" fill="#2c4a2f" opacity="0.9"/><path d="M-8.4 0Q0 -7.0 8.4 0Q0 7.0 -8.4 0Z" transform="translate(63.1 68.8) rotate(85)" fill="#2c4a2f" opacity="0.9"/><path d="M-7.2 0Q0 -6.5 7.2 0Q0 6.5 -7.2 0Z" transform="translate(67.8 47.9) rotate(40)" fill="#2c4a2f" opacity="0.9"/><path d="M-6.5 0Q0 -8.1 6.5 0Q0 8.1 -6.5 0Z" transform="translate(140.0 8.9) rotate(40)" fill="#2c4a2f" opacity="0.9"/><path d="M-8.7 0Q0 -8.7 8.7 0Q0 8.7 -8.7 0Z" transform="translate(141.9 23.2) rotate(80)" fill="#2c4a2f" opacity="0.9"/><path d="M-5.7 0Q0 -6.0 5.7 0Q0 6.0 -5.7 0Z" transform="translate(145.2 15.6) rotate(60)" fill="#2c4a2f" opacity="0.9"/><path d="M-10.3 0Q0 -8.7 10.3 0Q0 8.7 -10.3 0Z" transform="translate(116.3 63.1) rotate(-35)" fill="#2c4a2f" opacity="0.9"/><path d="M-9.1 0Q0 -7.6 9.1 0Q0 7.6 -9.1 0Z" transform="translate(125.8 55.5) rotate(-45)" fill="#2c4a2f" opacity="0.9"/><path d="M-8.0 0Q0 -7.0 8.0 0Q0 7.0 -8.0 0Z" transform="translate(133.4 46.0) rotate(-60)" fill="#2c4a2f" opacity="0.9"/><path d="M-6.8 0Q0 -6.0 6.8 0Q0 6.0 -6.8 0Z" transform="translate(120.1 69.2) rotate(-15)" fill="#2c4a2f" opacity="0.9"/><path d="M-9.1 0Q0 -8.7 9.1 0Q0 8.7 -9.1 0Z" transform="translate(44.1 85.9) rotate(80)" fill="#2c4a2f" opacity="0.9"/><path d="M-8.0 0Q0 -8.7 8.0 0Q0 8.7 -8.0 0Z" transform="translate(38.4 104.9) rotate(60)" fill="#2c4a2f" opacity="0.9"/><path d="M-8.0 0Q0 -7.0 8.0 0Q0 7.0 -8.0 0Z" transform="translate(32.7 80.2) rotate(50)" fill="#2c4a2f" opacity="0.9"/><path d="M-8.4 0Q0 -8.1 8.4 0Q0 8.1 -8.4 0Z" transform="translate(108.7 125.8) rotate(-60)" fill="#2c4a2f" opacity="0.9"/><path d="M-7.6 0Q0 -7.6 7.6 0Q0 7.6 -7.6 0Z" transform="translate(104.9 137.2) rotate(-70)" fill="#2c4a2f" opacity="0.9"/><path d="M-5.7 0Q0 -6.0 5.7 0Q0 6.0 -5.7 0Z" transform="translate(101.1 123.9) rotate(-40)" fill="#2c4a2f" opacity="0.9"/><path d="M-6.8 0Q0 -6.0 6.8 0Q0 6.0 -6.8 0Z" transform="translate(6.1 23.2) rotate(30)" fill="#2c4a2f" opacity="0.9"/><path d="M-5.7 0Q0 -5.4 5.7 0Q0 5.4 -5.7 0Z" transform="translate(111.5 133.4) rotate(-80)" fill="#2c4a2f" opacity="0.9"/><ellipse cx="70.7" cy="28.9" rx="5.2" ry="2.6" transform="rotate(50 70.7 28.9)" fill="#d9a070" opacity="0.92"/><ellipse cx="78.3" cy="35.5" rx="4.8" ry="2.4" transform="rotate(40 78.3 35.5)" fill="#e9b98a" opacity="0.92"/><ellipse cx="82.1" cy="44.5" rx="6.1" ry="2.4" transform="rotate(20 82.1 44.5)" fill="#e9b98a" opacity="0.92"/><ellipse cx="25.1" cy="37.4" rx="5.7" ry="2.6" transform="rotate(60 25.1 37.4)" fill="#d9a070" opacity="0.92"/><ellipse cx="32.7" cy="41.2" rx="4.4" ry="2.1" transform="rotate(70 32.7 41.2)" fill="#e9b98a" opacity="0.92"/><ellipse cx="44.1" cy="46.9" rx="4.8" ry="2.1" transform="rotate(50 44.1 46.9)" fill="#e9b98a" opacity="0.92"/><ellipse cx="105.8" cy="40.3" rx="6.6" ry="2.9" transform="rotate(-55 105.8 40.3)" fill="#d9a070" opacity="0.92"/><ellipse cx="113.4" cy="52.6" rx="5.7" ry="2.6" transform="rotate(-45 113.4 52.6)" fill="#e9b98a" opacity="0.92"/><ellipse cx="118.2" cy="40.3" rx="4.4" ry="1.9" transform="rotate(-20 118.2 40.3)" fill="#e9b98a" opacity="0.92"/><ellipse cx="68.8" cy="75.4" rx="5.7" ry="2.6" transform="rotate(-75 68.8 75.4)" fill="#d9a070" opacity="0.92"/><ellipse cx="53.6" cy="89.7" rx="5.2" ry="2.4" transform="rotate(-75 53.6 89.7)" fill="#e9b98a" opacity="0.92"/><ellipse cx="60.2" cy="98.2" rx="5.2" ry="2.4" transform="rotate(-60 60.2 98.2)" fill="#e9b98a" opacity="0.92"/><ellipse cx="89.7" cy="113.4" rx="6.6" ry="2.9" transform="rotate(-55 89.7 113.4)" fill="#d9a070" opacity="0.92"/><ellipse cx="121.0" cy="101.1" rx="5.7" ry="2.6" transform="rotate(50 121.0 101.1)" fill="#e9b98a" opacity="0.92"/><ellipse cx="112.5" cy="108.7" rx="5.2" ry="2.4" transform="rotate(85 112.5 108.7)" fill="#e9b98a" opacity="0.92"/><ellipse cx="124.3" cy="114.8" rx="5.2" ry="2.6" transform="rotate(50 124.3 114.8)" fill="#d9a070" opacity="0.92"/><ellipse cx="118.2" cy="120.5" rx="4.8" ry="2.4" transform="rotate(80 118.2 120.5)" fill="#e9b98a" opacity="0.92"/><ellipse cx="82.1" cy="129.6" rx="5.7" ry="2.4" transform="rotate(-20 82.1 129.6)" fill="#e9b98a" opacity="0.92"/><ellipse cx="76.4" cy="136.2" rx="5.2" ry="2.1" transform="rotate(0 76.4 136.2)" fill="#d9a070" opacity="0.92"/><ellipse cx="94.4" cy="135.3" rx="4.8" ry="2.1" transform="rotate(-75 94.4 135.3)" fill="#e9b98a" opacity="0.92"/><ellipse cx="36.9" cy="3.2" rx="7.4" ry="2.6" transform="rotate(-25 36.9 3.2)" fill="#e9b98a" opacity="0.92"/><ellipse cx="49.8" cy="4.6" rx="4.4" ry="2.1" transform="rotate(55 49.8 4.6)" fill="#d9a070" opacity="0.92"/><ellipse cx="15.6" cy="18.4" rx="5.2" ry="2.4" transform="rotate(-45 15.6 18.4)" fill="#e9b98a" opacity="0.92"/><ellipse cx="9.5" cy="87.8" rx="5.2" ry="2.4" transform="rotate(50 9.5 87.8)" fill="#e9b98a" opacity="0.92"/><ellipse cx="17.5" cy="26.0" rx="3.5" ry="1.9" transform="rotate(70 17.5 26.0)" fill="#d9a070" opacity="0.92"/><path d="M150 125L215 90" transform="translate(-12.92 -5.32) scale(0.1900)" stroke="#6d6a5c" stroke-width="4" fill="none" opacity=".6"/><path d="M200 225Q230 200 215 165" transform="translate(-12.92 -5.32) scale(0.1900)" stroke="#6d6a5c" stroke-width="4" fill="none" opacity=".6"/><path d="M440 180Q500 240 540 290" transform="translate(-12.92 -5.32) scale(0.1900)" stroke="#6d6a5c" stroke-width="4" fill="none" opacity=".6"/><path d="M625 240Q650 200 660 150" transform="translate(-12.92 -5.32) scale(0.1900)" stroke="#6d6a5c" stroke-width="4" fill="none" opacity=".6"/><path d="M665 305L740 225" transform="translate(-12.92 -5.32) scale(0.1900)" stroke="#6d6a5c" stroke-width="4" fill="none" opacity=".6"/><path d="M430 425Q400 500 350 600" transform="translate(-12.92 -5.32) scale(0.1900)" stroke="#6d6a5c" stroke-width="4" fill="none" opacity=".6"/><path d="M705 560Q680 600 660 520" transform="translate(-12.92 -5.32) scale(0.1900)" stroke="#6d6a5c" stroke-width="4" fill="none" opacity=".6"/><path d="M500 710L380 710" transform="translate(-12.92 -5.32) scale(0.1900)" stroke="#6d6a5c" stroke-width="4" fill="none" opacity=".6"/><path d="M540 625L565 740" transform="translate(-12.92 -5.32) scale(0.1900)" stroke="#6d6a5c" stroke-width="4" fill="none" opacity=".6"/></g></svg>
<div class="a" style="left:106.5px;top:749px;width:9.5px;height:11px;background:#e0289a;border-radius:1px"></div>
<div class="a" style="left:109px;top:751px;width:4.5px;height:4.5px;border:1px solid #fff;border-radius:50%"></div>
<div class="a" style="left:108.5px;top:757px;width:5.5px;height:1px;background:#f8c0e0"></div>
<svg style="left:164px;top:748px;overflow:hidden" width="40" height="40" viewBox="0 0 147 145" preserveAspectRatio="none"><rect width="147" height="145" fill="#fbfbfa"/><g filter="url(#fb)"><path d="M-11.4 0Q0 -9.7 11.4 0Q0 9.7 -11.4 0Z" transform="translate(30.8 17.5) rotate(40)" fill="#aab6a8" opacity="0.8"/><path d="M-9.5 0Q0 -8.7 9.5 0Q0 8.7 -9.5 0Z" transform="translate(8.0 30.8) rotate(20)" fill="#aab6a8" opacity="0.8"/><path d="M-11.8 0Q0 -10.8 11.8 0Q0 10.8 -11.8 0Z" transform="translate(34.6 59.3) rotate(-30)" fill="#aab6a8" opacity="0.8"/><path d="M-10.6 0Q0 -9.7 10.6 0Q0 9.7 -10.6 0Z" transform="translate(45.0 67.8) rotate(30)" fill="#aab6a8" opacity="0.8"/><path d="M-11.8 0Q0 -11.9 11.8 0Q0 11.9 -11.8 0Z" transform="translate(17.5 74.5) rotate(60)" fill="#aab6a8" opacity="0.8"/><path d="M-9.9 0Q0 -9.2 9.9 0Q0 9.2 -9.9 0Z" transform="translate(25.1 87.8) rotate(50)" fill="#aab6a8" opacity="0.8"/><path d="M-9.5 0Q0 -8.7 9.5 0Q0 8.7 -9.5 0Z" transform="translate(9.9 101.1) rotate(30)" fill="#aab6a8" opacity="0.8"/><path d="M-10.6 0Q0 -9.7 10.6 0Q0 9.7 -10.6 0Z" transform="translate(19.4 112.5) rotate(-60)" fill="#aab6a8" opacity="0.8"/><path d="M-9.9 0Q0 -9.7 9.9 0Q0 9.7 -9.9 0Z" transform="translate(15.6 142.9) rotate(-30)" fill="#aab6a8" opacity="0.8"/><path d="M-11.8 0Q0 -10.8 11.8 0Q0 10.8 -11.8 0Z" transform="translate(74.5 93.5) rotate(-60)" fill="#aab6a8" opacity="0.8"/><path d="M-9.9 0Q0 -8.1 9.9 0Q0 8.1 -9.9 0Z" transform="translate(86.8 85.9) rotate(-50)" fill="#aab6a8" opacity="0.8"/><path d="M-12.9 0Q0 -9.7 12.9 0Q0 9.7 -12.9 0Z" transform="translate(78.3 101.1) rotate(-20)" fill="#aab6a8" opacity="0.8"/><path d="M-15.2 0Q0 -10.8 15.2 0Q0 10.8 -15.2 0Z" transform="translate(70.7 121.0) rotate(-15)" fill="#aab6a8" opacity="0.8"/><path d="M-11.8 0Q0 -10.8 11.8 0Q0 10.8 -11.8 0Z" transform="translate(101.1 93.5) rotate(70)" fill="#aab6a8" opacity="0.8"/><path d="M-9.5 0Q0 -8.7 9.5 0Q0 8.7 -9.5 0Z" transform="translate(109.6 101.1) rotate(60)" fill="#aab6a8" opacity="0.8"/><path d="M-13.3 0Q0 -10.8 13.3 0Q0 10.8 -13.3 0Z" transform="translate(123.9 78.3) rotate(20)" fill="#aab6a8" opacity="0.8"/><path d="M-11.8 0Q0 -9.7 11.8 0Q0 9.7 -11.8 0Z" transform="translate(131.5 97.3) rotate(70)" fill="#aab6a8" opacity="0.8"/><path d="M-10.6 0Q0 -8.7 10.6 0Q0 8.7 -10.6 0Z" transform="translate(140.0 108.7) rotate(65)" fill="#aab6a8" opacity="0.8"/><path d="M-11.8 0Q0 -10.3 11.8 0Q0 10.3 -11.8 0Z" transform="translate(98.2 23.2) rotate(60)" fill="#aab6a8" opacity="0.8"/><path d="M-10.6 0Q0 -9.7 10.6 0Q0 9.7 -10.6 0Z" transform="translate(89.7 11.8) rotate(30)" fill="#aab6a8" opacity="0.8"/><path d="M-10.6 0Q0 -9.2 10.6 0Q0 9.2 -10.6 0Z" transform="translate(102.0 33.6) rotate(75)" fill="#aab6a8" opacity="0.8"/><path d="M-10.6 0Q0 -9.7 10.6 0Q0 9.7 -10.6 0Z" transform="translate(74.5 11.8) rotate(-20)" fill="#aab6a8" opacity="0.8"/><path d="M-9.5 0Q0 -7.0 9.5 0Q0 7.0 -9.5 0Z" transform="translate(117.2 44.1) rotate(-40)" fill="#aab6a8" opacity="0.8"/><path d="M-7.6 0Q0 -7.0 7.6 0Q0 7.0 -7.6 0Z" transform="translate(8.0 55.5) rotate(0)" fill="#aab6a8" opacity="0.8"/><path d="M-9.5 0Q0 -7.6 9.5 0Q0 7.6 -9.5 0Z" transform="translate(66.9 110.6) rotate(-60)" fill="#aab6a8" opacity="0.8"/><path d="M-8.4 0Q0 -8.1 8.4 0Q0 8.1 -8.4 0Z" transform="translate(148.6 89.7) rotate(80)" fill="#aab6a8" opacity="0.8"/><path d="M-9.5 0Q0 -8.7 9.5 0Q0 8.7 -9.5 0Z" transform="translate(8.0 125.8) rotate(70)" fill="#aab6a8" opacity="0.8"/><path d="M-7.6 0Q0 -7.0 7.6 0Q0 7.0 -7.6 0Z" transform="translate(110.6 6.1) rotate(80)" fill="#aab6a8" opacity="0.8"/><path d="M-8.4 0Q0 -7.0 8.4 0Q0 7.0 -8.4 0Z" transform="translate(59.3 42.2) rotate(20)" fill="#aab6a8" opacity="0.8"/><path d="M-9.5 0Q0 -7.6 9.5 0Q0 7.6 -9.5 0Z" transform="translate(127.7 85.9) rotate(40)" fill="#aab6a8" opacity="0.8"/><path d="M-8.4 0Q0 -7.6 8.4 0Q0 7.6 -8.4 0Z" transform="translate(49.8 112.5) rotate(20)" fill="#aab6a8" opacity="0.8"/><path d="M-8.4 0Q0 -7.6 8.4 0Q0 7.6 -8.4 0Z" transform="translate(93.5 101.1) rotate(80)" fill="#aab6a8" opacity="0.8"/><path d="M-9.5 0Q0 -8.1 9.5 0Q0 8.1 -9.5 0Z" transform="translate(25.1 57.4) rotate(-10)" fill="#aab6a8" opacity="0.8"/><path d="M-7.6 0Q0 -6.5 7.6 0Q0 6.5 -7.6 0Z" transform="translate(44.1 78.3) rotate(70)" fill="#aab6a8" opacity="0.8"/><path d="M-7.6 0Q0 -6.5 7.6 0Q0 6.5 -7.6 0Z" transform="translate(85.9 28.9) rotate(45)" fill="#aab6a8" opacity="0.8"/><path d="M-7.6 0Q0 -7.0 7.6 0Q0 7.0 -7.6 0Z" transform="translate(139.1 42.2) rotate(-70)" fill="#aab6a8" opacity="0.8"/><path d="M-6.8 0Q0 -6.5 6.8 0Q0 6.5 -6.8 0Z" transform="translate(146.7 123.9) rotate(70)" fill="#aab6a8" opacity="0.8"/><path d="M-8.4 0Q0 -7.6 8.4 0Q0 7.6 -8.4 0Z" transform="translate(6.1 6.1) rotate(-30)" fill="#aab6a8" opacity="0.8"/><path d="M-6.8 0Q0 -6.0 6.8 0Q0 6.0 -6.8 0Z" transform="translate(21.3 11.8) rotate(50)" fill="#aab6a8" opacity="0.8"/><path d="M-8.4 0Q0 -7.0 8.4 0Q0 7.0 -8.4 0Z" transform="translate(53.6 141.0) rotate(10)" fill="#aab6a8" opacity="0.8"/><path d="M-8.4 0Q0 -7.0 8.4 0Q0 7.0 -8.4 0Z" transform="translate(112.5 80.2) rotate(-30)" fill="#aab6a8" opacity="0.8"/><ellipse cx="49.9" cy="24.1" rx="7.3" ry="5.6" transform="rotate(10 49.9 24.1)" fill="#bcc6f0" opacity="0.8"/><ellipse cx="42.9" cy="28.2" rx="7.3" ry="5.6" transform="rotate(102 42.9 28.2)" fill="#bcc6f0" opacity="0.8"/><ellipse cx="39.1" cy="25.9" rx="7.3" ry="5.6" transform="rotate(148 39.1 25.9)" fill="#bcc6f0" opacity="0.8"/><ellipse cx="40.1" cy="19.4" rx="7.3" ry="5.6" transform="rotate(228 40.1 19.4)" fill="#bcc6f0" opacity="0.8"/><ellipse cx="47.7" cy="19.1" rx="7.3" ry="5.6" transform="rotate(308 47.7 19.1)" fill="#bcc6f0" opacity="0.8"/><ellipse cx="43.5" cy="23.7" rx="4.9" ry="3.7" transform="rotate(20 43.5 23.7)" fill="#8f9fe0" opacity="0.7"/><ellipse cx="42.9" cy="23.7" rx="1.4" ry="1.2" transform="rotate(0 42.9 23.7)" fill="#ffffff" opacity="0.85"/><ellipse cx="45.3" cy="22.7" rx="0.9" ry="0.8" transform="rotate(0 45.3 22.7)" fill="#ffffff" opacity="0.8"/><ellipse cx="17.5" cy="49.9" rx="7.1" ry="5.6" transform="rotate(1 17.5 49.9)" fill="#bcc6f0" opacity="0.8"/><ellipse cx="13.4" cy="54.7" rx="7.1" ry="5.6" transform="rotate(74 13.4 54.7)" fill="#bcc6f0" opacity="0.8"/><ellipse cx="6.2" cy="50.7" rx="7.1" ry="5.6" transform="rotate(170 6.2 50.7)" fill="#bcc6f0" opacity="0.8"/><ellipse cx="8.3" cy="45.7" rx="7.1" ry="5.6" transform="rotate(233 8.3 45.7)" fill="#bcc6f0" opacity="0.8"/><ellipse cx="13.8" cy="45.0" rx="7.1" ry="5.6" transform="rotate(291 13.8 45.0)" fill="#bcc6f0" opacity="0.8"/><ellipse cx="11.2" cy="50.3" rx="4.8" ry="3.7" transform="rotate(20 11.2 50.3)" fill="#8f9fe0" opacity="0.7"/><ellipse cx="10.6" cy="50.3" rx="1.4" ry="1.2" transform="rotate(0 10.6 50.3)" fill="#ffffff" opacity="0.85"/><ellipse cx="12.9" cy="49.3" rx="0.9" ry="0.8" transform="rotate(0 12.9 49.3)" fill="#ffffff" opacity="0.8"/><ellipse cx="99.4" cy="66.1" rx="8.7" ry="6.5" transform="rotate(11 99.4 66.1)" fill="#bcc6f0" opacity="0.8"/><ellipse cx="92.5" cy="70.9" rx="8.7" ry="6.5" transform="rotate(90 92.5 70.9)" fill="#bcc6f0" opacity="0.8"/><ellipse cx="86.8" cy="68.4" rx="8.7" ry="6.5" transform="rotate(145 86.8 68.4)" fill="#bcc6f0" opacity="0.8"/><ellipse cx="89.6" cy="59.6" rx="8.7" ry="6.5" transform="rotate(245 89.6 59.6)" fill="#bcc6f0" opacity="0.8"/><ellipse cx="96.5" cy="60.1" rx="8.7" ry="6.5" transform="rotate(304 96.5 60.1)" fill="#bcc6f0" opacity="0.8"/><ellipse cx="91.8" cy="65.6" rx="5.9" ry="4.2" transform="rotate(20 91.8 65.6)" fill="#8f9fe0" opacity="0.7"/><ellipse cx="91.1" cy="65.6" rx="1.7" ry="1.4" transform="rotate(0 91.1 65.6)" fill="#ffffff" opacity="0.85"/><ellipse cx="93.9" cy="64.4" rx="1.1" ry="0.9" transform="rotate(0 93.9 64.4)" fill="#ffffff" opacity="0.8"/><ellipse cx="129.6" cy="14.2" rx="7.1" ry="5.4" transform="rotate(6 129.6 14.2)" fill="#bcc6f0" opacity="0.8"/><ellipse cx="125.6" cy="18.4" rx="7.1" ry="5.4" transform="rotate(73 125.6 18.4)" fill="#bcc6f0" opacity="0.8"/><ellipse cx="119.2" cy="16.4" rx="7.1" ry="5.4" transform="rotate(146 119.2 16.4)" fill="#bcc6f0" opacity="0.8"/><ellipse cx="120.1" cy="10.0" rx="7.1" ry="5.4" transform="rotate(229 120.1 10.0)" fill="#bcc6f0" opacity="0.8"/><ellipse cx="126.8" cy="9.4" rx="7.1" ry="5.4" transform="rotate(301 126.8 9.4)" fill="#bcc6f0" opacity="0.8"/><ellipse cx="123.3" cy="14.2" rx="4.8" ry="3.6" transform="rotate(20 123.3 14.2)" fill="#8f9fe0" opacity="0.7"/><ellipse cx="122.7" cy="14.2" rx="1.4" ry="1.2" transform="rotate(0 122.7 14.2)" fill="#ffffff" opacity="0.85"/><ellipse cx="125.0" cy="13.2" rx="0.9" ry="0.8" transform="rotate(0 125.0 13.2)" fill="#ffffff" opacity="0.8"/><ellipse cx="42.4" cy="127.9" rx="7.3" ry="5.6" transform="rotate(2 42.4 127.9)" fill="#bcc6f0" opacity="0.8"/><ellipse cx="37.6" cy="132.7" rx="7.3" ry="5.6" transform="rotate(79 37.6 132.7)" fill="#bcc6f0" opacity="0.8"/><ellipse cx="31.6" cy="130.6" rx="7.3" ry="5.6" transform="rotate(146 31.6 130.6)" fill="#bcc6f0" opacity="0.8"/><ellipse cx="32.9" cy="123.6" rx="7.3" ry="5.6" transform="rotate(233 32.9 123.6)" fill="#bcc6f0" opacity="0.8"/><ellipse cx="39.5" cy="123.3" rx="7.3" ry="5.6" transform="rotate(301 39.5 123.3)" fill="#bcc6f0" opacity="0.8"/><ellipse cx="35.9" cy="128.2" rx="4.9" ry="3.7" transform="rotate(20 35.9 128.2)" fill="#8f9fe0" opacity="0.7"/><ellipse cx="35.3" cy="128.2" rx="1.4" ry="1.2" transform="rotate(0 35.3 128.2)" fill="#ffffff" opacity="0.85"/><ellipse cx="37.7" cy="127.2" rx="0.9" ry="0.8" transform="rotate(0 37.7 127.2)" fill="#ffffff" opacity="0.8"/><ellipse cx="138.7" cy="136.3" rx="7.8" ry="5.9" transform="rotate(1 138.7 136.3)" fill="#bcc6f0" opacity="0.8"/><ellipse cx="131.6" cy="141.5" rx="7.8" ry="5.9" transform="rotate(98 131.6 141.5)" fill="#bcc6f0" opacity="0.8"/><ellipse cx="126.5" cy="137.9" rx="7.8" ry="5.9" transform="rotate(162 126.5 137.9)" fill="#bcc6f0" opacity="0.8"/><ellipse cx="127.6" cy="132.9" rx="7.8" ry="5.9" transform="rotate(219 127.6 132.9)" fill="#bcc6f0" opacity="0.8"/><ellipse cx="137.1" cy="132.7" rx="7.8" ry="5.9" transform="rotate(318 137.1 132.7)" fill="#bcc6f0" opacity="0.8"/><ellipse cx="131.8" cy="136.8" rx="5.3" ry="3.8" transform="rotate(20 131.8 136.8)" fill="#8f9fe0" opacity="0.7"/><ellipse cx="131.2" cy="136.8" rx="1.5" ry="1.3" transform="rotate(0 131.2 136.8)" fill="#ffffff" opacity="0.85"/><ellipse cx="133.7" cy="135.7" rx="1.0" ry="0.9" transform="rotate(0 133.7 135.7)" fill="#ffffff" opacity="0.8"/><ellipse cx="146.1" cy="71.1" rx="3.5" ry="3.3" transform="rotate(7 146.1 71.1)" fill="#bcc6f0" opacity="0.8"/><ellipse cx="143.2" cy="73.7" rx="3.5" ry="3.3" transform="rotate(92 143.2 73.7)" fill="#bcc6f0" opacity="0.8"/><ellipse cx="140.5" cy="71.5" rx="3.5" ry="3.3" transform="rotate(164 140.5 71.5)" fill="#bcc6f0" opacity="0.8"/><ellipse cx="141.6" cy="68.2" rx="3.5" ry="3.3" transform="rotate(234 141.6 68.2)" fill="#bcc6f0" opacity="0.8"/><ellipse cx="145.4" cy="68.6" rx="3.5" ry="3.3" transform="rotate(318 145.4 68.6)" fill="#bcc6f0" opacity="0.8"/><ellipse cx="143.0" cy="71.0" rx="2.4" ry="2.2" transform="rotate(20 143.0 71.0)" fill="#8f9fe0" opacity="0.7"/><ellipse cx="142.7" cy="71.0" rx="0.7" ry="0.7" transform="rotate(0 142.7 71.0)" fill="#ffffff" opacity="0.85"/><ellipse cx="143.8" cy="70.4" rx="0.5" ry="0.5" transform="rotate(0 143.8 70.4)" fill="#ffffff" opacity="0.8"/><ellipse cx="65.9" cy="2.7" rx="3.5" ry="2.3" transform="rotate(1 65.9 2.7)" fill="#bcc6f0" opacity="0.8"/><ellipse cx="63.1" cy="4.8" rx="3.5" ry="2.3" transform="rotate(90 63.1 4.8)" fill="#bcc6f0" opacity="0.8"/><ellipse cx="60.4" cy="3.3" rx="3.5" ry="2.3" transform="rotate(162 60.4 3.3)" fill="#bcc6f0" opacity="0.8"/><ellipse cx="61.2" cy="1.1" rx="3.5" ry="2.3" transform="rotate(228 61.2 1.1)" fill="#bcc6f0" opacity="0.8"/><ellipse cx="64.0" cy="0.7" rx="3.5" ry="2.3" transform="rotate(289 64.0 0.7)" fill="#bcc6f0" opacity="0.8"/><ellipse cx="62.8" cy="2.9" rx="2.4" ry="1.5" transform="rotate(20 62.8 2.9)" fill="#8f9fe0" opacity="0.7"/><ellipse cx="62.5" cy="2.9" rx="0.7" ry="0.5" transform="rotate(0 62.5 2.9)" fill="#ffffff" opacity="0.85"/><ellipse cx="63.7" cy="2.5" rx="0.5" ry="0.3" transform="rotate(0 63.7 2.5)" fill="#ffffff" opacity="0.8"/><ellipse cx="65.7" cy="145.0" rx="3.3" ry="1.7" transform="rotate(7 65.7 145.0)" fill="#bcc6f0" opacity="0.8"/><ellipse cx="63.9" cy="146.2" rx="3.3" ry="1.7" transform="rotate(73 63.9 146.2)" fill="#bcc6f0" opacity="0.8"/><ellipse cx="60.6" cy="145.3" rx="3.3" ry="1.7" transform="rotate(161 60.6 145.3)" fill="#bcc6f0" opacity="0.8"/><ellipse cx="61.9" cy="143.4" rx="3.3" ry="1.7" transform="rotate(243 61.9 143.4)" fill="#bcc6f0" opacity="0.8"/><ellipse cx="64.1" cy="143.4" rx="3.3" ry="1.7" transform="rotate(292 64.1 143.4)" fill="#bcc6f0" opacity="0.8"/><ellipse cx="62.8" cy="144.9" rx="2.2" ry="1.1" transform="rotate(20 62.8 144.9)" fill="#8f9fe0" opacity="0.7"/><ellipse cx="62.5" cy="144.9" rx="0.6" ry="0.4" transform="rotate(0 62.5 144.9)" fill="#ffffff" opacity="0.85"/><ellipse cx="63.6" cy="144.6" rx="0.4" ry="0.2" transform="rotate(0 63.6 144.6)" fill="#ffffff" opacity="0.8"/><ellipse cx="5.7" cy="71.2" rx="1.9" ry="3.3" transform="rotate(9 5.7 71.2)" fill="#bcc6f0" opacity="0.8"/><ellipse cx="4.3" cy="73.7" rx="1.9" ry="3.3" transform="rotate(85 4.3 73.7)" fill="#bcc6f0" opacity="0.8"/><ellipse cx="2.9" cy="72.3" rx="1.9" ry="3.3" transform="rotate(148 2.9 72.3)" fill="#bcc6f0" opacity="0.8"/><ellipse cx="3.3" cy="68.3" rx="1.9" ry="3.3" transform="rotate(233 3.3 68.3)" fill="#bcc6f0" opacity="0.8"/><ellipse cx="4.7" cy="67.8" rx="1.9" ry="3.3" transform="rotate(291 4.7 67.8)" fill="#bcc6f0" opacity="0.8"/><ellipse cx="4.0" cy="71.0" rx="1.3" ry="2.2" transform="rotate(20 4.0 71.0)" fill="#8f9fe0" opacity="0.7"/><ellipse cx="3.9" cy="71.0" rx="0.4" ry="0.7" transform="rotate(0 3.9 71.0)" fill="#ffffff" opacity="0.85"/><ellipse cx="4.5" cy="70.4" rx="0.2" ry="0.5" transform="rotate(0 4.5 70.4)" fill="#ffffff" opacity="0.8"/><path d="M-8.7 0Q0 -8.1 8.7 0Q0 8.1 -8.7 0Z" transform="translate(53.6 46.0) rotate(60)" fill="#2c4a2f" opacity="0.9"/><path d="M-9.5 0Q0 -8.1 9.5 0Q0 8.1 -9.5 0Z" transform="translate(59.3 57.4) rotate(80)" fill="#2c4a2f" opacity="0.9"/><path d="M-8.4 0Q0 -7.0 8.4 0Q0 7.0 -8.4 0Z" transform="translate(63.1 68.8) rotate(85)" fill="#2c4a2f" opacity="0.9"/><path d="M-7.2 0Q0 -6.5 7.2 0Q0 6.5 -7.2 0Z" transform="translate(67.8 47.9) rotate(40)" fill="#2c4a2f" opacity="0.9"/><path d="M-6.5 0Q0 -8.1 6.5 0Q0 8.1 -6.5 0Z" transform="translate(140.0 8.9) rotate(40)" fill="#2c4a2f" opacity="0.9"/><path d="M-8.7 0Q0 -8.7 8.7 0Q0 8.7 -8.7 0Z" transform="translate(141.9 23.2) rotate(80)" fill="#2c4a2f" opacity="0.9"/><path d="M-5.7 0Q0 -6.0 5.7 0Q0 6.0 -5.7 0Z" transform="translate(145.2 15.6) rotate(60)" fill="#2c4a2f" opacity="0.9"/><path d="M-10.3 0Q0 -8.7 10.3 0Q0 8.7 -10.3 0Z" transform="translate(116.3 63.1) rotate(-35)" fill="#2c4a2f" opacity="0.9"/><path d="M-9.1 0Q0 -7.6 9.1 0Q0 7.6 -9.1 0Z" transform="translate(125.8 55.5) rotate(-45)" fill="#2c4a2f" opacity="0.9"/><path d="M-8.0 0Q0 -7.0 8.0 0Q0 7.0 -8.0 0Z" transform="translate(133.4 46.0) rotate(-60)" fill="#2c4a2f" opacity="0.9"/><path d="M-6.8 0Q0 -6.0 6.8 0Q0 6.0 -6.8 0Z" transform="translate(120.1 69.2) rotate(-15)" fill="#2c4a2f" opacity="0.9"/><path d="M-9.1 0Q0 -8.7 9.1 0Q0 8.7 -9.1 0Z" transform="translate(44.1 85.9) rotate(80)" fill="#2c4a2f" opacity="0.9"/><path d="M-8.0 0Q0 -8.7 8.0 0Q0 8.7 -8.0 0Z" transform="translate(38.4 104.9) rotate(60)" fill="#2c4a2f" opacity="0.9"/><path d="M-8.0 0Q0 -7.0 8.0 0Q0 7.0 -8.0 0Z" transform="translate(32.7 80.2) rotate(50)" fill="#2c4a2f" opacity="0.9"/><path d="M-8.4 0Q0 -8.1 8.4 0Q0 8.1 -8.4 0Z" transform="translate(108.7 125.8) rotate(-60)" fill="#2c4a2f" opacity="0.9"/><path d="M-7.6 0Q0 -7.6 7.6 0Q0 7.6 -7.6 0Z" transform="translate(104.9 137.2) rotate(-70)" fill="#2c4a2f" opacity="0.9"/><path d="M-5.7 0Q0 -6.0 5.7 0Q0 6.0 -5.7 0Z" transform="translate(101.1 123.9) rotate(-40)" fill="#2c4a2f" opacity="0.9"/><path d="M-6.8 0Q0 -6.0 6.8 0Q0 6.0 -6.8 0Z" transform="translate(6.1 23.2) rotate(30)" fill="#2c4a2f" opacity="0.9"/><path d="M-5.7 0Q0 -5.4 5.7 0Q0 5.4 -5.7 0Z" transform="translate(111.5 133.4) rotate(-80)" fill="#2c4a2f" opacity="0.9"/><ellipse cx="70.7" cy="28.9" rx="5.2" ry="2.6" transform="rotate(50 70.7 28.9)" fill="#6a78b8" opacity="0.92"/><ellipse cx="78.3" cy="35.5" rx="4.8" ry="2.4" transform="rotate(40 78.3 35.5)" fill="#8090d0" opacity="0.92"/><ellipse cx="82.1" cy="44.5" rx="6.1" ry="2.4" transform="rotate(20 82.1 44.5)" fill="#8090d0" opacity="0.92"/><ellipse cx="25.1" cy="37.4" rx="5.7" ry="2.6" transform="rotate(60 25.1 37.4)" fill="#6a78b8" opacity="0.92"/><ellipse cx="32.7" cy="41.2" rx="4.4" ry="2.1" transform="rotate(70 32.7 41.2)" fill="#8090d0" opacity="0.92"/><ellipse cx="44.1" cy="46.9" rx="4.8" ry="2.1" transform="rotate(50 44.1 46.9)" fill="#8090d0" opacity="0.92"/><ellipse cx="105.8" cy="40.3" rx="6.6" ry="2.9" transform="rotate(-55 105.8 40.3)" fill="#6a78b8" opacity="0.92"/><ellipse cx="113.4" cy="52.6" rx="5.7" ry="2.6" transform="rotate(-45 113.4 52.6)" fill="#8090d0" opacity="0.92"/><ellipse cx="118.2" cy="40.3" rx="4.4" ry="1.9" transform="rotate(-20 118.2 40.3)" fill="#8090d0" opacity="0.92"/><ellipse cx="68.8" cy="75.4" rx="5.7" ry="2.6" transform="rotate(-75 68.8 75.4)" fill="#6a78b8" opacity="0.92"/><ellipse cx="53.6" cy="89.7" rx="5.2" ry="2.4" transform="rotate(-75 53.6 89.7)" fill="#8090d0" opacity="0.92"/><ellipse cx="60.2" cy="98.2" rx="5.2" ry="2.4" transform="rotate(-60 60.2 98.2)" fill="#8090d0" opacity="0.92"/><ellipse cx="89.7" cy="113.4" rx="6.6" ry="2.9" transform="rotate(-55 89.7 113.4)" fill="#6a78b8" opacity="0.92"/><ellipse cx="121.0" cy="101.1" rx="5.7" ry="2.6" transform="rotate(50 121.0 101.1)" fill="#8090d0" opacity="0.92"/><ellipse cx="112.5" cy="108.7" rx="5.2" ry="2.4" transform="rotate(85 112.5 108.7)" fill="#8090d0" opacity="0.92"/><ellipse cx="124.3" cy="114.8" rx="5.2" ry="2.6" transform="rotate(50 124.3 114.8)" fill="#6a78b8" opacity="0.92"/><ellipse cx="118.2" cy="120.5" rx="4.8" ry="2.4" transform="rotate(80 118.2 120.5)" fill="#8090d0" opacity="0.92"/><ellipse cx="82.1" cy="129.6" rx="5.7" ry="2.4" transform="rotate(-20 82.1 129.6)" fill="#8090d0" opacity="0.92"/><ellipse cx="76.4" cy="136.2" rx="5.2" ry="2.1" transform="rotate(0 76.4 136.2)" fill="#6a78b8" opacity="0.92"/><ellipse cx="94.4" cy="135.3" rx="4.8" ry="2.1" transform="rotate(-75 94.4 135.3)" fill="#8090d0" opacity="0.92"/><ellipse cx="36.9" cy="3.2" rx="7.4" ry="2.6" transform="rotate(-25 36.9 3.2)" fill="#8090d0" opacity="0.92"/><ellipse cx="49.8" cy="4.6" rx="4.4" ry="2.1" transform="rotate(55 49.8 4.6)" fill="#6a78b8" opacity="0.92"/><ellipse cx="15.6" cy="18.4" rx="5.2" ry="2.4" transform="rotate(-45 15.6 18.4)" fill="#8090d0" opacity="0.92"/><ellipse cx="9.5" cy="87.8" rx="5.2" ry="2.4" transform="rotate(50 9.5 87.8)" fill="#8090d0" opacity="0.92"/><ellipse cx="17.5" cy="26.0" rx="3.5" ry="1.9" transform="rotate(70 17.5 26.0)" fill="#6a78b8" opacity="0.92"/><path d="M150 125L215 90" transform="translate(-12.92 -5.32) scale(0.1900)" stroke="#6d6a5c" stroke-width="4" fill="none" opacity=".6"/><path d="M200 225Q230 200 215 165" transform="translate(-12.92 -5.32) scale(0.1900)" stroke="#6d6a5c" stroke-width="4" fill="none" opacity=".6"/><path d="M440 180Q500 240 540 290" transform="translate(-12.92 -5.32) scale(0.1900)" stroke="#6d6a5c" stroke-width="4" fill="none" opacity=".6"/><path d="M625 240Q650 200 660 150" transform="translate(-12.92 -5.32) scale(0.1900)" stroke="#6d6a5c" stroke-width="4" fill="none" opacity=".6"/><path d="M665 305L740 225" transform="translate(-12.92 -5.32) scale(0.1900)" stroke="#6d6a5c" stroke-width="4" fill="none" opacity=".6"/><path d="M430 425Q400 500 350 600" transform="translate(-12.92 -5.32) scale(0.1900)" stroke="#6d6a5c" stroke-width="4" fill="none" opacity=".6"/><path d="M705 560Q680 600 660 520" transform="translate(-12.92 -5.32) scale(0.1900)" stroke="#6d6a5c" stroke-width="4" fill="none" opacity=".6"/><path d="M500 710L380 710" transform="translate(-12.92 -5.32) scale(0.1900)" stroke="#6d6a5c" stroke-width="4" fill="none" opacity=".6"/><path d="M540 625L565 740" transform="translate(-12.92 -5.32) scale(0.1900)" stroke="#6d6a5c" stroke-width="4" fill="none" opacity=".6"/></g></svg>
<div class="a" style="left:166.5px;top:749px;width:9.5px;height:11px;background:#e0289a;border-radius:1px"></div>
<div class="a" style="left:169px;top:751px;width:4.5px;height:4.5px;border:1px solid #fff;border-radius:50%"></div>
<div class="a" style="left:168.5px;top:757px;width:5.5px;height:1px;background:#f8c0e0"></div>
<div class="t" style="left:36px;top:791.0px;font-size:9px;line-height:12px;height:12px;color:#e6e6e6;transform:scaleX(0.923);">* AdobeStock_</div>
<div class="t" style="left:96px;top:791.0px;font-size:9px;line-height:12px;height:12px;color:#e6e6e6;transform:scaleX(0.848);">AdobeStock_5...</div>
<div class="t" style="left:156px;top:791.0px;font-size:9px;line-height:12px;height:12px;color:#e6e6e6;transform:scaleX(0.848);">AdobeStock_5...</div>
<div class="a" style="left:980px;top:74px;width:2px;height:740px;background:#d6d6d6"></div><div class="a" style="left:977px;top:74px;width:3px;height:740px;background:#f4f6f9"></div>
<div class="a" style="left:1162px;top:74px;width:2px;height:740px;background:#d6d6d6"></div><div class="a" style="left:1164px;top:74px;width:3px;height:740px;background:#f5f5f5"></div>
<div class="tab" style="left:985px;top:75px;width:63px;height:21px"></div>
<div class="t" style="left:995.5px;top:79.7px;font-size:12px;line-height:15px;height:15px;color:#111;transform:scaleX(0.583);">ナビゲーター</div>
<div class="hl" style="left:985px;top:98px;width:174px"></div>
<div class="a" style="left:985px;top:100px;width:174px;height:145.5px;background:#989898"></div>
<svg style="left:998px;top:100px;overflow:hidden" width="147" height="145.5" viewBox="0 0 147 145"  preserveAspectRatio="none"><rect width="147" height="145" fill="#fcfcfb"/><g filter="url(#fb)"><path d="M-11.4 0Q0 -9.7 11.4 0Q0 9.7 -11.4 0Z" transform="translate(30.8 17.5) rotate(40)" fill="#aab6a8" opacity="0.8"/><path d="M-9.5 0Q0 -8.7 9.5 0Q0 8.7 -9.5 0Z" transform="translate(8.0 30.8) rotate(20)" fill="#aab6a8" opacity="0.8"/><path d="M-11.8 0Q0 -10.8 11.8 0Q0 10.8 -11.8 0Z" transform="translate(34.6 59.3) rotate(-30)" fill="#aab6a8" opacity="0.8"/><path d="M-10.6 0Q0 -9.7 10.6 0Q0 9.7 -10.6 0Z" transform="translate(45.0 67.8) rotate(30)" fill="#aab6a8" opacity="0.8"/><path d="M-11.8 0Q0 -11.9 11.8 0Q0 11.9 -11.8 0Z" transform="translate(17.5 74.5) rotate(60)" fill="#aab6a8" opacity="0.8"/><path d="M-9.9 0Q0 -9.2 9.9 0Q0 9.2 -9.9 0Z" transform="translate(25.1 87.8) rotate(50)" fill="#aab6a8" opacity="0.8"/><path d="M-9.5 0Q0 -8.7 9.5 0Q0 8.7 -9.5 0Z" transform="translate(9.9 101.1) rotate(30)" fill="#aab6a8" opacity="0.8"/><path d="M-10.6 0Q0 -9.7 10.6 0Q0 9.7 -10.6 0Z" transform="translate(19.4 112.5) rotate(-60)" fill="#aab6a8" opacity="0.8"/><path d="M-9.9 0Q0 -9.7 9.9 0Q0 9.7 -9.9 0Z" transform="translate(15.6 142.9) rotate(-30)" fill="#aab6a8" opacity="0.8"/><path d="M-11.8 0Q0 -10.8 11.8 0Q0 10.8 -11.8 0Z" transform="translate(74.5 93.5) rotate(-60)" fill="#aab6a8" opacity="0.8"/><path d="M-9.9 0Q0 -8.1 9.9 0Q0 8.1 -9.9 0Z" transform="translate(86.8 85.9) rotate(-50)" fill="#aab6a8" opacity="0.8"/><path d="M-12.9 0Q0 -9.7 12.9 0Q0 9.7 -12.9 0Z" transform="translate(78.3 101.1) rotate(-20)" fill="#aab6a8" opacity="0.8"/><path d="M-15.2 0Q0 -10.8 15.2 0Q0 10.8 -15.2 0Z" transform="translate(70.7 121.0) rotate(-15)" fill="#aab6a8" opacity="0.8"/><path d="M-11.8 0Q0 -10.8 11.8 0Q0 10.8 -11.8 0Z" transform="translate(101.1 93.5) rotate(70)" fill="#aab6a8" opacity="0.8"/><path d="M-9.5 0Q0 -8.7 9.5 0Q0 8.7 -9.5 0Z" transform="translate(109.6 101.1) rotate(60)" fill="#aab6a8" opacity="0.8"/><path d="M-13.3 0Q0 -10.8 13.3 0Q0 10.8 -13.3 0Z" transform="translate(123.9 78.3) rotate(20)" fill="#aab6a8" opacity="0.8"/><path d="M-11.8 0Q0 -9.7 11.8 0Q0 9.7 -11.8 0Z" transform="translate(131.5 97.3) rotate(70)" fill="#aab6a8" opacity="0.8"/><path d="M-10.6 0Q0 -8.7 10.6 0Q0 8.7 -10.6 0Z" transform="translate(140.0 108.7) rotate(65)" fill="#aab6a8" opacity="0.8"/><path d="M-11.8 0Q0 -10.3 11.8 0Q0 10.3 -11.8 0Z" transform="translate(98.2 23.2) rotate(60)" fill="#aab6a8" opacity="0.8"/><path d="M-10.6 0Q0 -9.7 10.6 0Q0 9.7 -10.6 0Z" transform="translate(89.7 11.8) rotate(30)" fill="#aab6a8" opacity="0.8"/><path d="M-10.6 0Q0 -9.2 10.6 0Q0 9.2 -10.6 0Z" transform="translate(102.0 33.6) rotate(75)" fill="#aab6a8" opacity="0.8"/><path d="M-10.6 0Q0 -9.7 10.6 0Q0 9.7 -10.6 0Z" transform="translate(74.5 11.8) rotate(-20)" fill="#aab6a8" opacity="0.8"/><path d="M-9.5 0Q0 -7.0 9.5 0Q0 7.0 -9.5 0Z" transform="translate(117.2 44.1) rotate(-40)" fill="#aab6a8" opacity="0.8"/><path d="M-7.6 0Q0 -7.0 7.6 0Q0 7.0 -7.6 0Z" transform="translate(8.0 55.5) rotate(0)" fill="#aab6a8" opacity="0.8"/><path d="M-9.5 0Q0 -7.6 9.5 0Q0 7.6 -9.5 0Z" transform="translate(66.9 110.6) rotate(-60)" fill="#aab6a8" opacity="0.8"/><path d="M-8.4 0Q0 -8.1 8.4 0Q0 8.1 -8.4 0Z" transform="translate(148.6 89.7) rotate(80)" fill="#aab6a8" opacity="0.8"/><path d="M-9.5 0Q0 -8.7 9.5 0Q0 8.7 -9.5 0Z" transform="translate(8.0 125.8) rotate(70)" fill="#aab6a8" opacity="0.8"/><path d="M-7.6 0Q0 -7.0 7.6 0Q0 7.0 -7.6 0Z" transform="translate(110.6 6.1) rotate(80)" fill="#aab6a8" opacity="0.8"/><path d="M-8.4 0Q0 -7.0 8.4 0Q0 7.0 -8.4 0Z" transform="translate(59.3 42.2) rotate(20)" fill="#aab6a8" opacity="0.8"/><path d="M-9.5 0Q0 -7.6 9.5 0Q0 7.6 -9.5 0Z" transform="translate(127.7 85.9) rotate(40)" fill="#aab6a8" opacity="0.8"/><path d="M-8.4 0Q0 -7.6 8.4 0Q0 7.6 -8.4 0Z" transform="translate(49.8 112.5) rotate(20)" fill="#aab6a8" opacity="0.8"/><path d="M-8.4 0Q0 -7.6 8.4 0Q0 7.6 -8.4 0Z" transform="translate(93.5 101.1) rotate(80)" fill="#aab6a8" opacity="0.8"/><path d="M-9.5 0Q0 -8.1 9.5 0Q0 8.1 -9.5 0Z" transform="translate(25.1 57.4) rotate(-10)" fill="#aab6a8" opacity="0.8"/><path d="M-7.6 0Q0 -6.5 7.6 0Q0 6.5 -7.6 0Z" transform="translate(44.1 78.3) rotate(70)" fill="#aab6a8" opacity="0.8"/><path d="M-7.6 0Q0 -6.5 7.6 0Q0 6.5 -7.6 0Z" transform="translate(85.9 28.9) rotate(45)" fill="#aab6a8" opacity="0.8"/><path d="M-7.6 0Q0 -7.0 7.6 0Q0 7.0 -7.6 0Z" transform="translate(139.1 42.2) rotate(-70)" fill="#aab6a8" opacity="0.8"/><path d="M-6.8 0Q0 -6.5 6.8 0Q0 6.5 -6.8 0Z" transform="translate(146.7 123.9) rotate(70)" fill="#aab6a8" opacity="0.8"/><path d="M-8.4 0Q0 -7.6 8.4 0Q0 7.6 -8.4 0Z" transform="translate(6.1 6.1) rotate(-30)" fill="#aab6a8" opacity="0.8"/><path d="M-6.8 0Q0 -6.0 6.8 0Q0 6.0 -6.8 0Z" transform="translate(21.3 11.8) rotate(50)" fill="#aab6a8" opacity="0.8"/><path d="M-8.4 0Q0 -7.0 8.4 0Q0 7.0 -8.4 0Z" transform="translate(53.6 141.0) rotate(10)" fill="#aab6a8" opacity="0.8"/><path d="M-8.4 0Q0 -7.0 8.4 0Q0 7.0 -8.4 0Z" transform="translate(112.5 80.2) rotate(-30)" fill="#aab6a8" opacity="0.8"/><ellipse cx="49.9" cy="24.1" rx="7.3" ry="5.6" transform="rotate(10 49.9 24.1)" fill="#cdaeea" opacity="0.8"/><ellipse cx="42.9" cy="28.2" rx="7.3" ry="5.6" transform="rotate(102 42.9 28.2)" fill="#cdaeea" opacity="0.8"/><ellipse cx="39.1" cy="25.9" rx="7.3" ry="5.6" transform="rotate(148 39.1 25.9)" fill="#cdaeea" opacity="0.8"/><ellipse cx="40.1" cy="19.4" rx="7.3" ry="5.6" transform="rotate(228 40.1 19.4)" fill="#cdaeea" opacity="0.8"/><ellipse cx="47.7" cy="19.1" rx="7.3" ry="5.6" transform="rotate(308 47.7 19.1)" fill="#cdaeea" opacity="0.8"/><ellipse cx="43.5" cy="23.7" rx="4.9" ry="3.7" transform="rotate(20 43.5 23.7)" fill="#a07fd4" opacity="0.7"/><ellipse cx="42.9" cy="23.7" rx="1.4" ry="1.2" transform="rotate(0 42.9 23.7)" fill="#ffffff" opacity="0.85"/><ellipse cx="45.3" cy="22.7" rx="0.9" ry="0.8" transform="rotate(0 45.3 22.7)" fill="#ffffff" opacity="0.8"/><ellipse cx="17.5" cy="49.9" rx="7.1" ry="5.6" transform="rotate(1 17.5 49.9)" fill="#cdaeea" opacity="0.8"/><ellipse cx="13.4" cy="54.7" rx="7.1" ry="5.6" transform="rotate(74 13.4 54.7)" fill="#cdaeea" opacity="0.8"/><ellipse cx="6.2" cy="50.7" rx="7.1" ry="5.6" transform="rotate(170 6.2 50.7)" fill="#cdaeea" opacity="0.8"/><ellipse cx="8.3" cy="45.7" rx="7.1" ry="5.6" transform="rotate(233 8.3 45.7)" fill="#cdaeea" opacity="0.8"/><ellipse cx="13.8" cy="45.0" rx="7.1" ry="5.6" transform="rotate(291 13.8 45.0)" fill="#cdaeea" opacity="0.8"/><ellipse cx="11.2" cy="50.3" rx="4.8" ry="3.7" transform="rotate(20 11.2 50.3)" fill="#a07fd4" opacity="0.7"/><ellipse cx="10.6" cy="50.3" rx="1.4" ry="1.2" transform="rotate(0 10.6 50.3)" fill="#ffffff" opacity="0.85"/><ellipse cx="12.9" cy="49.3" rx="0.9" ry="0.8" transform="rotate(0 12.9 49.3)" fill="#ffffff" opacity="0.8"/><ellipse cx="99.4" cy="66.1" rx="8.7" ry="6.5" transform="rotate(11 99.4 66.1)" fill="#cdaeea" opacity="0.8"/><ellipse cx="92.5" cy="70.9" rx="8.7" ry="6.5" transform="rotate(90 92.5 70.9)" fill="#cdaeea" opacity="0.8"/><ellipse cx="86.8" cy="68.4" rx="8.7" ry="6.5" transform="rotate(145 86.8 68.4)" fill="#cdaeea" opacity="0.8"/><ellipse cx="89.6" cy="59.6" rx="8.7" ry="6.5" transform="rotate(245 89.6 59.6)" fill="#cdaeea" opacity="0.8"/><ellipse cx="96.5" cy="60.1" rx="8.7" ry="6.5" transform="rotate(304 96.5 60.1)" fill="#cdaeea" opacity="0.8"/><ellipse cx="91.8" cy="65.6" rx="5.9" ry="4.2" transform="rotate(20 91.8 65.6)" fill="#a07fd4" opacity="0.7"/><ellipse cx="91.1" cy="65.6" rx="1.7" ry="1.4" transform="rotate(0 91.1 65.6)" fill="#ffffff" opacity="0.85"/><ellipse cx="93.9" cy="64.4" rx="1.1" ry="0.9" transform="rotate(0 93.9 64.4)" fill="#ffffff" opacity="0.8"/><ellipse cx="129.6" cy="14.2" rx="7.1" ry="5.4" transform="rotate(6 129.6 14.2)" fill="#cdaeea" opacity="0.8"/><ellipse cx="125.6" cy="18.4" rx="7.1" ry="5.4" transform="rotate(73 125.6 18.4)" fill="#cdaeea" opacity="0.8"/><ellipse cx="119.2" cy="16.4" rx="7.1" ry="5.4" transform="rotate(146 119.2 16.4)" fill="#cdaeea" opacity="0.8"/><ellipse cx="120.1" cy="10.0" rx="7.1" ry="5.4" transform="rotate(229 120.1 10.0)" fill="#cdaeea" opacity="0.8"/><ellipse cx="126.8" cy="9.4" rx="7.1" ry="5.4" transform="rotate(301 126.8 9.4)" fill="#cdaeea" opacity="0.8"/><ellipse cx="123.3" cy="14.2" rx="4.8" ry="3.6" transform="rotate(20 123.3 14.2)" fill="#a07fd4" opacity="0.7"/><ellipse cx="122.7" cy="14.2" rx="1.4" ry="1.2" transform="rotate(0 122.7 14.2)" fill="#ffffff" opacity="0.85"/><ellipse cx="125.0" cy="13.2" rx="0.9" ry="0.8" transform="rotate(0 125.0 13.2)" fill="#ffffff" opacity="0.8"/><ellipse cx="42.4" cy="127.9" rx="7.3" ry="5.6" transform="rotate(2 42.4 127.9)" fill="#cdaeea" opacity="0.8"/><ellipse cx="37.6" cy="132.7" rx="7.3" ry="5.6" transform="rotate(79 37.6 132.7)" fill="#cdaeea" opacity="0.8"/><ellipse cx="31.6" cy="130.6" rx="7.3" ry="5.6" transform="rotate(146 31.6 130.6)" fill="#cdaeea" opacity="0.8"/><ellipse cx="32.9" cy="123.6" rx="7.3" ry="5.6" transform="rotate(233 32.9 123.6)" fill="#cdaeea" opacity="0.8"/><ellipse cx="39.5" cy="123.3" rx="7.3" ry="5.6" transform="rotate(301 39.5 123.3)" fill="#cdaeea" opacity="0.8"/><ellipse cx="35.9" cy="128.2" rx="4.9" ry="3.7" transform="rotate(20 35.9 128.2)" fill="#a07fd4" opacity="0.7"/><ellipse cx="35.3" cy="128.2" rx="1.4" ry="1.2" transform="rotate(0 35.3 128.2)" fill="#ffffff" opacity="0.85"/><ellipse cx="37.7" cy="127.2" rx="0.9" ry="0.8" transform="rotate(0 37.7 127.2)" fill="#ffffff" opacity="0.8"/><ellipse cx="138.7" cy="136.3" rx="7.8" ry="5.9" transform="rotate(1 138.7 136.3)" fill="#cdaeea" opacity="0.8"/><ellipse cx="131.6" cy="141.5" rx="7.8" ry="5.9" transform="rotate(98 131.6 141.5)" fill="#cdaeea" opacity="0.8"/><ellipse cx="126.5" cy="137.9" rx="7.8" ry="5.9" transform="rotate(162 126.5 137.9)" fill="#cdaeea" opacity="0.8"/><ellipse cx="127.6" cy="132.9" rx="7.8" ry="5.9" transform="rotate(219 127.6 132.9)" fill="#cdaeea" opacity="0.8"/><ellipse cx="137.1" cy="132.7" rx="7.8" ry="5.9" transform="rotate(318 137.1 132.7)" fill="#cdaeea" opacity="0.8"/><ellipse cx="131.8" cy="136.8" rx="5.3" ry="3.8" transform="rotate(20 131.8 136.8)" fill="#a07fd4" opacity="0.7"/><ellipse cx="131.2" cy="136.8" rx="1.5" ry="1.3" transform="rotate(0 131.2 136.8)" fill="#ffffff" opacity="0.85"/><ellipse cx="133.7" cy="135.7" rx="1.0" ry="0.9" transform="rotate(0 133.7 135.7)" fill="#ffffff" opacity="0.8"/><ellipse cx="146.1" cy="71.1" rx="3.5" ry="3.3" transform="rotate(7 146.1 71.1)" fill="#cdaeea" opacity="0.8"/><ellipse cx="143.2" cy="73.7" rx="3.5" ry="3.3" transform="rotate(92 143.2 73.7)" fill="#cdaeea" opacity="0.8"/><ellipse cx="140.5" cy="71.5" rx="3.5" ry="3.3" transform="rotate(164 140.5 71.5)" fill="#cdaeea" opacity="0.8"/><ellipse cx="141.6" cy="68.2" rx="3.5" ry="3.3" transform="rotate(234 141.6 68.2)" fill="#cdaeea" opacity="0.8"/><ellipse cx="145.4" cy="68.6" rx="3.5" ry="3.3" transform="rotate(318 145.4 68.6)" fill="#cdaeea" opacity="0.8"/><ellipse cx="143.0" cy="71.0" rx="2.4" ry="2.2" transform="rotate(20 143.0 71.0)" fill="#a07fd4" opacity="0.7"/><ellipse cx="142.7" cy="71.0" rx="0.7" ry="0.7" transform="rotate(0 142.7 71.0)" fill="#ffffff" opacity="0.85"/><ellipse cx="143.8" cy="70.4" rx="0.5" ry="0.5" transform="rotate(0 143.8 70.4)" fill="#ffffff" opacity="0.8"/><ellipse cx="65.9" cy="2.7" rx="3.5" ry="2.3" transform="rotate(1 65.9 2.7)" fill="#cdaeea" opacity="0.8"/><ellipse cx="63.1" cy="4.8" rx="3.5" ry="2.3" transform="rotate(90 63.1 4.8)" fill="#cdaeea" opacity="0.8"/><ellipse cx="60.4" cy="3.3" rx="3.5" ry="2.3" transform="rotate(162 60.4 3.3)" fill="#cdaeea" opacity="0.8"/><ellipse cx="61.2" cy="1.1" rx="3.5" ry="2.3" transform="rotate(228 61.2 1.1)" fill="#cdaeea" opacity="0.8"/><ellipse cx="64.0" cy="0.7" rx="3.5" ry="2.3" transform="rotate(289 64.0 0.7)" fill="#cdaeea" opacity="0.8"/><ellipse cx="62.8" cy="2.9" rx="2.4" ry="1.5" transform="rotate(20 62.8 2.9)" fill="#a07fd4" opacity="0.7"/><ellipse cx="62.5" cy="2.9" rx="0.7" ry="0.5" transform="rotate(0 62.5 2.9)" fill="#ffffff" opacity="0.85"/><ellipse cx="63.7" cy="2.5" rx="0.5" ry="0.3" transform="rotate(0 63.7 2.5)" fill="#ffffff" opacity="0.8"/><ellipse cx="65.7" cy="145.0" rx="3.3" ry="1.7" transform="rotate(7 65.7 145.0)" fill="#cdaeea" opacity="0.8"/><ellipse cx="63.9" cy="146.2" rx="3.3" ry="1.7" transform="rotate(73 63.9 146.2)" fill="#cdaeea" opacity="0.8"/><ellipse cx="60.6" cy="145.3" rx="3.3" ry="1.7" transform="rotate(161 60.6 145.3)" fill="#cdaeea" opacity="0.8"/><ellipse cx="61.9" cy="143.4" rx="3.3" ry="1.7" transform="rotate(243 61.9 143.4)" fill="#cdaeea" opacity="0.8"/><ellipse cx="64.1" cy="143.4" rx="3.3" ry="1.7" transform="rotate(292 64.1 143.4)" fill="#cdaeea" opacity="0.8"/><ellipse cx="62.8" cy="144.9" rx="2.2" ry="1.1" transform="rotate(20 62.8 144.9)" fill="#a07fd4" opacity="0.7"/><ellipse cx="62.5" cy="144.9" rx="0.6" ry="0.4" transform="rotate(0 62.5 144.9)" fill="#ffffff" opacity="0.85"/><ellipse cx="63.6" cy="144.6" rx="0.4" ry="0.2" transform="rotate(0 63.6 144.6)" fill="#ffffff" opacity="0.8"/><ellipse cx="5.7" cy="71.2" rx="1.9" ry="3.3" transform="rotate(9 5.7 71.2)" fill="#cdaeea" opacity="0.8"/><ellipse cx="4.3" cy="73.7" rx="1.9" ry="3.3" transform="rotate(85 4.3 73.7)" fill="#cdaeea" opacity="0.8"/><ellipse cx="2.9" cy="72.3" rx="1.9" ry="3.3" transform="rotate(148 2.9 72.3)" fill="#cdaeea" opacity="0.8"/><ellipse cx="3.3" cy="68.3" rx="1.9" ry="3.3" transform="rotate(233 3.3 68.3)" fill="#cdaeea" opacity="0.8"/><ellipse cx="4.7" cy="67.8" rx="1.9" ry="3.3" transform="rotate(291 4.7 67.8)" fill="#cdaeea" opacity="0.8"/><ellipse cx="4.0" cy="71.0" rx="1.3" ry="2.2" transform="rotate(20 4.0 71.0)" fill="#a07fd4" opacity="0.7"/><ellipse cx="3.9" cy="71.0" rx="0.4" ry="0.7" transform="rotate(0 3.9 71.0)" fill="#ffffff" opacity="0.85"/><ellipse cx="4.5" cy="70.4" rx="0.2" ry="0.5" transform="rotate(0 4.5 70.4)" fill="#ffffff" opacity="0.8"/><path d="M-8.7 0Q0 -8.1 8.7 0Q0 8.1 -8.7 0Z" transform="translate(53.6 46.0) rotate(60)" fill="#2c4a2f" opacity="0.9"/><path d="M-9.5 0Q0 -8.1 9.5 0Q0 8.1 -9.5 0Z" transform="translate(59.3 57.4) rotate(80)" fill="#2c4a2f" opacity="0.9"/><path d="M-8.4 0Q0 -7.0 8.4 0Q0 7.0 -8.4 0Z" transform="translate(63.1 68.8) rotate(85)" fill="#2c4a2f" opacity="0.9"/><path d="M-7.2 0Q0 -6.5 7.2 0Q0 6.5 -7.2 0Z" transform="translate(67.8 47.9) rotate(40)" fill="#2c4a2f" opacity="0.9"/><path d="M-6.5 0Q0 -8.1 6.5 0Q0 8.1 -6.5 0Z" transform="translate(140.0 8.9) rotate(40)" fill="#2c4a2f" opacity="0.9"/><path d="M-8.7 0Q0 -8.7 8.7 0Q0 8.7 -8.7 0Z" transform="translate(141.9 23.2) rotate(80)" fill="#2c4a2f" opacity="0.9"/><path d="M-5.7 0Q0 -6.0 5.7 0Q0 6.0 -5.7 0Z" transform="translate(145.2 15.6) rotate(60)" fill="#2c4a2f" opacity="0.9"/><path d="M-10.3 0Q0 -8.7 10.3 0Q0 8.7 -10.3 0Z" transform="translate(116.3 63.1) rotate(-35)" fill="#2c4a2f" opacity="0.9"/><path d="M-9.1 0Q0 -7.6 9.1 0Q0 7.6 -9.1 0Z" transform="translate(125.8 55.5) rotate(-45)" fill="#2c4a2f" opacity="0.9"/><path d="M-8.0 0Q0 -7.0 8.0 0Q0 7.0 -8.0 0Z" transform="translate(133.4 46.0) rotate(-60)" fill="#2c4a2f" opacity="0.9"/><path d="M-6.8 0Q0 -6.0 6.8 0Q0 6.0 -6.8 0Z" transform="translate(120.1 69.2) rotate(-15)" fill="#2c4a2f" opacity="0.9"/><path d="M-9.1 0Q0 -8.7 9.1 0Q0 8.7 -9.1 0Z" transform="translate(44.1 85.9) rotate(80)" fill="#2c4a2f" opacity="0.9"/><path d="M-8.0 0Q0 -8.7 8.0 0Q0 8.7 -8.0 0Z" transform="translate(38.4 104.9) rotate(60)" fill="#2c4a2f" opacity="0.9"/><path d="M-8.0 0Q0 -7.0 8.0 0Q0 7.0 -8.0 0Z" transform="translate(32.7 80.2) rotate(50)" fill="#2c4a2f" opacity="0.9"/><path d="M-8.4 0Q0 -8.1 8.4 0Q0 8.1 -8.4 0Z" transform="translate(108.7 125.8) rotate(-60)" fill="#2c4a2f" opacity="0.9"/><path d="M-7.6 0Q0 -7.6 7.6 0Q0 7.6 -7.6 0Z" transform="translate(104.9 137.2) rotate(-70)" fill="#2c4a2f" opacity="0.9"/><path d="M-5.7 0Q0 -6.0 5.7 0Q0 6.0 -5.7 0Z" transform="translate(101.1 123.9) rotate(-40)" fill="#2c4a2f" opacity="0.9"/><path d="M-6.8 0Q0 -6.0 6.8 0Q0 6.0 -6.8 0Z" transform="translate(6.1 23.2) rotate(30)" fill="#2c4a2f" opacity="0.9"/><path d="M-5.7 0Q0 -5.4 5.7 0Q0 5.4 -5.7 0Z" transform="translate(111.5 133.4) rotate(-80)" fill="#2c4a2f" opacity="0.9"/><ellipse cx="70.7" cy="28.9" rx="5.2" ry="2.6" transform="rotate(50 70.7 28.9)" fill="#6b5aa6" opacity="0.92"/><ellipse cx="78.3" cy="35.5" rx="4.8" ry="2.4" transform="rotate(40 78.3 35.5)" fill="#8f62c4" opacity="0.92"/><ellipse cx="82.1" cy="44.5" rx="6.1" ry="2.4" transform="rotate(20 82.1 44.5)" fill="#8f62c4" opacity="0.92"/><ellipse cx="25.1" cy="37.4" rx="5.7" ry="2.6" transform="rotate(60 25.1 37.4)" fill="#6b5aa6" opacity="0.92"/><ellipse cx="32.7" cy="41.2" rx="4.4" ry="2.1" transform="rotate(70 32.7 41.2)" fill="#8f62c4" opacity="0.92"/><ellipse cx="44.1" cy="46.9" rx="4.8" ry="2.1" transform="rotate(50 44.1 46.9)" fill="#8f62c4" opacity="0.92"/><ellipse cx="105.8" cy="40.3" rx="6.6" ry="2.9" transform="rotate(-55 105.8 40.3)" fill="#6b5aa6" opacity="0.92"/><ellipse cx="113.4" cy="52.6" rx="5.7" ry="2.6" transform="rotate(-45 113.4 52.6)" fill="#8f62c4" opacity="0.92"/><ellipse cx="118.2" cy="40.3" rx="4.4" ry="1.9" transform="rotate(-20 118.2 40.3)" fill="#8f62c4" opacity="0.92"/><ellipse cx="68.8" cy="75.4" rx="5.7" ry="2.6" transform="rotate(-75 68.8 75.4)" fill="#6b5aa6" opacity="0.92"/><ellipse cx="53.6" cy="89.7" rx="5.2" ry="2.4" transform="rotate(-75 53.6 89.7)" fill="#8f62c4" opacity="0.92"/><ellipse cx="60.2" cy="98.2" rx="5.2" ry="2.4" transform="rotate(-60 60.2 98.2)" fill="#8f62c4" opacity="0.92"/><ellipse cx="89.7" cy="113.4" rx="6.6" ry="2.9" transform="rotate(-55 89.7 113.4)" fill="#6b5aa6" opacity="0.92"/><ellipse cx="121.0" cy="101.1" rx="5.7" ry="2.6" transform="rotate(50 121.0 101.1)" fill="#8f62c4" opacity="0.92"/><ellipse cx="112.5" cy="108.7" rx="5.2" ry="2.4" transform="rotate(85 112.5 108.7)" fill="#8f62c4" opacity="0.92"/><ellipse cx="124.3" cy="114.8" rx="5.2" ry="2.6" transform="rotate(50 124.3 114.8)" fill="#6b5aa6" opacity="0.92"/><ellipse cx="118.2" cy="120.5" rx="4.8" ry="2.4" transform="rotate(80 118.2 120.5)" fill="#8f62c4" opacity="0.92"/><ellipse cx="82.1" cy="129.6" rx="5.7" ry="2.4" transform="rotate(-20 82.1 129.6)" fill="#8f62c4" opacity="0.92"/><ellipse cx="76.4" cy="136.2" rx="5.2" ry="2.1" transform="rotate(0 76.4 136.2)" fill="#6b5aa6" opacity="0.92"/><ellipse cx="94.4" cy="135.3" rx="4.8" ry="2.1" transform="rotate(-75 94.4 135.3)" fill="#8f62c4" opacity="0.92"/><ellipse cx="36.9" cy="3.2" rx="7.4" ry="2.6" transform="rotate(-25 36.9 3.2)" fill="#8f62c4" opacity="0.92"/><ellipse cx="49.8" cy="4.6" rx="4.4" ry="2.1" transform="rotate(55 49.8 4.6)" fill="#6b5aa6" opacity="0.92"/><ellipse cx="15.6" cy="18.4" rx="5.2" ry="2.4" transform="rotate(-45 15.6 18.4)" fill="#8f62c4" opacity="0.92"/><ellipse cx="9.5" cy="87.8" rx="5.2" ry="2.4" transform="rotate(50 9.5 87.8)" fill="#8f62c4" opacity="0.92"/><ellipse cx="17.5" cy="26.0" rx="3.5" ry="1.9" transform="rotate(70 17.5 26.0)" fill="#6b5aa6" opacity="0.92"/><path d="M150 125L215 90" transform="translate(-12.92 -5.32) scale(0.1900)" stroke="#6d6a5c" stroke-width="4" fill="none" opacity=".6"/><path d="M200 225Q230 200 215 165" transform="translate(-12.92 -5.32) scale(0.1900)" stroke="#6d6a5c" stroke-width="4" fill="none" opacity=".6"/><path d="M440 180Q500 240 540 290" transform="translate(-12.92 -5.32) scale(0.1900)" stroke="#6d6a5c" stroke-width="4" fill="none" opacity=".6"/><path d="M625 240Q650 200 660 150" transform="translate(-12.92 -5.32) scale(0.1900)" stroke="#6d6a5c" stroke-width="4" fill="none" opacity=".6"/><path d="M665 305L740 225" transform="translate(-12.92 -5.32) scale(0.1900)" stroke="#6d6a5c" stroke-width="4" fill="none" opacity=".6"/><path d="M430 425Q400 500 350 600" transform="translate(-12.92 -5.32) scale(0.1900)" stroke="#6d6a5c" stroke-width="4" fill="none" opacity=".6"/><path d="M705 560Q680 600 660 520" transform="translate(-12.92 -5.32) scale(0.1900)" stroke="#6d6a5c" stroke-width="4" fill="none" opacity=".6"/><path d="M500 710L380 710" transform="translate(-12.92 -5.32) scale(0.1900)" stroke="#6d6a5c" stroke-width="4" fill="none" opacity=".6"/><path d="M540 625L565 740" transform="translate(-12.92 -5.32) scale(0.1900)" stroke="#6d6a5c" stroke-width="4" fill="none" opacity=".6"/></g><rect x="0" y="0" width="0.8" height="145" fill="#444"/><rect x="146.2" y="0" width="0.8" height="145" fill="#444"/><rect x="8" y="9.3" width="24.5" height="16" fill="none" stroke="#3977b8" stroke-width="1.5"/></svg>
<div class="a" style="left:998px;top:253.5px;width:45px;height:2px;background:#2f7fd0;border-radius:1px"></div>
<div class="a" style="left:1043px;top:254px;width:44px;height:1px;background:#c8c8c8"></div>
<div class="a" style="left:1038.5px;top:249.8px;width:9px;height:9px;background:#2b80d8;border-radius:50%"></div>
<div class="t" style="left:1096.5px;top:247.5px;font-size:11px;line-height:14px;height:14px;color:#222;transform:scaleX(0.782);">100%</div>
<div class="hl" style="left:985px;top:267px;width:174px"></div>
<div class="tab" style="left:985px;top:271.5px;width:50px;height:21px"></div>
<div class="t" style="left:995px;top:275.7px;font-size:12px;line-height:15px;height:15px;color:#111;transform:scaleX(0.609);">レイヤー</div>
<div class="hl" style="left:985px;top:293px;width:174px"></div>
<div class="spin" style="left:987.5px;top:296.5px;width:78px;height:17.5px"></div>
<div class="t" style="left:992.5px;top:298.5px;font-size:11px;line-height:14px;height:14px;color:#111;transform:scaleX(0.864);">通常</div>
<svg style="left:1051px;top:301px" width="10" height="8" viewBox="0 0 10 8"><path d="M1.5 2l3.5 3.5L8.5 2" fill="none" stroke="#444" stroke-width="1"/></svg>
<div class="a" style="left:1075.5px;top:303.5px;width:21px;height:2px;background:#2f7fd0"></div>
<div class="a" style="left:1091.5px;top:299.8px;width:9.5px;height:9.5px;background:#2b80d8;border-radius:50%"></div>
<div class="spin" style="left:1107.5px;top:296.5px;width:49px;height:17.5px"></div>
<div class="a" style="left:1140px;top:297.5px;width:1px;height:15.5px;background:#e2e2e2"></div>
<div class="t" style="left:1119px;top:298.5px;font-size:11px;line-height:14px;height:14px;color:#111;transform:scaleX(0.844);">100</div>
<svg style="left:1143px;top:298px" width="11" height="15" viewBox="0 0 11 15"><path d="M2 6.3l3.5-3.7L9 6.3M2 8.3l3.5 3.7L9 8.3" fill="none" stroke="#555" stroke-width=".9"/></svg>
<div class="a" style="left:985px;top:318.5px;width:173px;height:476px;background:#9a9a9a"></div>
<div class="a" style="left:985px;top:318.5px;width:173px;height:16px;background:#b8d5f8"></div>
<svg style="left:987px;top:319px" width="60" height="15" viewBox="0 0 60 15"><g fill="none" stroke="#111" stroke-width="1.5"><ellipse cx="7" cy="8.5" rx="4.3" ry="3.6"/><path d="M2 3.5l2 2.5M12 3.5l-2 2.5"/></g><rect x="16" y="2" width="12" height="8" fill="#111"/><rect x="16" y="11" width="3" height="2.2" fill="#111"/><rect x="20.5" y="11" width="3" height="2.2" fill="#111"/><rect x="25" y="11" width="3" height="2.2" fill="#111"/><path d="M30 6V2.5h3.5M37.5 13H41V9.5" fill="none" stroke="#111" stroke-width="1"/><path d="M31.5 12.5l1-3.5 5.5-5.5 2.5 2.5-5.5 5.5z" fill="#111"/></svg>
<div class="t" style="left:1004px;top:321px;font-size:6.5px;line-height:7px;height:7px;color:#fff;font-weight:bold;letter-spacing:-.3px">CM</div>
<div class="t" style="left:1029px;top:320.0px;font-size:11px;line-height:14px;height:14px;color:#111;transform:scaleX(0.818);">背景</div>
<svg style="left:1146px;top:321px" width="10" height="11" viewBox="0 0 10 11"><path d="M2.5 5V3.5a2.5 2.5 0 0 1 5 0V5" fill="none" stroke="#111" stroke-width="1.3"/><rect x="1" y="5" width="8" height="5" rx=".500" fill="#111"/></svg>
<svg style="left:985px;top:797px" width="120" height="16" viewBox="0 0 120 16"><g stroke="#111" stroke-width="1.5" fill="none"><path d="M7.5 8.5h8M11.5 4.5v8"/><path d="M25.5 8.5h8"/></g><path d="M44 10c1-3.5 7-3.5 8 0l-1.5.500c-1-2-4-2-5 0z" fill="#111"/><path d="M64 7.5V6a2.5 2.5 0 0 1 5 0v1.5" fill="none" stroke="#111" stroke-width="1.3"/><rect x="62.5" y="7.5" width="8" height="5" rx=".500" fill="#111"/><g fill="none" stroke="#333" stroke-width="1"><ellipse cx="84.5" cy="6" rx="1.8" ry="2.5"/><ellipse cx="84.5" cy="10.5" rx="1.8" ry="2.5"/></g><path d="M99.5 7h7l-3.5 3.5z" fill="#111"/></svg>
<div class="tab" style="left:1167px;top:75px;width:64.5px;height:21px"></div>
<div class="tabi" style="left:1231.5px;top:75px;width:56px;height:20px"></div>
<div class="tabi" style="left:1288px;top:75px;width:49px;height:20px"></div>
<div class="a" style="left:1287.5px;top:76px;width:1px;height:18px;background:#d0d0d0"></div>
<div class="t" style="left:1177.5px;top:78.8px;font-size:11px;line-height:14px;height:14px;color:#111;transform:scaleX(0.782);">色相・彩度</div>
<div class="t" style="left:1242px;top:79.7px;font-size:12px;line-height:15px;height:15px;color:#111;transform:scaleX(0.592);">スウォッチ</div>
<div class="t" style="left:1298px;top:78.5px;font-size:11px;line-height:14px;height:14px;color:#111;transform:scaleX(0.864);">近似色</div>
<div class="hl" style="left:1167px;top:96px;width:278.5px"></div>
<div class="a" style="left:1170px;top:109px;width:120px;height:120px;border-radius:50%;background:radial-gradient(closest-side,#fff 0%,rgba(255,255,255,.85) 18%,rgba(255,255,255,.45) 50%,rgba(255,255,255,.12) 80%,rgba(255,255,255,0) 100%),conic-gradient(from 90deg,#f00,#f0f,#00f,#0ff,#0f0,#ff0,#f00)"></div>
<div class="a" style="left:1227.5px;top:175px;width:7px;height:7px;border:1.2px solid #333;border-radius:50%"></div>
<div class="a" style="left:1221px;top:234.5px;width:17px;height:8.5px;background:#333;border-radius:2px"></div>
<div class="t" style="left:1222.5px;top:233.2px;font-size:8.5px;line-height:11.5px;height:11.5px;color:#fff;transform:scaleX(0.987);">273</div>
<div class="a" style="left:1304px;top:113px;width:117.5px;height:117px;background:linear-gradient(to bottom,rgba(40,40,40,0) 0%,rgba(52,52,52,.96) 100%),linear-gradient(to right,#fbf8fe 0%,#a34cf5 100%)"></div>
<div class="a" style="left:1320.5px;top:115.5px;width:6.5px;height:6.5px;border:1.2px solid #222;background:rgba(255,255,255,.5)"></div>
<svg style="left:1421px;top:113px" width="24" height="11" viewBox="0 0 24 11"><path d="M2 5l4.5-4H20a2 2 0 0 1 2 2v4.5a2 2 0 0 1-2 2H6.5z" fill="#333"/></svg>
<div class="t" style="left:1430px;top:113.0px;font-size:8.5px;line-height:11.5px;height:11.5px;color:#fff;transform:scaleX(1.162);">98</div>
<svg style="left:1314px;top:230px" width="20" height="15" viewBox="0 0 20 15"><path d="M9.5 1l2.5 4.5h4a2 2 0 0 1 2 2V12a2 2 0 0 1-2 2H3a2 2 0 0 1-2-2V7.5a2 2 0 0 1 2-2h4z" fill="#333"/></svg>
<div class="t" style="left:1318.5px;top:234.2px;font-size:8.5px;line-height:11.5px;height:11.5px;color:#fff;transform:scaleX(1.162);">14</div>
<div class="hl" style="left:1167px;top:259px;width:278.5px"></div>
<div class="tab" style="left:1167px;top:263px;width:40px;height:21px"></div>
<div class="t" style="left:1176.5px;top:268.7px;font-size:12px;line-height:15px;height:15px;color:#111;transform:scaleX(0.583);">カラー</div>
<div class="hl" style="left:1167px;top:285px;width:278.5px"></div>
<div class="a" style="left:1168.5px;top:289.5px;width:20.5px;height:9px;border:1px solid #555;border-radius:1px;background:#f4f4f4"></div>
<div class="a" style="left:1189px;top:289.5px;width:20.5px;height:9px;border:1px solid #555;border-radius:1px;background:#f4f4f4"></div>
<div class="a" style="left:1209.5px;top:289.5px;width:21.5px;height:9px;border-radius:1px;background:#333"></div>
<div class="t" style="left:1170.5px;top:289.6px;font-size:8.5px;line-height:11.5px;height:11.5px;color:#333;transform:scaleX(0.923);">RGB</div>
<div class="t" style="left:1190.5px;top:289.6px;font-size:8.5px;line-height:11.5px;height:11.5px;color:#333;transform:scaleX(0.972);">HSB</div>
<div class="t" style="left:1211px;top:289.6px;font-size:8.5px;line-height:11.5px;height:11.5px;color:#fff;transform:scaleX(0.979);">CMY</div>
<div class="a" style="left:1192.5px;top:321px;width:33.5px;height:33.5px;background:#fdfefb;border:1px solid #c4c4c4;border-radius:5px"></div>
<div class="a" style="left:1173px;top:302.5px;width:35px;height:34.5px;background:#ecd7fb;border:2px solid #161616;border-radius:6px"></div>
<div class="a" style="left:1176px;top:340.5px;width:12px;height:11.5px;background:#ecd7fb;border:1px solid #333"></div>
<svg style="left:1210px;top:303px" width="14" height="16" viewBox="0 0 14 16"><path d="M3 3.5c4-1.5 7.5 1.5 7.5 7" fill="none" stroke="#111" stroke-width="1.8"/><path d="M1 6.5L2 1l4.5 3.5zM7.5 10h6l-3 4.5z" fill="#111"/></svg>
<div class="t" style="left:1238.5px;top:294.0px;font-size:11px;line-height:14px;height:14px;color:#222;transform:scaleX(0.880);">C</div>
<div class="a" style="left:1252px;top:293.5px;width:134.5px;height:4.5px;background:linear-gradient(to right,#ead9f6,#a8d2ee 45%,#2fc4e2 100%)"></div>
<svg style="left:1258.2px;top:299.0px" width="10" height="9" viewBox="0 0 10 9"><path d="M5 .500L9.5 8.5H.500z" fill="#111"/></svg>
<div class="spin" style="left:1394.5px;top:291.5px;width:49px;height:17.5px"></div>
<div class="a" style="left:1427.5px;top:292.5px;width:1px;height:15.5px;background:#e2e2e2"></div>
<div class="t" style="left:1407.5px;top:293.5px;font-size:11px;line-height:14px;height:14px;color:#111;transform:scaleX(0.898);">20</div>
<svg style="left:1430.5px;top:293.0px" width="11" height="15" viewBox="0 0 11 15"><path d="M2 6.3l3.5-3.7L9 6.3M2 8.3l3.5 3.7L9 8.3" fill="none" stroke="#555" stroke-width=".9"/></svg>
<div class="t" style="left:1237.5px;top:315.5px;font-size:11px;line-height:14px;height:14px;color:#222;transform:scaleX(1.036);">M</div>
<div class="a" style="left:1252px;top:315.5px;width:134.5px;height:4.5px;background:linear-gradient(to right,#eaf6fb,#e8a8ee 45%,#e22fe0 100%)"></div>
<svg style="left:1268.2px;top:321.0px" width="10" height="9" viewBox="0 0 10 9"><path d="M5 .500L9.5 8.5H.500z" fill="#111"/></svg>
<div class="spin" style="left:1394.5px;top:313.5px;width:49px;height:17.5px"></div>
<div class="a" style="left:1427.5px;top:314.5px;width:1px;height:15.5px;background:#e2e2e2"></div>
<div class="t" style="left:1407.5px;top:315.5px;font-size:11px;line-height:14px;height:14px;color:#111;transform:scaleX(0.898);">39</div>
<svg style="left:1430.5px;top:315.0px" width="11" height="15" viewBox="0 0 11 15"><path d="M2 6.3l3.5-3.7L9 6.3M2 8.3l3.5 3.7L9 8.3" fill="none" stroke="#555" stroke-width=".9"/></svg>
<div class="t" style="left:1238.5px;top:337.0px;font-size:11px;line-height:14px;height:14px;color:#222;transform:scaleX(0.953);">Y</div>
<div class="a" style="left:1252px;top:337.5px;width:134.5px;height:4.5px;background:linear-gradient(to right,#ecd6f4,#ecd69a 45%,#e6d628 100%)"></div>
<svg style="left:1249.8px;top:343.0px" width="10" height="9" viewBox="0 0 10 9"><path d="M5 .500L9.5 8.5H.500z" fill="#111"/></svg>
<div class="spin" style="left:1394.5px;top:335px;width:49px;height:17.5px"></div>
<div class="a" style="left:1427.5px;top:336px;width:1px;height:15.5px;background:#e2e2e2"></div>
<div class="t" style="left:1413.0px;top:337.0px;font-size:11px;line-height:14px;height:14px;color:#111;transform:scaleX(0.898);">4</div>
<svg style="left:1430.5px;top:336.5px" width="11" height="15" viewBox="0 0 11 15"><path d="M2 6.3l3.5-3.7L9 6.3M2 8.3l3.5 3.7L9 8.3" fill="none" stroke="#555" stroke-width=".9"/></svg>
<div class="a" style="left:1168px;top:360px;width:15px;height:15px;background:#3a3a3a"></div>
<div class="t" style="left:1173px;top:361.1px;font-size:10.5px;line-height:13.5px;height:13.5px;color:#f0f0f0;transform:scaleX(0.941);">5</div>
<div class="a" style="left:1188px;top:359.5px;width:257px;height:15.5px;background:linear-gradient(to bottom,#fff 0%,rgba(255,255,255,0) 48%,rgba(0,0,0,0) 52%,#000 100%),linear-gradient(to right,#f00 0%,#ff0 16.6%,#0f0 33.3%,#0ff 50%,#00f 66.6%,#f0f 83.3%,#f00 97%,#f00 100%)"></div>
<div class="a" style="left:1436px;top:359.5px;width:9px;height:8px;background:#fff"></div>
<div class="a" style="left:1436px;top:367.5px;width:9px;height:7.5px;background:#000"></div>
<div class="dark" style="left:1168px;top:380px;width:277px;height:239.5px"></div>
<div class="a" style="left:1169.5px;top:382px;width:27px;height:26.5px;background:#fcfdfa;border-radius:4px;"></div>
<div class="t" style="left:1172.5px;top:381.8px;font-size:10.5px;line-height:13.5px;height:13.5px;color:#333;transform:scaleX(0.941);">1</div>
<div class="a" style="left:1199.5px;top:382px;width:27px;height:26.5px;background:#ecd8fb;border-radius:4px;border:1.5px solid #fafafa;"></div>
<div class="t" style="left:1202.5px;top:381.8px;font-size:10.5px;line-height:13.5px;height:13.5px;color:#333;transform:scaleX(0.941);">2</div>
<div class="a" style="left:1229.5px;top:382px;width:27px;height:26.5px;background:#b57be0;border-radius:4px;"></div>
<div class="t" style="left:1232.5px;top:381.8px;font-size:10.5px;line-height:13.5px;height:13.5px;color:#4a2a7a;transform:scaleX(0.941);">3</div>
<div class="a" style="left:1259.5px;top:382px;width:27px;height:26.5px;background:#d4d7cb;border-radius:4px;"></div>
<div class="t" style="left:1262.5px;top:381.8px;font-size:10.5px;line-height:13.5px;height:13.5px;color:#333;transform:scaleX(0.941);">4</div>
<div class="a" style="left:1289.5px;top:382px;width:27px;height:26.5px;background:#545256;border-radius:4px;"></div>
<div class="t" style="left:1292.5px;top:381.8px;font-size:10.5px;line-height:13.5px;height:13.5px;color:#f0f0f0;transform:scaleX(0.941);">5</div>
<svg style="left:1168px;top:622px" width="190" height="16" viewBox="0 0 190 16"><g stroke="#bdbdbd" stroke-width="1.2" fill="none"><path d="M5 8h8M9 4v8M23 8h8"/></g><path d="M41.5 8.5l2.5 3 4.5-7" fill="none" stroke="#111" stroke-width="1.3"/><path d="M59.5 12.5l.800-3 5-5 2.2 2.2-5 5z" fill="#111"/><path d="M80 8h6" fill="none" stroke="#111" stroke-width="1.4"/><path d="M81.3 5.2v5.6L78 8zM85.7 5.2v5.6L89 8z" fill="#111"/><circle cx="100" cy="8" r="3.3" fill="none" stroke="#111" stroke-width="1.6"/><path d="M97.8 5.8l4.4 4.4" stroke="#111" stroke-width="1.3"/><g stroke="#111" stroke-width=".9"><path d="M153 4v8M149 8h8M150.2 5.2l5.6 5.6M155.8 5.2l-5.6 5.6"/></g><circle cx="153" cy="8" r="1.3" fill="#111"/><path d="M168.5 6.5h7l-3.5 3.5z" fill="#111"/></svg>
<div class="t" style="left:1284.5px;top:624.2px;font-size:12px;line-height:15px;height:15px;color:#111;transform:scaleX(0.611);">クリア</div>
<div class="hl" style="left:1167px;top:642.5px;width:278.5px"></div>
<div class="tab" style="left:1167px;top:647px;width:40px;height:21px"></div>
<div class="t" style="left:1177px;top:650.0px;font-size:11px;line-height:14px;height:14px;color:#111;transform:scaleX(0.886);">配色</div>
<div class="hl" style="left:1167px;top:669px;width:278.5px"></div>
<div class="dark" style="left:1168px;top:672px;width:277px;height:122.5px"></div>
<div class="a" style="left:1169px;top:739.5px;width:275px;height:30.5px;border:1.5px solid #f4f4f4;border-radius:5px"></div>
<div class="a" style="left:1171px;top:675.5px;width:14px;height:14px;background:#ffffff;border-radius:2px"></div>
<div class="a" style="left:1186px;top:675.5px;width:14px;height:14px;background:#fbd5dc;border-radius:2px"></div>
<div class="a" style="left:1201px;top:675.5px;width:14px;height:14px;background:#f06a86;border-radius:2px"></div>
<div class="a" style="left:1216px;top:675.5px;width:14px;height:14px;background:#bfd3e0;border-radius:2px"></div>
<div class="a" style="left:1231px;top:675.5px;width:14px;height:14px;background:#4a4a4a;border-radius:2px"></div>
<div class="t" style="left:1171.5px;top:690.0px;font-size:12px;line-height:15px;height:15px;color:#eeeeee;transform:scaleX(0.795);">1: 配色1</div>
<div class="a" style="left:1171px;top:708.5px;width:14px;height:14px;background:#f6f9ff;border-radius:2px"></div>
<div class="a" style="left:1186px;top:708.5px;width:14px;height:14px;background:#dfe2ff;border-radius:2px"></div>
<div class="a" style="left:1201px;top:708.5px;width:14px;height:14px;background:#6c72f6;border-radius:2px"></div>
<div class="a" style="left:1216px;top:708.5px;width:14px;height:14px;background:#d4dcc0;border-radius:2px"></div>
<div class="a" style="left:1231px;top:708.5px;width:14px;height:14px;background:#4a4a4a;border-radius:2px"></div>
<div class="t" style="left:1171.5px;top:723.0px;font-size:12px;line-height:15px;height:15px;color:#eeeeee;transform:scaleX(0.795);">2: 配色2</div>
<div class="a" style="left:1171px;top:742px;width:14px;height:14px;background:#fdfdfd;border-radius:2px"></div>
<div class="a" style="left:1186px;top:742px;width:14px;height:14px;background:#ecd8fb;border-radius:2px"></div>
<div class="a" style="left:1201px;top:742px;width:14px;height:14px;background:#b57be0;border-radius:2px"></div>
<div class="a" style="left:1216px;top:742px;width:14px;height:14px;background:#d4d7cb;border-radius:2px"></div>
<div class="a" style="left:1231px;top:742px;width:14px;height:14px;background:#4a4a4a;border-radius:2px"></div>
<div class="t" style="left:1171.5px;top:756.0px;font-size:12px;line-height:15px;height:15px;color:#eeeeee;transform:scaleX(0.795);">3: 配色3</div>
<svg style="left:1168px;top:797px" width="100" height="16" viewBox="0 0 100 16"><g stroke="#111" stroke-width="1.5" fill="none"><path d="M6.5 8.5h8M10.5 4.5v8"/><path d="M25 8.5h8"/></g><g stroke="#111" stroke-width="1.1" fill="#111"><path d="M47.5 12.5v-7"/><path d="M45.8 7.5l1.7-3 1.7 3z"/><path d="M66 4.5v7"/><path d="M64.3 9.5l1.7 3 1.7-3z"/></g><path d="M80.5 7h7l-3.5 3.5z" fill="#111"/></svg>
<div class="a" style="left:34px;top:804px;width:945px;height:10px;background:#f5f5f5"></div>
</body></html>
